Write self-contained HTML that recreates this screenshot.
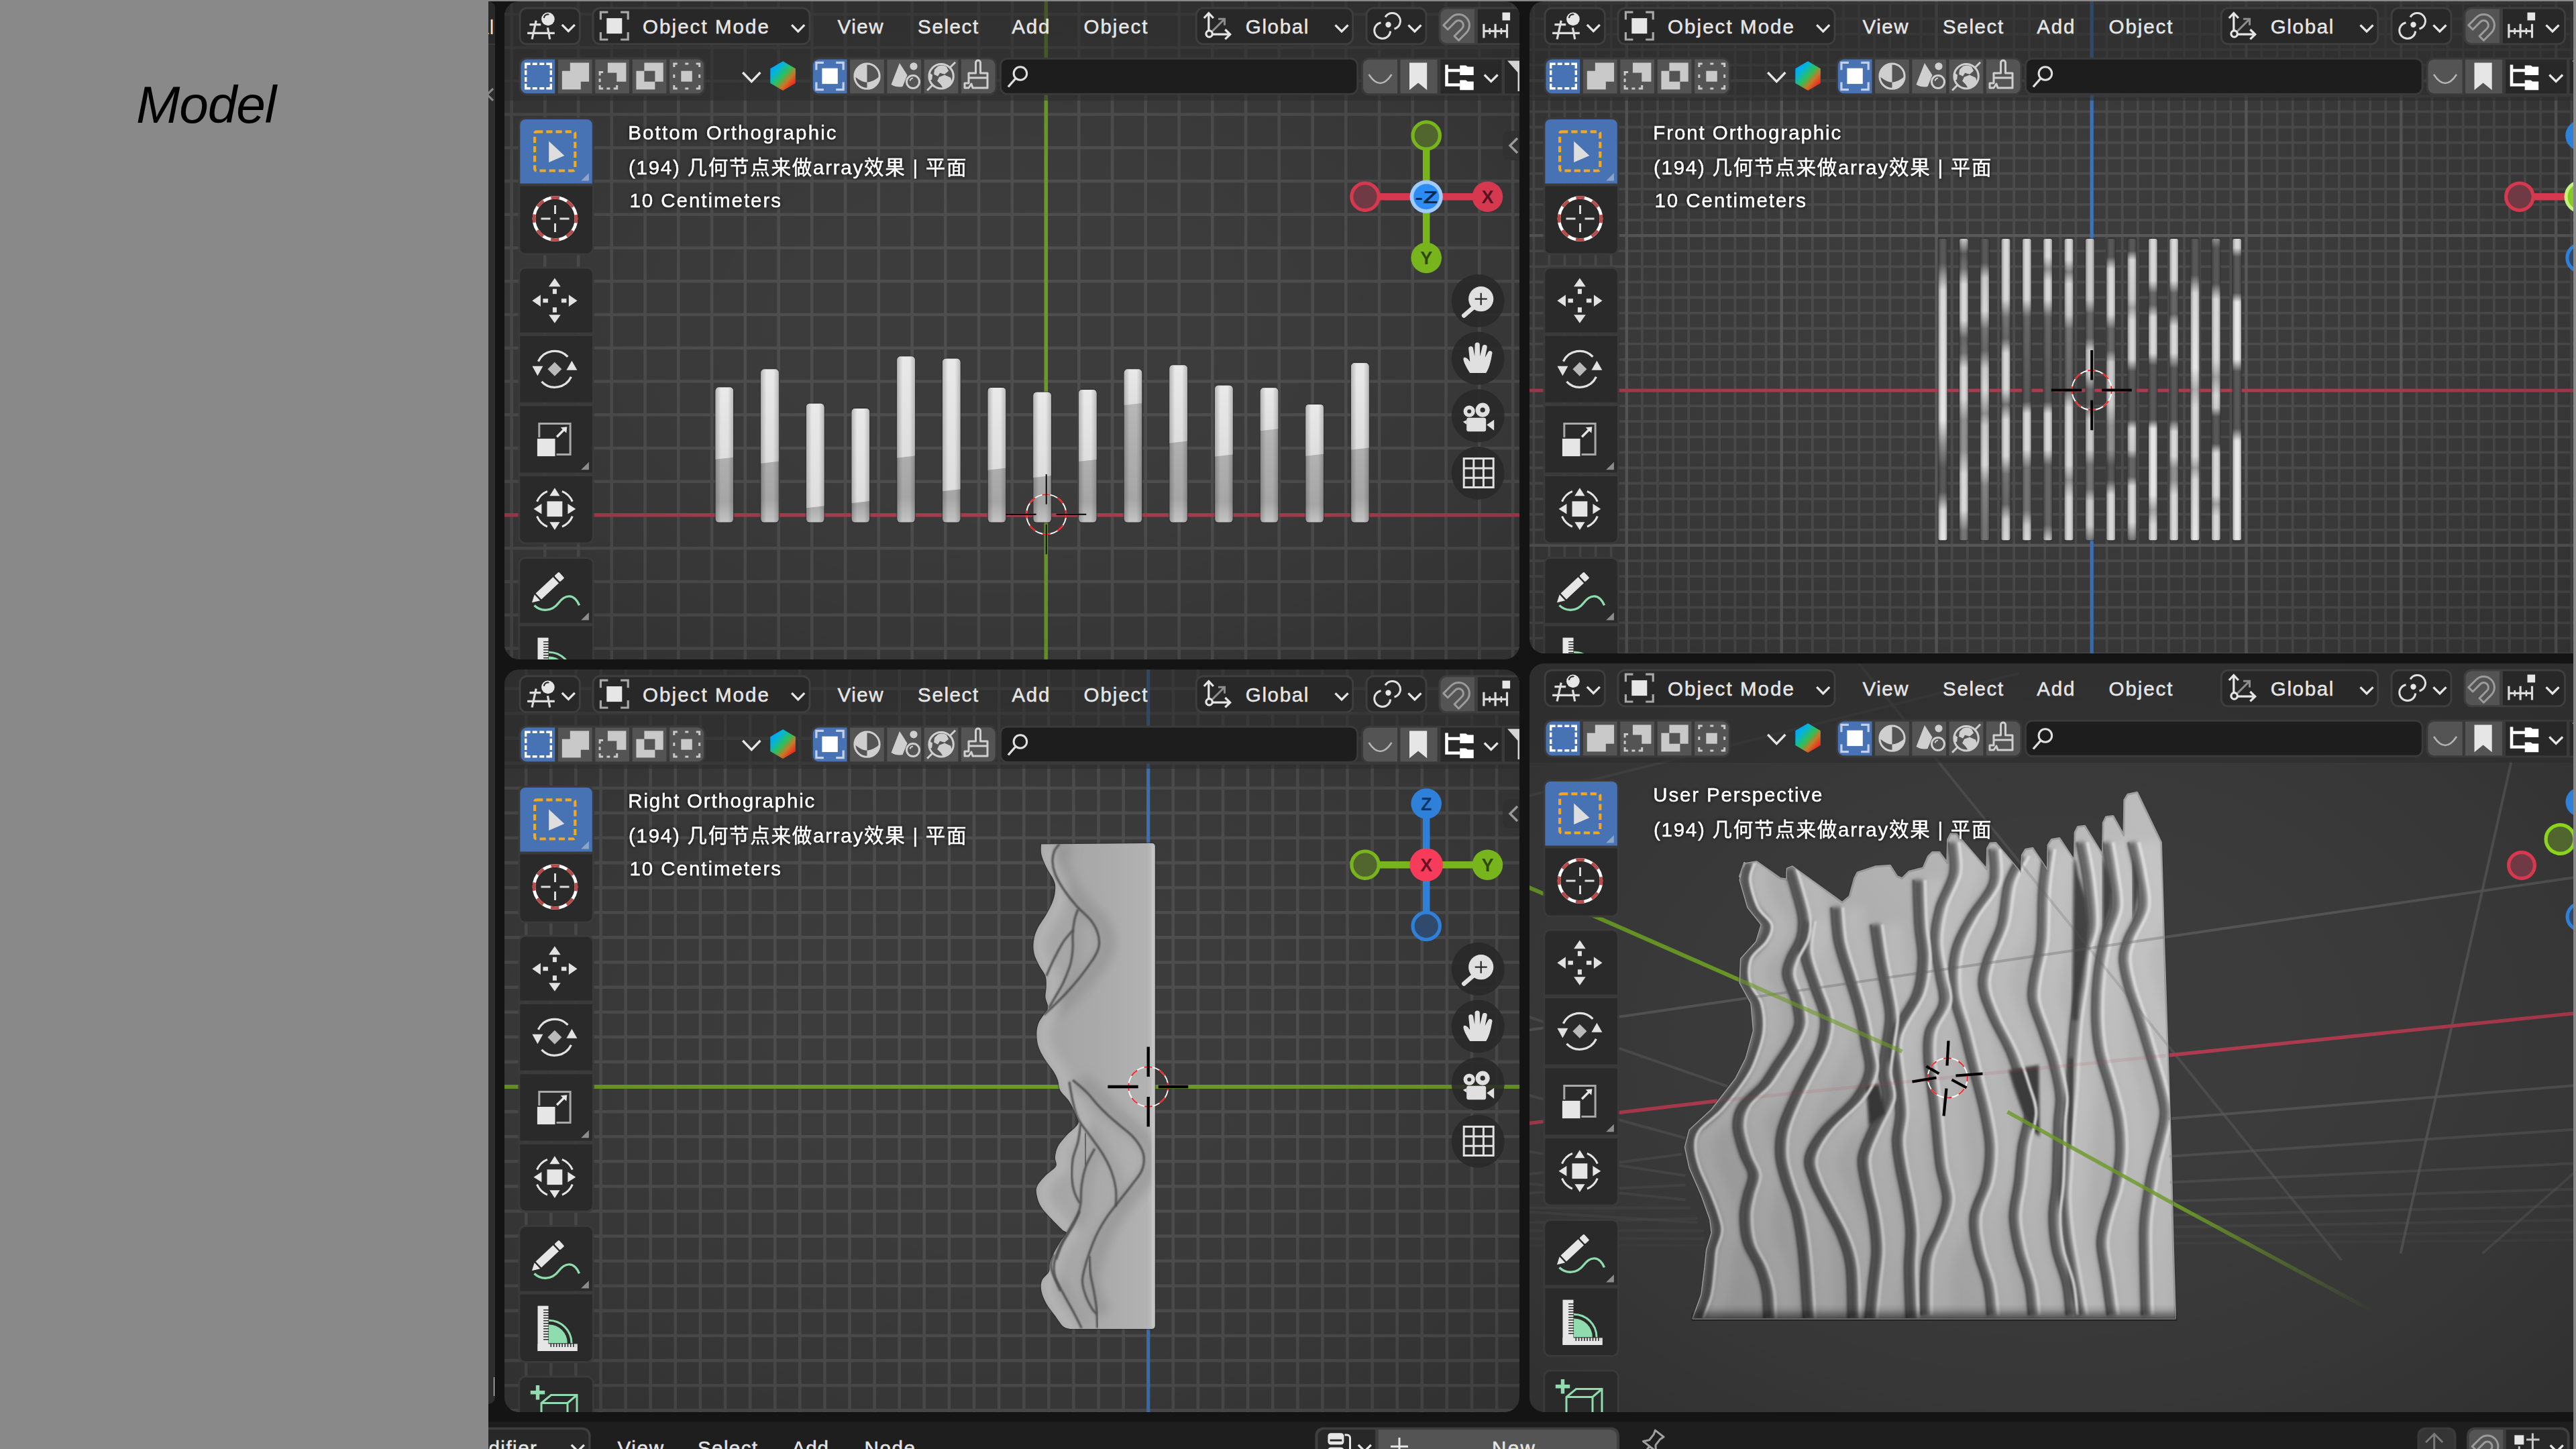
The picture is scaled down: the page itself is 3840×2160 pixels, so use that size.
<!DOCTYPE html><html lang="en"><head><meta charset="utf-8"><title>Model</title><style>
html,body{margin:0;padding:0}
body{width:3840px;height:2160px;overflow:hidden;position:relative;background:#898989;font-family:"Liberation Sans","Noto Sans CJK SC",sans-serif}
#app{position:absolute;left:728px;top:2px;width:3108px;height:2158px;background:#141414;overflow:hidden}
#side{position:absolute;left:0;top:0;width:9.8px;height:2091px;background:#2e2e2e;border-radius:0 10px 10px 0;overflow:hidden}
#side b{position:absolute;left:0;top:0;width:10px;height:63px;background:#292929;border-bottom:2px solid #393939}
#side span{position:absolute;right:0.5px;top:22px;font-size:29.5px;line-height:34px;color:#e6e6e6;white-space:nowrap;letter-spacing:1px}
#side i{position:absolute;left:-1.5px;top:131.5px;width:11px;height:11px;border-left:3.4px solid #8a8a8a;border-bottom:3.4px solid #8a8a8a;transform:rotate(45deg);transform-origin:center}
#side u{position:absolute;left:7.6px;top:2050.5px;width:1.6px;height:28px;background:#e0e0e0}
.vp{position:absolute;overflow:hidden;background:#3c3c3c}
.vp svg{display:block}
#model{position:absolute;left:203px;top:110.5px;font-size:78.4px;line-height:90px;font-style:italic;color:#000;letter-spacing:-1.1px}
#bbar{position:absolute;left:0;top:2113px;width:3108px;height:60px;background:#1d1d1d}
</style></head><body><div id="model">Model</div><div id="app"><div id="side"><b></b><span>al</span><i></i><u></u></div><div class="vp" style="left:23.5px;top:0px;width:1513.5px;height:981px;border-radius:22px"><svg width="1513.5" height="981" viewBox="751.5 2 1513.5 981" font-family='"Liberation Sans", "Noto Sans CJK SC", sans-serif'><defs><linearGradient id="hexg" x1="0.12" y1="0.12" x2="0.88" y2="0.9"><stop offset="0" stop-color="#00a4ff"/><stop offset="0.22" stop-color="#05b4d8"/><stop offset="0.5" stop-color="#2fbf58"/><stop offset="0.72" stop-color="#c67a28"/><stop offset="1" stop-color="#ff1418"/></linearGradient><linearGradient id="barhi" x1="0" y1="0" x2="0" y2="1"><stop offset="0" stop-color="#e9e9e9"/><stop offset="1" stop-color="#dedede"/></linearGradient><linearGradient id="barlo" x1="0" y1="0" x2="0" y2="1"><stop offset="0" stop-color="#bdbdbd"/><stop offset="0.85" stop-color="#a6a6a6"/><stop offset="1" stop-color="#c4c4c4"/></linearGradient><linearGradient id="barx" x1="0" y1="0" x2="1" y2="0"><stop offset="0" stop-color="#000" stop-opacity="0.22"/><stop offset="0.3" stop-color="#000" stop-opacity="0"/><stop offset="0.7" stop-color="#000" stop-opacity="0"/><stop offset="1" stop-color="#000" stop-opacity="0.2"/></linearGradient><linearGradient id="stx" x1="0" y1="0" x2="1" y2="0"><stop offset="0" stop-color="#000" stop-opacity="0.3"/><stop offset="0.35" stop-color="#000" stop-opacity="0"/><stop offset="0.7" stop-color="#000" stop-opacity="0"/><stop offset="1" stop-color="#000" stop-opacity="0.25"/></linearGradient><linearGradient id="v3g" gradientUnits="userSpaceOnUse" x1="1540" y1="0" x2="1722" y2="0"><stop offset="0" stop-color="#a4a4a4"/><stop offset="0.5" stop-color="#a9a9a9"/><stop offset="0.93" stop-color="#b2b2b2"/><stop offset="1" stop-color="#c2c2c2"/></linearGradient><linearGradient id="yfade" gradientUnits="userSpaceOnUse" x1="3238" y1="1790" x2="3540" y2="1958"><stop offset="0" stop-color="#6b9a27"/><stop offset="1" stop-color="#6b9a27" stop-opacity="0"/></linearGradient><linearGradient id="v4base" gradientUnits="userSpaceOnUse" x1="2500" y1="0" x2="3250" y2="0"><stop offset="0" stop-color="#b4b4b4"/><stop offset="1" stop-color="#b8b8b8"/></linearGradient><linearGradient id="v4diag" gradientUnits="userSpaceOnUse" x1="2540" y1="1960" x2="3200" y2="1250"><stop offset="0" stop-color="#000" stop-opacity="0.2"/><stop offset="0.45" stop-color="#000" stop-opacity="0.07"/><stop offset="1" stop-color="#fff" stop-opacity="0.06"/></linearGradient><linearGradient id="v4bot" x1="0" y1="0" x2="0" y2="1"><stop offset="0" stop-color="#000" stop-opacity="0"/><stop offset="1" stop-color="#000" stop-opacity="0.35"/></linearGradient><filter id="blur1" x="-5%" y="-5%" width="110%" height="110%"><feGaussianBlur stdDeviation="1.2"/></filter><filter id="blur2" x="-5%" y="-5%" width="110%" height="110%"><feGaussianBlur stdDeviation="2"/></filter><filter id="blur3" x="-5%" y="-5%" width="110%" height="110%"><feGaussianBlur stdDeviation="3.2"/></filter><filter id="blur6" x="-5%" y="-5%" width="110%" height="110%"><feGaussianBlur stdDeviation="7"/></filter><radialGradient id="vig" cx="0.5" cy="0.5" r="0.71"><stop offset="0" stop-color="#000" stop-opacity="0"/><stop offset="0.35" stop-color="#000" stop-opacity="0.01"/><stop offset="0.7" stop-color="#000" stop-opacity="0.09"/><stop offset="1" stop-color="#000" stop-opacity="0.2"/></radialGradient><linearGradient id="st0" x1="0" y1="0" x2="0" y2="1"><stop offset="0" stop-color="#585858"/><stop offset="0.08" stop-color="#585858"/><stop offset="0.17" stop-color="#d7d7d7"/><stop offset="0.6" stop-color="#e6e6e6"/><stop offset="0.68" stop-color="#909090"/><stop offset="0.76" stop-color="#585858"/><stop offset="0.84" stop-color="#585858"/><stop offset="0.9" stop-color="#d7d7d7"/><stop offset="1" stop-color="#e6e6e6"/></linearGradient><linearGradient id="st1" x1="0" y1="0" x2="0" y2="1"><stop offset="0" stop-color="#c9c9c9"/><stop offset="0.05" stop-color="#585858"/><stop offset="0.1" stop-color="#747474"/><stop offset="0.15" stop-color="#d7d7d7"/><stop offset="0.27" stop-color="#d7d7d7"/><stop offset="0.33" stop-color="#666666"/><stop offset="0.38" stop-color="#747474"/><stop offset="0.43" stop-color="#d7d7d7"/><stop offset="0.53" stop-color="#d7d7d7"/><stop offset="0.6" stop-color="#909090"/><stop offset="0.7" stop-color="#909090"/><stop offset="0.78" stop-color="#d7d7d7"/><stop offset="0.9" stop-color="#d7d7d7"/><stop offset="0.97" stop-color="#747474"/><stop offset="1" stop-color="#747474"/></linearGradient><linearGradient id="st2" x1="0" y1="0" x2="0" y2="1"><stop offset="0" stop-color="#585858"/><stop offset="0.08" stop-color="#585858"/><stop offset="0.13" stop-color="#c9c9c9"/><stop offset="0.24" stop-color="#d7d7d7"/><stop offset="0.3" stop-color="#747474"/><stop offset="0.37" stop-color="#666666"/><stop offset="0.43" stop-color="#c9c9c9"/><stop offset="0.5" stop-color="#d7d7d7"/><stop offset="0.58" stop-color="#909090"/><stop offset="0.62" stop-color="#c9c9c9"/><stop offset="0.75" stop-color="#d7d7d7"/><stop offset="0.82" stop-color="#828282"/><stop offset="0.95" stop-color="#747474"/><stop offset="1" stop-color="#747474"/></linearGradient><linearGradient id="st3" x1="0" y1="0" x2="0" y2="1"><stop offset="0" stop-color="#d7d7d7"/><stop offset="0.2" stop-color="#d7d7d7"/><stop offset="0.26" stop-color="#747474"/><stop offset="0.33" stop-color="#666666"/><stop offset="0.38" stop-color="#d7d7d7"/><stop offset="0.5" stop-color="#d7d7d7"/><stop offset="0.55" stop-color="#747474"/><stop offset="0.6" stop-color="#d7d7d7"/><stop offset="0.72" stop-color="#d7d7d7"/><stop offset="0.78" stop-color="#747474"/><stop offset="0.88" stop-color="#666666"/><stop offset="0.93" stop-color="#c9c9c9"/><stop offset="1" stop-color="#d7d7d7"/></linearGradient><linearGradient id="st4" x1="0" y1="0" x2="0" y2="1"><stop offset="0" stop-color="#d7d7d7"/><stop offset="0.2" stop-color="#d7d7d7"/><stop offset="0.26" stop-color="#666666"/><stop offset="0.54" stop-color="#585858"/><stop offset="0.58" stop-color="#d7d7d7"/><stop offset="0.7" stop-color="#d7d7d7"/><stop offset="0.76" stop-color="#747474"/><stop offset="0.9" stop-color="#747474"/><stop offset="0.95" stop-color="#c9c9c9"/><stop offset="1" stop-color="#d7d7d7"/></linearGradient><linearGradient id="st5" x1="0" y1="0" x2="0" y2="1"><stop offset="0" stop-color="#d7d7d7"/><stop offset="0.06" stop-color="#d7d7d7"/><stop offset="0.1" stop-color="#909090"/><stop offset="0.14" stop-color="#d7d7d7"/><stop offset="0.2" stop-color="#d7d7d7"/><stop offset="0.26" stop-color="#666666"/><stop offset="0.54" stop-color="#585858"/><stop offset="0.58" stop-color="#d7d7d7"/><stop offset="0.7" stop-color="#d7d7d7"/><stop offset="0.75" stop-color="#666666"/><stop offset="0.95" stop-color="#666666"/><stop offset="1" stop-color="#c9c9c9"/></linearGradient><linearGradient id="st6" x1="0" y1="0" x2="0" y2="1"><stop offset="0" stop-color="#d7d7d7"/><stop offset="0.07" stop-color="#d7d7d7"/><stop offset="0.11" stop-color="#828282"/><stop offset="0.15" stop-color="#d7d7d7"/><stop offset="0.25" stop-color="#c9c9c9"/><stop offset="0.3" stop-color="#747474"/><stop offset="0.5" stop-color="#666666"/><stop offset="0.56" stop-color="#d7d7d7"/><stop offset="0.75" stop-color="#d7d7d7"/><stop offset="0.8" stop-color="#909090"/><stop offset="0.86" stop-color="#d7d7d7"/><stop offset="1" stop-color="#d7d7d7"/></linearGradient><linearGradient id="st7" x1="0" y1="0" x2="0" y2="1"><stop offset="0" stop-color="#c9c9c9"/><stop offset="0.2" stop-color="#c9c9c9"/><stop offset="0.25" stop-color="#666666"/><stop offset="0.33" stop-color="#666666"/><stop offset="0.37" stop-color="#c9c9c9"/><stop offset="0.45" stop-color="#c9c9c9"/><stop offset="0.5" stop-color="#666666"/><stop offset="0.55" stop-color="#666666"/><stop offset="0.6" stop-color="#c9c9c9"/><stop offset="0.7" stop-color="#c9c9c9"/><stop offset="0.75" stop-color="#747474"/><stop offset="0.83" stop-color="#747474"/><stop offset="0.87" stop-color="#c9c9c9"/><stop offset="0.95" stop-color="#c9c9c9"/><stop offset="1" stop-color="#747474"/></linearGradient><linearGradient id="st8" x1="0" y1="0" x2="0" y2="1"><stop offset="0" stop-color="#585858"/><stop offset="0.06" stop-color="#585858"/><stop offset="0.1" stop-color="#d7d7d7"/><stop offset="0.25" stop-color="#d7d7d7"/><stop offset="0.3" stop-color="#666666"/><stop offset="0.37" stop-color="#666666"/><stop offset="0.41" stop-color="#c9c9c9"/><stop offset="0.55" stop-color="#c9c9c9"/><stop offset="0.62" stop-color="#909090"/><stop offset="0.7" stop-color="#909090"/><stop offset="0.75" stop-color="#585858"/><stop offset="0.8" stop-color="#585858"/><stop offset="0.85" stop-color="#d7d7d7"/><stop offset="1" stop-color="#d7d7d7"/></linearGradient><linearGradient id="st9" x1="0" y1="0" x2="0" y2="1"><stop offset="0" stop-color="#585858"/><stop offset="0.04" stop-color="#585858"/><stop offset="0.07" stop-color="#d7d7d7"/><stop offset="0.2" stop-color="#c9c9c9"/><stop offset="0.23" stop-color="#9f9f9f"/><stop offset="0.27" stop-color="#d7d7d7"/><stop offset="0.4" stop-color="#d7d7d7"/><stop offset="0.44" stop-color="#585858"/><stop offset="0.6" stop-color="#585858"/><stop offset="0.63" stop-color="#d7d7d7"/><stop offset="0.7" stop-color="#c9c9c9"/><stop offset="0.73" stop-color="#666666"/><stop offset="0.79" stop-color="#666666"/><stop offset="0.82" stop-color="#d7d7d7"/><stop offset="0.94" stop-color="#d7d7d7"/><stop offset="1" stop-color="#747474"/></linearGradient><linearGradient id="st10" x1="0" y1="0" x2="0" y2="1"><stop offset="0" stop-color="#d7d7d7"/><stop offset="0.14" stop-color="#d7d7d7"/><stop offset="0.18" stop-color="#666666"/><stop offset="0.22" stop-color="#666666"/><stop offset="0.26" stop-color="#d7d7d7"/><stop offset="0.38" stop-color="#d7d7d7"/><stop offset="0.42" stop-color="#585858"/><stop offset="0.6" stop-color="#585858"/><stop offset="0.63" stop-color="#e6e6e6"/><stop offset="0.85" stop-color="#e6e6e6"/><stop offset="0.9" stop-color="#9f9f9f"/><stop offset="0.95" stop-color="#d7d7d7"/><stop offset="1" stop-color="#d7d7d7"/></linearGradient><linearGradient id="st11" x1="0" y1="0" x2="0" y2="1"><stop offset="0" stop-color="#d7d7d7"/><stop offset="0.14" stop-color="#d7d7d7"/><stop offset="0.18" stop-color="#666666"/><stop offset="0.25" stop-color="#666666"/><stop offset="0.29" stop-color="#d7d7d7"/><stop offset="0.38" stop-color="#d7d7d7"/><stop offset="0.43" stop-color="#585858"/><stop offset="0.6" stop-color="#585858"/><stop offset="0.64" stop-color="#d7d7d7"/><stop offset="0.72" stop-color="#d7d7d7"/><stop offset="0.76" stop-color="#909090"/><stop offset="0.8" stop-color="#909090"/><stop offset="0.85" stop-color="#d7d7d7"/><stop offset="1" stop-color="#d7d7d7"/></linearGradient><linearGradient id="st12" x1="0" y1="0" x2="0" y2="1"><stop offset="0" stop-color="#585858"/><stop offset="0.12" stop-color="#585858"/><stop offset="0.18" stop-color="#d7d7d7"/><stop offset="0.43" stop-color="#e6e6e6"/><stop offset="0.5" stop-color="#adadad"/><stop offset="0.56" stop-color="#d7d7d7"/><stop offset="0.72" stop-color="#d7d7d7"/><stop offset="0.76" stop-color="#9f9f9f"/><stop offset="0.8" stop-color="#d7d7d7"/><stop offset="1" stop-color="#e6e6e6"/></linearGradient><linearGradient id="st13" x1="0" y1="0" x2="0" y2="1"><stop offset="0" stop-color="#909090"/><stop offset="0.03" stop-color="#585858"/><stop offset="0.15" stop-color="#585858"/><stop offset="0.2" stop-color="#d7d7d7"/><stop offset="0.4" stop-color="#d7d7d7"/><stop offset="0.46" stop-color="#9f9f9f"/><stop offset="0.52" stop-color="#d7d7d7"/><stop offset="0.56" stop-color="#c9c9c9"/><stop offset="0.59" stop-color="#585858"/><stop offset="0.68" stop-color="#585858"/><stop offset="0.71" stop-color="#d7d7d7"/><stop offset="0.85" stop-color="#d7d7d7"/><stop offset="0.88" stop-color="#9f9f9f"/><stop offset="0.92" stop-color="#d7d7d7"/><stop offset="1" stop-color="#d7d7d7"/></linearGradient><linearGradient id="st14" x1="0" y1="0" x2="0" y2="1"><stop offset="0" stop-color="#d7d7d7"/><stop offset="0.03" stop-color="#d7d7d7"/><stop offset="0.06" stop-color="#585858"/><stop offset="0.18" stop-color="#585858"/><stop offset="0.21" stop-color="#e6e6e6"/><stop offset="0.4" stop-color="#e6e6e6"/><stop offset="0.44" stop-color="#585858"/><stop offset="0.63" stop-color="#585858"/><stop offset="0.67" stop-color="#e6e6e6"/><stop offset="1" stop-color="#e6e6e6"/></linearGradient></defs><path d="M712.3 0V984M762.1 0V984M811.8 0V984M861.6 0V984M911.3 0V984M961.1 0V984M1010.8 0V984M1060.6 0V984M1110.3 0V984M1160.1 0V984M1209.8 0V984M1259.6 0V984M1309.3 0V984M1359.1 0V984M1408.8 0V984M1458.6 0V984M1508.3 0V984M1607.8 0V984M1657.6 0V984M1707.3 0V984M1757.1 0V984M1806.8 0V984M1856.6 0V984M1906.3 0V984M1956.1 0V984M2005.8 0V984M2055.6 0V984M2105.3 0V984M2155.1 0V984M2204.8 0V984M2254.6 0V984M2304.3 0V984M751 -28.5H2266M751 21.2H2266M751 71.0H2266M751 120.8H2266M751 170.5H2266M751 220.2H2266M751 270.0H2266M751 319.8H2266M751 369.5H2266M751 419.2H2266M751 469.0H2266M751 518.8H2266M751 568.5H2266M751 618.2H2266M751 668.0H2266M751 717.8H2266M751 817.2H2266M751 867.0H2266M751 916.8H2266M751 966.5H2266M751 1016.2H2266" stroke="#4e4e4e" stroke-width="4.6" fill="none"/><path d="M751 767.7 H2266" stroke="#ad3b4f" stroke-width="5.6"/><path d="M1558.8 0 V984" stroke="#6b9a27" stroke-width="5.6"/><rect x="751.5" y="2.0" width="1513.5" height="981.0" rx="0" fill="url(#vig)" /><rect x="1064.7" y="576.0" width="29.3" height="204.1" rx="6" fill="#2e2e2e" fill-opacity="0.55"/><rect x="1066.2" y="577.5" width="26.3" height="201.1" rx="5" fill="url(#barlo)" /><path d="M1066.2 684.7 V582.5 a5 5 0 0 1 5 -5 H1087.5 a5 5 0 0 1 5 5 V681.7 Z" fill="url(#barhi)"/><rect x="1066.2" y="577.5" width="26.3" height="201.1" rx="5" fill="url(#barx)" /><rect x="1132.4" y="549.0" width="29.3" height="231.1" rx="6" fill="#2e2e2e" fill-opacity="0.55"/><rect x="1133.9" y="550.5" width="26.3" height="228.1" rx="5" fill="url(#barlo)" /><path d="M1133.88 690.7 V555.5 a5 5 0 0 1 5 -5 H1155.18 a5 5 0 0 1 5 5 V687.7 Z" fill="url(#barhi)"/><rect x="1133.9" y="550.5" width="26.3" height="228.1" rx="5" fill="url(#barx)" /><rect x="1200.1" y="600.2" width="29.3" height="179.9" rx="6" fill="#2e2e2e" fill-opacity="0.55"/><rect x="1201.6" y="601.7" width="26.3" height="176.9" rx="5" fill="url(#barlo)" /><path d="M1201.56 757.3 V606.7 a5 5 0 0 1 5 -5 H1222.86 a5 5 0 0 1 5 5 V754.3 Z" fill="url(#barhi)"/><rect x="1201.6" y="601.7" width="26.3" height="176.9" rx="5" fill="url(#barx)" /><rect x="1267.7" y="607.5" width="29.3" height="172.6" rx="6" fill="#2e2e2e" fill-opacity="0.55"/><rect x="1269.2" y="609.0" width="26.3" height="169.6" rx="5" fill="url(#barlo)" /><path d="M1269.24 750.1 V614 a5 5 0 0 1 5 -5 H1290.54 a5 5 0 0 1 5 5 V747.1 Z" fill="url(#barhi)"/><rect x="1269.2" y="609.0" width="26.3" height="169.6" rx="5" fill="url(#barx)" /><rect x="1335.4" y="530.0" width="29.3" height="250.1" rx="6" fill="#2e2e2e" fill-opacity="0.55"/><rect x="1336.9" y="531.5" width="26.3" height="247.1" rx="5" fill="url(#barlo)" /><path d="M1336.92 682.6 V536.5 a5 5 0 0 1 5 -5 H1358.22 a5 5 0 0 1 5 5 V679.6 Z" fill="url(#barhi)"/><rect x="1336.9" y="531.5" width="26.3" height="247.1" rx="5" fill="url(#barx)" /><rect x="1403.1" y="533.2" width="29.3" height="246.9" rx="6" fill="#2e2e2e" fill-opacity="0.55"/><rect x="1404.6" y="534.7" width="26.3" height="243.9" rx="5" fill="url(#barlo)" /><path d="M1404.6000000000001 732.3 V539.7 a5 5 0 0 1 5 -5 H1425.9 a5 5 0 0 1 5 5 V729.3 Z" fill="url(#barhi)"/><rect x="1404.6" y="534.7" width="26.3" height="243.9" rx="5" fill="url(#barx)" /><rect x="1470.8" y="576.4" width="29.3" height="203.7" rx="6" fill="#2e2e2e" fill-opacity="0.55"/><rect x="1472.3" y="577.9" width="26.3" height="200.7" rx="5" fill="url(#barlo)" /><path d="M1472.2800000000002 700.8 V582.9 a5 5 0 0 1 5 -5 H1493.5800000000002 a5 5 0 0 1 5 5 V697.8 Z" fill="url(#barhi)"/><rect x="1472.3" y="577.9" width="26.3" height="200.7" rx="5" fill="url(#barx)" /><rect x="1538.5" y="583.3" width="29.3" height="196.8" rx="6" fill="#2e2e2e" fill-opacity="0.55"/><rect x="1540.0" y="584.8" width="26.3" height="193.8" rx="5" fill="url(#barlo)" /><path d="M1539.96 712.1 V589.8 a5 5 0 0 1 5 -5 H1561.26 a5 5 0 0 1 5 5 V709.1 Z" fill="url(#barhi)"/><rect x="1540.0" y="584.8" width="26.3" height="193.8" rx="5" fill="url(#barx)" /><rect x="1606.1" y="579.6" width="29.3" height="200.5" rx="6" fill="#2e2e2e" fill-opacity="0.55"/><rect x="1607.6" y="581.1" width="26.3" height="197.5" rx="5" fill="url(#barlo)" /><path d="M1607.64 687.9 V586.1 a5 5 0 0 1 5 -5 H1628.94 a5 5 0 0 1 5 5 V684.9 Z" fill="url(#barhi)"/><rect x="1607.6" y="581.1" width="26.3" height="197.5" rx="5" fill="url(#barx)" /><rect x="1673.8" y="549.0" width="29.3" height="231.1" rx="6" fill="#2e2e2e" fill-opacity="0.55"/><rect x="1675.3" y="550.5" width="26.3" height="228.1" rx="5" fill="url(#barlo)" /><path d="M1675.3200000000002 603.9 V555.5 a5 5 0 0 1 5 -5 H1696.6200000000001 a5 5 0 0 1 5 5 V600.9 Z" fill="url(#barhi)"/><rect x="1675.3" y="550.5" width="26.3" height="228.1" rx="5" fill="url(#barx)" /><rect x="1741.5" y="542.9" width="29.3" height="237.2" rx="6" fill="#2e2e2e" fill-opacity="0.55"/><rect x="1743.0" y="544.4" width="26.3" height="234.2" rx="5" fill="url(#barlo)" /><path d="M1743.0 660.4 V549.4 a5 5 0 0 1 5 -5 H1764.3 a5 5 0 0 1 5 5 V657.4 Z" fill="url(#barhi)"/><rect x="1743.0" y="544.4" width="26.3" height="234.2" rx="5" fill="url(#barx)" /><rect x="1809.2" y="573.2" width="29.3" height="206.9" rx="6" fill="#2e2e2e" fill-opacity="0.55"/><rect x="1810.7" y="574.7" width="26.3" height="203.9" rx="5" fill="url(#barlo)" /><path d="M1810.68 680.6 V579.7 a5 5 0 0 1 5 -5 H1831.98 a5 5 0 0 1 5 5 V677.6 Z" fill="url(#barhi)"/><rect x="1810.7" y="574.7" width="26.3" height="203.9" rx="5" fill="url(#barx)" /><rect x="1876.9" y="576.8" width="29.3" height="203.3" rx="6" fill="#2e2e2e" fill-opacity="0.55"/><rect x="1878.4" y="578.3" width="26.3" height="200.3" rx="5" fill="url(#barlo)" /><path d="M1878.3600000000001 642.3 V583.3 a5 5 0 0 1 5 -5 H1899.66 a5 5 0 0 1 5 5 V639.3 Z" fill="url(#barhi)"/><rect x="1878.4" y="578.3" width="26.3" height="200.3" rx="5" fill="url(#barx)" /><rect x="1944.5" y="601.4" width="29.3" height="178.7" rx="6" fill="#2e2e2e" fill-opacity="0.55"/><rect x="1946.0" y="602.9" width="26.3" height="175.7" rx="5" fill="url(#barlo)" /><path d="M1946.0400000000002 679.8 V607.9 a5 5 0 0 1 5 -5 H1967.3400000000001 a5 5 0 0 1 5 5 V676.8 Z" fill="url(#barhi)"/><rect x="1946.0" y="602.9" width="26.3" height="175.7" rx="5" fill="url(#barx)" /><rect x="2012.2" y="539.7" width="29.3" height="240.4" rx="6" fill="#2e2e2e" fill-opacity="0.55"/><rect x="2013.7" y="541.2" width="26.3" height="237.4" rx="5" fill="url(#barlo)" /><path d="M2013.7200000000003 670.5 V546.2 a5 5 0 0 1 5 -5 H2035.0200000000002 a5 5 0 0 1 5 5 V667.5 Z" fill="url(#barhi)"/><rect x="2013.7" y="541.2" width="26.3" height="237.4" rx="5" fill="url(#barx)" /><g transform="rotate(0 1559.2 766.7)"><circle cx="1559.2" cy="766.7" r="29.6" fill="none" stroke="#ffffff" stroke-width="1.9"/><circle cx="1559.2" cy="766.7" r="29.6" fill="none" stroke="#ff1a1a" stroke-width="1.9" stroke-dasharray="11.62 11.62" transform="rotate(-12 1559.2 766.7)"/><path d="M1559.2 707.1 V751.7 M1559.2 781.7 V826.3000000000001 M1498.9 766.7 H1544.2 M1574.2 766.7 H1618.8" stroke="#000" stroke-width="1.9"/></g><g transform="translate(0 0)"><rect x="740.0" y="-10.0" width="1620.0" height="160.0" rx="0" fill="#2b2b2b" fill-opacity="0.55"/><rect x="773.0" y="10.6" width="92.4" height="56.7" rx="12" fill="#3e3e3e" /><rect x="776.0" y="13.6" width="86.4" height="50.7" rx="9" fill="#282828" /><circle cx="816.4" cy="28.4" r="9.8" fill="#e6e6e6"/><path d="M810.5 26 A6 6 0 0 1 817 21.5" fill="none" stroke="#282828" stroke-width="2.2" stroke-linecap="round"/><path d="M788.9 36.6 H805.7 M785.6 49.4 H826.3 M798.7 30.6 L792.6 58.5 M815.9 41.3 L819.2 58.5" fill="none" stroke="#dcdcdc" stroke-width="3.2"/><path d="M837.3 36.8 L846.8 46.4 L856.3 36.8" fill="none" stroke="#e6e6e6" stroke-width="3.3"/><rect x="882.0" y="10.6" width="326.0" height="56.7" rx="12" fill="#3e3e3e" /><rect x="885.0" y="13.6" width="320.0" height="50.7" rx="9" fill="#282828" /><path d="M894.9 29.2 V18.2 H905.9 M924.6999999999999 18.2 H935.6999999999999 V29.2 M935.6999999999999 48.0 V59.0 H924.6999999999999 M905.9 59.0 H894.9 V48.0" fill="none" stroke="#a8a8a8" stroke-width="3.2"/><rect x="903.8" y="27.1" width="23.0" height="23.0" rx="0" fill="#e6e6e6" /><text x="957.5" y="49.9" font-size="29.5" fill="#e6e6e6" stroke="#e6e6e6" stroke-width="0.5" text-anchor="start" font-weight="normal" textLength="188.0" lengthAdjust="spacing" >Object Mode</text><path d="M1179.7 37.2 L1189.2 46.8 L1198.7 37.2" fill="none" stroke="#e6e6e6" stroke-width="3.3"/><text x="1248.0" y="49.9" font-size="29.5" fill="#e6e6e6" stroke="#e6e6e6" stroke-width="0.5" text-anchor="start" font-weight="normal" textLength="68.0" lengthAdjust="spacing" >View</text><text x="1367.6" y="49.9" font-size="29.5" fill="#e6e6e6" stroke="#e6e6e6" stroke-width="0.5" text-anchor="start" font-weight="normal" textLength="90.0" lengthAdjust="spacing" >Select</text><text x="1507.7" y="49.9" font-size="29.5" fill="#e6e6e6" stroke="#e6e6e6" stroke-width="0.5" text-anchor="start" font-weight="normal" textLength="56.3" lengthAdjust="spacing" >Add</text><text x="1615.0" y="49.9" font-size="29.5" fill="#e6e6e6" stroke="#e6e6e6" stroke-width="0.5" text-anchor="start" font-weight="normal" textLength="95.0" lengthAdjust="spacing" >Object</text><rect x="1781.2" y="10.6" width="236.5" height="56.7" rx="12" fill="#3e3e3e" /><rect x="1784.2" y="13.6" width="230.5" height="50.7" rx="9" fill="#282828" /><path d="M1806.8 46.4 L1825 28.2 M1815.5 28.2 H1825 V37.7" fill="none" stroke="#8c8c8c" stroke-width="3"/><path d="M1801.3 45 V19.5 M1794.3 27 L1801.3 19.5 L1808.3 27" fill="none" stroke="#e6e6e6" stroke-width="3.2"/><path d="M1807.2 51.2 H1833 M1825.8 44 L1833.2 51.2 L1825.8 58.4" fill="none" stroke="#e6e6e6" stroke-width="3.2"/><circle cx="1802.1" cy="50.4" r="4.7" fill="none" stroke="#e6e6e6" stroke-width="3.2"/><text x="1856.3" y="49.9" font-size="29.5" fill="#e6e6e6" stroke="#e6e6e6" stroke-width="0.5" text-anchor="start" font-weight="normal" textLength="93.5" lengthAdjust="spacing" >Global</text><path d="M1990.0 37.3 L1999.5 46.9 L2009.0 37.3" fill="none" stroke="#e6e6e6" stroke-width="3.3"/><rect x="2035.0" y="10.6" width="92.0" height="56.7" rx="12" fill="#3e3e3e" /><rect x="2038.0" y="13.6" width="86.0" height="50.7" rx="9" fill="#282828" /><path d="M2064.5 25.5 A12 12 0 1 1 2078 43" fill="none" stroke="#e0e0e0" stroke-width="3"/><path d="M2058 33.7 A12 12 0 1 0 2072.2 46.5" fill="none" stroke="#e0e0e0" stroke-width="3"/><circle cx="2069" cy="36.8" r="4.2" fill="#e6e6e6"/><path d="M2098.9 37.3 L2108.4 46.9 L2117.9 37.3" fill="none" stroke="#e6e6e6" stroke-width="3.3"/><rect x="2144.0" y="10.6" width="159.0" height="56.7" rx="12" fill="#3e3e3e" /><path d="M2156 13.6 H2197.6 V64.3 H2156 a9 9 0 0 1 -9 -9 V22.6 a9 9 0 0 1 9 -9 Z" fill="#545454"/><path d="M2202.4 13.6 H2291 a9 9 0 0 1 9 9 V55.3 a9 9 0 0 1 -9 9 H2202.4 Z" fill="#282828"/><g transform="translate(2172.5 39) rotate(45)" fill="none" stroke="#9b9b9b" stroke-width="3" stroke-linejoin="round"><path d="M-16 14 V-2 A16 16 0 0 1 16 -2 V14 H7 V-2 A7 7 0 0 0 -7 -2 V14 Z"/></g><path d="M2211.4 35.8 V56.5 M2228.6 35.8 V56.5 M2246 35.8 V56.5 M2211.4 46.4 H2246" fill="none" stroke="#dcdcdc" stroke-width="3.2"/><path d="M2220.2 42 V51 M2237.4 42 V51" fill="none" stroke="#dcdcdc" stroke-width="2.6"/><rect x="2239.0" y="18.6" width="11.6" height="11.8" rx="0" fill="#e6e6e6" /><rect x="773.0" y="85.6" width="278.0" height="56.8" rx="12" fill="#3a3a3a" /><path d="M785.0 88.6 H826.7 V139.3 H785.0 a9 9 0 0 1 -9 -9 V97.6 a9 9 0 0 1 9 -9 Z" fill="#4772b3"/><rect x="831.4" y="88.6" width="50.7" height="50.7" rx="0" fill="#545454" /><rect x="886.8" y="88.6" width="50.7" height="50.7" rx="0" fill="#545454" /><rect x="942.3" y="88.6" width="50.7" height="50.7" rx="0" fill="#545454" /><path d="M997.6800000000001 88.6 H1039.38 a9 9 0 0 1 9 9 V130.3 a9 9 0 0 1 -9 9 H997.6800000000001 Z" fill="#545454"/><path d="M783.2 102.2 V95.2 H790.2 M813.8 95.2 H820.8 V102.2 M820.8 124.69999999999999 V131.7 H813.8 M790.2 131.7 H783.2 V124.69999999999999 M793.2 95.2 h7 M793.2 131.7 h7 M783.2 104.8 v7 M820.8 104.8 v7 M803.8 95.2 h7 M803.8 131.7 h7 M783.2 115.1 v7 M820.8 115.1 v7 " fill="none" stroke="#ffffff" stroke-width="3.4"/><rect x="849.3" y="93.5" width="28.3" height="28.2" rx="0" fill="#c9c9c9" /><rect x="837.3" y="105.7" width="28.0" height="27.7" rx="0" fill="#c9c9c9" /><path d="M905.3999999999999 93.5 H932.9 V121.7 H918.8 V108.5 H905.3999999999999 Z" fill="#c9c9c9"/><path d="M893.6 112.6 V107.6 H898.6 M893.6 117.3 v5 M893.6 127 V132 H898.6 M903.9 132 h5 M914.2 132 H919.2 V127" fill="none" stroke="#c9c9c9" stroke-width="3"/><rect x="959.9" y="93.5" width="28.3" height="28.2" rx="0" fill="#c9c9c9" /><rect x="947.9" y="105.7" width="28.0" height="27.7" rx="0" fill="#c9c9c9" /><rect x="959.9" y="105.7" width="16.0" height="16.0" rx="0" fill="#545454" /><path d="M1004.3 100.0 V95.0 H1009.3 M1037.2 95.0 H1042.2 V100.0 M1042.2 126.9 V131.9 H1037.2 M1009.3 131.9 H1004.3 V126.9 M1020.8 95.0 h5 M1020.8 131.9 h5 M1004.3 111.0 v5 M1042.2 111.0 v5 " fill="none" stroke="#c9c9c9" stroke-width="3"/><rect x="1014.8" y="105.7" width="16.5" height="16.0" rx="0" fill="#c9c9c9" /><path d="M1106.7 108.0 L1119.8 121.6 L1132.9 108.0" fill="none" stroke="#e6e6e6" stroke-width="3.4"/><polygon points="1166.6,91.3 1185.4,102.2 1185.4,124.0 1166.6,134.9 1147.8,124.0 1147.8,102.2" fill="url(#hexg)"/><rect x="1208.3" y="85.6" width="277.3" height="56.8" rx="12" fill="#3a3a3a" /><path d="M1220.3 88.6 H1262.0 V139.3 H1220.3 a9 9 0 0 1 -9 -9 V97.6 a9 9 0 0 1 9 -9 Z" fill="#4772b3"/><rect x="1266.6" y="88.6" width="50.7" height="50.7" rx="0" fill="#545454" /><rect x="1321.9" y="88.6" width="50.7" height="50.7" rx="0" fill="#545454" /><rect x="1377.1" y="88.6" width="50.7" height="50.7" rx="0" fill="#545454" /><path d="M1432.42 88.6 H1474.1200000000001 a9 9 0 0 1 9 9 V130.3 a9 9 0 0 1 -9 9 H1432.42 Z" fill="#545454"/><path d="M1216.4 104.3 V93.3 H1227.4 M1245.7 93.3 H1256.7 V104.3 M1256.7 122.6 V133.6 H1245.7 M1227.4 133.6 H1216.4 V122.6" fill="none" stroke="#c3d0e8" stroke-width="3.2"/><rect x="1224.9" y="101.7" width="23.4" height="23.4" rx="0" fill="#ffffff" /><circle cx="1292" cy="113.7" r="18.6" fill="#545454" stroke="#cfcfcf" stroke-width="3"/><path d="M1292 113.7 V95.1 A18.6 18.6 0 0 0 1273.4 113.7 Q1284 122.7 1292 122.7 Z" fill="#cfcfcf"/><path d="M1292 122.7 Q1302 121.7 1310.6 113.7 A18.6 18.6 0 0 1 1292 132.3 Z" fill="#cfcfcf"/><path d="M1340.5 94 L1328 126 Q1336 131 1345 129 L1352 112 Z" fill="#cfcfcf"/><circle cx="1360.5" cy="122" r="9.5" fill="#545454" stroke="#cfcfcf" stroke-width="3"/><path d="M1356 120.5 A5 5 0 0 1 1360.5 116.5" fill="none" stroke="#cfcfcf" stroke-width="2"/><circle cx="1361.5" cy="98.8" r="5.6" fill="#cfcfcf"/><circle cx="1402.6" cy="113.7" r="18.2" fill="none" stroke="#cfcfcf" stroke-width="3"/><path d="M1397.6 98.7 q8 -3 13 1 l3 6 l-6 5 l-7 -2 l-3 5 l-6 -3 l1 -7 Z" fill="#cfcfcf"/><path d="M1399.6 114.7 l8 -3 l9 4 l2 6 l-5 8 l-8 2 l-4 -6 l-5 -5 Z" fill="#cfcfcf"/><path d="M1385.6 108.7 l4 3 l-1 7 l-4 1 Z" fill="#cfcfcf"/><path d="M1381.6 134.7 L1390.6 125.7 M1414.6 101.7 L1423.6 92.7" stroke="#cfcfcf" stroke-width="3"/><path d="M1454.0 93.5 a3.5 3.5 0 0 1 7 0 V109 H1471.5 V131 H1449.5 l-2 -6 l-4 6 H1437.5 V124 H1443.5 V109 H1454.0 Z M1443.5 116 H1471.5" fill="none" stroke="#cfcfcf" stroke-width="3" stroke-linejoin="round"/><rect x="1489.4" y="85.7" width="535.3" height="56.1" rx="12" fill="#3a3a3a" /><rect x="1492.4" y="88.7" width="529.3" height="50.1" rx="9" fill="#1d1d1d" /><circle cx="1520.4" cy="109.5" r="9.8" fill="none" stroke="#e0e0e0" stroke-width="3"/><path d="M1513.4 117.0 L1502.4 129.5" stroke="#e0e0e0" stroke-width="3.4"/><rect x="2028.5" y="85.7" width="300.0" height="56.7" rx="12" fill="#3a3a3a" /><path d="M2040.5 88.7 H2082.5 V139.3 H2040.5 a9 9 0 0 1 -9 -9 V97.7 a9 9 0 0 1 9 -9 Z" fill="#545454"/><rect x="2087.0" y="88.7" width="55.0" height="50.6" rx="0" fill="#545454" /><rect x="2147.0" y="88.7" width="91.0" height="50.6" rx="0" fill="#282828" /><rect x="2242.6" y="88.7" width="60.0" height="50.6" rx="0" fill="#282828" /><path d="M2040 111 Q2057 137 2074 111" fill="none" stroke="#b4b4b4" stroke-width="2.6"/><path d="M2100.5 93.4 H2126.7 V134.2 L2113.6 123.5 L2100.5 134.2 Z" fill="#e6e6e6"/><path d="M2156 96.5 V126.5 H2176 M2156 105 H2176" fill="none" stroke="#ffffff" stroke-width="4.6"/><path d="M2175.7 97.5 h9 l2.5 2 h9 v12.6 h-20.5 Z" fill="#ffffff"/><path d="M2175.7 119.6 h9 l2.5 2 h9 v12.6 h-20.5 Z" fill="#ffffff"/><path d="M2212.3 111.5 L2222.2 121.4 L2232.1 111.5" fill="none" stroke="#e6e6e6" stroke-width="3.3"/><path d="M2246.5 90.5 H2279 L2266.5 106 V136 H2262 V108 Z" fill="#d4d4d4"/><rect x="771.8" y="175.0" width="113.5" height="205.5" rx="11" fill="#3b3b3b" fill-opacity="0.9"/><path d="M774.8 273.5 V186 a8 8 0 0 1 8 -8 H874.3 a8 8 0 0 1 8 8 V273.5 Z" fill="#4772b3"/><path d="M774.8 277.5 H882.3 V369.5 a8 8 0 0 1 -8 8 H782.8 a8 8 0 0 1 -8 -8 Z" fill="#2a2a2a"/><rect x="796.6" y="196.3" width="60.2" height="58.2" rx="3" fill="none" stroke="#f4a81d" stroke-width="4.2" stroke-dasharray="9.2 5"/><polygon points="817.7,210.4 817.7,242.0 840.8,232.0" fill="#dedede"/><polygon points="877.4,258.0 877.4,269.5 865.6,269.5" fill="#8fa3c7"/><circle cx="827" cy="326" r="31.5" fill="none" stroke="#ffffff" stroke-width="4.6"/><circle cx="827" cy="326" r="31.5" fill="none" stroke="#b84a4a" stroke-width="4.6" stroke-dasharray="12.37 12.37" transform="rotate(-101 827 326)"/><path d="M827 306 V319 M827 333 V346 M806 326 H820 M834 326 H848" stroke="#dcdcdc" stroke-width="3"/><rect x="771.8" y="397.5" width="113.5" height="413.9" rx="11" fill="#3b3b3b" fill-opacity="0.9"/><path d="M774.8 495.5 V408.5 a8 8 0 0 1 8 -8 H874.3 a8 8 0 0 1 8 8 V495.5 Z" fill="#2a2a2a"/><rect x="774.8" y="501.0" width="107.5" height="98.7" rx="0" fill="#2a2a2a" /><rect x="774.8" y="605.4" width="107.5" height="98.9" rx="0" fill="#2a2a2a" /><path d="M774.8 710 H882.3 V800.4 a8 8 0 0 1 -8 8 H782.8 a8 8 0 0 1 -8 -8 Z" fill="#2a2a2a"/><g transform="rotate(0 826.4 448.2)"><polygon points="826.4,414.59999999999997 835.1999999999999,427.2 817.6,427.2" fill="#e2e2e2"/><rect x="823.4" y="430.7" width="6" height="7.5" fill="#e2e2e2"/></g><g transform="rotate(90 826.4 448.2)"><polygon points="826.4,414.59999999999997 835.1999999999999,427.2 817.6,427.2" fill="#e2e2e2"/><rect x="823.4" y="430.7" width="6" height="7.5" fill="#e2e2e2"/></g><g transform="rotate(180 826.4 448.2)"><polygon points="826.4,414.59999999999997 835.1999999999999,427.2 817.6,427.2" fill="#e2e2e2"/><rect x="823.4" y="430.7" width="6" height="7.5" fill="#e2e2e2"/></g><g transform="rotate(270 826.4 448.2)"><polygon points="826.4,414.59999999999997 835.1999999999999,427.2 817.6,427.2" fill="#e2e2e2"/><rect x="823.4" y="430.7" width="6" height="7.5" fill="#e2e2e2"/></g><polygon points="826.4,539.8 836.9,550.3 826.4,560.8 815.9,550.3" fill="#b9b9b9"/><path d="M801.9 538.8 A27 27 0 0 1 845.9 531.8" fill="none" stroke="#e2e2e2" stroke-width="3.2"/><path d="M850.9 561.8 A27 27 0 0 1 806.9 568.8" fill="none" stroke="#e2e2e2" stroke-width="3.2"/><polygon points="792.9,545.8 808.9,545.8 800.9,560.3" fill="#e2e2e2"/><polygon points="843.9,551.8 859.9,551.8 851.9,537.8" fill="#e2e2e2"/><path d="M803.3 652 V631.5 H849.6 V677.5 H829" fill="none" stroke="#a9a9a9" stroke-width="3"/><rect x="800.4" y="653.9" width="26.6" height="26.2" rx="0" fill="#e6e6e6" /><path d="M829.6 651.2 L841 639.8" stroke="#e6e6e6" stroke-width="3.4"/><polygon points="835.2,637.2 844.8,636.2 843.8,645.6" fill="#e6e6e6"/><polygon points="877.4,688.8 877.4,700.3 865.6,700.3" fill="#8c8c8c"/><rect x="815.0" y="747.3" width="22.8" height="22.8" rx="0" fill="#e6e6e6" /><g transform="rotate(0 826.4 758.7)"><polygon points="826.4,727.3000000000001 834.0,739.2 818.8,739.2" fill="#e6e6e6"/><path d="M837.4 732.3 A28.6 28.6 0 0 1 852.8 747.7" fill="none" stroke="#e6e6e6" stroke-width="3"/></g><g transform="rotate(90 826.4 758.7)"><polygon points="826.4,727.3000000000001 834.0,739.2 818.8,739.2" fill="#e6e6e6"/><path d="M837.4 732.3 A28.6 28.6 0 0 1 852.8 747.7" fill="none" stroke="#e6e6e6" stroke-width="3"/></g><g transform="rotate(180 826.4 758.7)"><polygon points="826.4,727.3000000000001 834.0,739.2 818.8,739.2" fill="#e6e6e6"/><path d="M837.4 732.3 A28.6 28.6 0 0 1 852.8 747.7" fill="none" stroke="#e6e6e6" stroke-width="3"/></g><g transform="rotate(270 826.4 758.7)"><polygon points="826.4,727.3000000000001 834.0,739.2 818.8,739.2" fill="#e6e6e6"/><path d="M837.4 732.3 A28.6 28.6 0 0 1 852.8 747.7" fill="none" stroke="#e6e6e6" stroke-width="3"/></g><rect x="771.8" y="830.0" width="113.5" height="206.0" rx="11" fill="#3b3b3b" fill-opacity="0.9"/><path d="M774.8 928.5 V841 a8 8 0 0 1 8 -8 H874.3 a8 8 0 0 1 8 8 V928.5 Z" fill="#2a2a2a"/><path d="M774.8 933.5 H882.3 V1025 a8 8 0 0 1 -8 8 H782.8 a8 8 0 0 1 -8 -8 Z" fill="#2a2a2a"/><g transform="translate(792.4 898.2) rotate(-43)"><polygon points="0,0 11,-6.2 11,6.2" fill="#e6e6e6"/><rect x="13.5" y="-6.2" width="35.5" height="12.4" fill="#e6e6e6"/><rect x="51.5" y="-6.2" width="9" height="12.4" rx="1.5" fill="#e6e6e6"/></g><path d="M796 902.4 C806 912 822 912 832 899 C842 886 855 884 863 902.4" fill="none" stroke="#8fdcae" stroke-width="3.4"/><polygon points="877.4,913.0 877.4,924.5 865.6,924.5" fill="#8c8c8c"/><path d="M817.5 1006.2 V978.4 A27.8 27.8 0 0 1 845.3 1006.2 Z" fill="#8fdcae"/><path d="M817.5 972.2 A34 34 0 0 1 851.5 1006.2" fill="none" stroke="#8fdcae" stroke-width="3"/><rect x="801.0" y="950.6" width="16.0" height="67.4" rx="0" fill="#e6e6e6" /><rect x="801.0" y="1007.3" width="59.3" height="10.7" rx="0" fill="#e6e6e6" /><path d="M809 956 V1004" stroke="#2b2b2b" stroke-width="8" stroke-dasharray="1.6 2.4" transform="translate(4.6 0)"/><path d="M820 1009.5 H858" stroke="#2b2b2b" stroke-width="5" stroke-dasharray="1.6 2.6"/><rect x="771.8" y="1054.6" width="113.5" height="108.4" rx="11" fill="#3b3b3b" fill-opacity="0.9"/><path d="M774.8 1160 V1065.6 a8 8 0 0 1 8 -8 H874.3 a8 8 0 0 1 8 8 V1160 Z" fill="#2a2a2a"/><path d="M801 1069 V1090.5 M790.3 1079.7 H811.7" stroke="#8fdcae" stroke-width="5.4"/><path d="M806.5 1130 V1095.5 L821 1083.5 H859.5 V1118 M806.5 1095.5 H845.5 V1130 M845.5 1095.5 L859.5 1083.5" fill="none" stroke="#8fdcae" stroke-width="3"/><g style="filter:drop-shadow(0px 0px 2.5px rgba(0,0,0,0.9))"><text x="935.8" y="208.3" font-size="29.5" fill="#ffffff" stroke="#ffffff" stroke-width="0.5" text-anchor="start" font-weight="normal" textLength="310.3" lengthAdjust="spacing" >Bottom Orthographic</text><text x="936.4" y="260.0" font-size="29.5" fill="#ffffff" stroke="#ffffff" stroke-width="0.5" text-anchor="start" font-weight="normal" textLength="503.6" lengthAdjust="spacing" >(194) 几何节点来做array效果 | 平面</text><text x="938.0" y="309.3" font-size="29.5" fill="#ffffff" stroke="#ffffff" stroke-width="0.5" text-anchor="start" font-weight="normal" textLength="225.4" lengthAdjust="spacing" >10 Centimeters</text></g><circle cx="2202.7" cy="448.5" r="39.5" fill="#282828" fill-opacity="0.85"/><circle cx="2202.7" cy="534.1" r="39.5" fill="#282828" fill-opacity="0.85"/><circle cx="2202.7" cy="619.7" r="39.5" fill="#282828" fill-opacity="0.85"/><circle cx="2202.7" cy="705.3" r="39.5" fill="#282828" fill-opacity="0.85"/><circle cx="2207.2" cy="445.7" r="18.6" fill="#e0e0e0"/><path d="M2195.7 458.5 L2181.7 470.5" stroke="#e0e0e0" stroke-width="6.4" stroke-linecap="round"/><path d="M2207.2 436.7 v18 M2198.2 445.7 h18" stroke="#2a2a2a" stroke-width="2.3"/><path d="M2190.7 556.1 C2185.7 548.1 2178.7 536.1 2181.7 533.1 C2184.7 531.1 2188.7 536.1 2190.7 539.1 L2188.7 520.1 a3.4 3.4 0 0 1 6.8 -1 L2197.7 531.1 L2198.1 514.1 a3.6 3.6 0 0 1 7.2 0 L2205.7 531.1 L2209.2 517.1 a3.5 3.5 0 0 1 7 1 L2213.2 533.1 L2217.7 525.1 a3.2 3.2 0 0 1 6 2.5 C2221.7 540.1 2218.7 550.1 2214.7 556.1 Z" fill="#e0e0e0"/><circle cx="2189.7" cy="613.2" r="8.6" fill="#e0e0e0"/><circle cx="2209.7" cy="611.2" r="10.6" fill="#e0e0e0"/><circle cx="2189.7" cy="613.2" r="3" fill="#2f2f2f"/><circle cx="2209.7" cy="611.2" r="3.6" fill="#2f2f2f"/><rect x="2185.7" y="622.7" width="29.0" height="20.5" rx="3" fill="#e0e0e0" /><polygon points="2215.7,633.2 2226.7,625.7 2226.7,641.7" fill="#e0e0e0"/><polygon points="2180.2,628.7 2185.7,626.2 2185.7,632.7" fill="#e0e0e0"/><path d="M2181.7 683.5999999999999 h44 v43 h-44 Z M2196.2999999999997 683.5999999999999 v43 M2210.8999999999996 683.5999999999999 v43 M2181.7 697.8999999999999 h44 M2181.7 712.3 h44" fill="none" stroke="#e0e0e0" stroke-width="3"/><rect x="2239.5" y="195.0" width="40.0" height="44.0" rx="9" fill="#303030" fill-opacity="0.85"/><path d="M2261.5 206 L2250.5 217 L2261.5 228" fill="none" stroke="#9a9a9a" stroke-width="3.4"/></g><path d="M2034.4999999999998 293.2 H2216.8999999999996" stroke="#d6384f" stroke-width="10.5"/><path d="M2125.7 202.0 V384.4" stroke="#78b41c" stroke-width="10.5"/><circle cx="2125.7" cy="202.0" r="20.2" fill="#51662e" stroke="#78b41c" stroke-width="5.2"/><circle cx="2034.4999999999998" cy="293.2" r="20.2" fill="#703a44" stroke="#d6384f" stroke-width="5.2"/><circle cx="2216.8999999999996" cy="293.2" r="22.8" fill="#d6384f"/><text x="2216.8999999999996" y="302.8" font-size="27" font-weight="bold" text-anchor="middle" fill="#3a0a14" fill-opacity="0.82">X</text><circle cx="2125.7" cy="384.4" r="22.8" fill="#78b41c"/><text x="2125.7" y="394.0" font-size="27" font-weight="bold" text-anchor="middle" fill="#1c3000" fill-opacity="0.82">Y</text><circle cx="2125.7" cy="293.2" r="24.6" fill="#9fcbff"/><circle cx="2125.7" cy="293.2" r="19" fill="#2a8cf4"/><text x="2125.7" y="302.5" font-size="26" font-weight="bold" text-anchor="middle" fill="#0a2a50" textLength="34" lengthAdjust="spacingAndGlyphs">-Z</text></svg></div><div class="vp" style="left:1551.5px;top:0px;width:1556.5px;height:972.2px;border-radius:22px 0 0 22px"><svg width="1556.5" height="972.2" viewBox="2279.5 2 1556.5 972.2" font-family='"Liberation Sans", "Noto Sans CJK SC", sans-serif'><path d="M2262.7 0V976M2285.8 0V976M2308.8 0V976M2331.9 0V976M2355.0 0V976M2378.1 0V976M2401.2 0V976M2424.3 0V976M2447.4 0V976M2470.5 0V976M2493.6 0V976M2516.7 0V976M2539.8 0V976M2562.8 0V976M2585.9 0V976M2609.0 0V976M2632.1 0V976M2655.2 0V976M2678.3 0V976M2701.4 0V976M2724.5 0V976M2747.6 0V976M2770.7 0V976M2793.7 0V976M2816.8 0V976M2839.9 0V976M2863.0 0V976M2886.1 0V976M2909.2 0V976M2932.3 0V976M2955.4 0V976M2978.5 0V976M3001.6 0V976M3024.6 0V976M3047.7 0V976M3070.8 0V976M3093.9 0V976M3117.0 0V976M3140.1 0V976M3163.2 0V976M3186.3 0V976M3209.4 0V976M3232.4 0V976M3255.5 0V976M3278.6 0V976M3301.7 0V976M3324.8 0V976M3347.9 0V976M3371.0 0V976M3394.1 0V976M3417.2 0V976M3440.3 0V976M3463.3 0V976M3486.4 0V976M3509.5 0V976M3532.6 0V976M3555.7 0V976M3578.8 0V976M3601.9 0V976M3625.0 0V976M3648.1 0V976M3671.2 0V976M3694.2 0V976M3717.3 0V976M3740.4 0V976M3763.5 0V976M3786.6 0V976M3809.7 0V976M3832.8 0V976M3855.9 0V976M2278 -18.3H3840M2278 4.8H3840M2278 27.8H3840M2278 50.9H3840M2278 74.0H3840M2278 97.1H3840M2278 120.2H3840M2278 143.3H3840M2278 166.4H3840M2278 189.5H3840M2278 212.6H3840M2278 235.6H3840M2278 258.7H3840M2278 281.8H3840M2278 304.9H3840M2278 328.0H3840M2278 351.1H3840M2278 374.2H3840M2278 397.3H3840M2278 420.4H3840M2278 443.5H3840M2278 466.6H3840M2278 489.6H3840M2278 512.7H3840M2278 535.8H3840M2278 558.9H3840M2278 582.0H3840M2278 605.1H3840M2278 628.2H3840M2278 651.3H3840M2278 674.4H3840M2278 697.5H3840M2278 720.5H3840M2278 743.6H3840M2278 766.7H3840M2278 789.8H3840M2278 812.9H3840M2278 836.0H3840M2278 859.1H3840M2278 882.2H3840M2278 905.3H3840M2278 928.4H3840M2278 951.4H3840M2278 974.5H3840M2278 997.6H3840" stroke="#4c4c4c" stroke-width="3.8" fill="none"/><path d="M2193.4 0V976M2424.3 0V976M2655.2 0V976M2886.1 0V976M3347.9 0V976M3578.8 0V976M3809.7 0V976M4040.6 0V976M2278 -110.7H3840M2278 120.2H3840M2278 351.1H3840M2278 812.9H3840M2278 1043.8H3840" stroke="#595959" stroke-width="4.4" fill="none"/><path d="M2278 582.0 H3840" stroke="#ad3b4f" stroke-width="5.2"/><path d="M3117.7 0 V976" stroke="#3e74b8" stroke-width="5.2"/><rect x="2279.5" y="2.0" width="1556.5" height="972.2" rx="0" fill="url(#vig)" /><rect x="2888.0" y="354.6" width="15.0" height="452.0" rx="3" fill="#2c2c2c" fill-opacity="0.5"/><rect x="2889.2" y="355.9" width="12.6" height="449.4" rx="2.5" fill="url(#st0)" /><rect x="2889.2" y="355.9" width="12.6" height="449.4" rx="2.5" fill="url(#stx)" /><rect x="2919.3" y="354.6" width="15.0" height="452.0" rx="3" fill="#2c2c2c" fill-opacity="0.5"/><rect x="2920.5" y="355.9" width="12.6" height="449.4" rx="2.5" fill="url(#st1)" /><rect x="2920.5" y="355.9" width="12.6" height="449.4" rx="2.5" fill="url(#stx)" /><rect x="2950.7" y="354.6" width="15.0" height="452.0" rx="3" fill="#2c2c2c" fill-opacity="0.5"/><rect x="2951.9" y="355.9" width="12.6" height="449.4" rx="2.5" fill="url(#st2)" /><rect x="2951.9" y="355.9" width="12.6" height="449.4" rx="2.5" fill="url(#stx)" /><rect x="2982.0" y="354.6" width="15.0" height="452.0" rx="3" fill="#2c2c2c" fill-opacity="0.5"/><rect x="2983.2" y="355.9" width="12.6" height="449.4" rx="2.5" fill="url(#st3)" /><rect x="2983.2" y="355.9" width="12.6" height="449.4" rx="2.5" fill="url(#stx)" /><rect x="3013.3" y="354.6" width="15.0" height="452.0" rx="3" fill="#2c2c2c" fill-opacity="0.5"/><rect x="3014.5" y="355.9" width="12.6" height="449.4" rx="2.5" fill="url(#st4)" /><rect x="3014.5" y="355.9" width="12.6" height="449.4" rx="2.5" fill="url(#stx)" /><rect x="3044.7" y="354.6" width="15.0" height="452.0" rx="3" fill="#2c2c2c" fill-opacity="0.5"/><rect x="3045.8" y="355.9" width="12.6" height="449.4" rx="2.5" fill="url(#st5)" /><rect x="3045.8" y="355.9" width="12.6" height="449.4" rx="2.5" fill="url(#stx)" /><rect x="3076.0" y="354.6" width="15.0" height="452.0" rx="3" fill="#2c2c2c" fill-opacity="0.5"/><rect x="3077.2" y="355.9" width="12.6" height="449.4" rx="2.5" fill="url(#st6)" /><rect x="3077.2" y="355.9" width="12.6" height="449.4" rx="2.5" fill="url(#stx)" /><rect x="3107.3" y="354.6" width="15.0" height="452.0" rx="3" fill="#2c2c2c" fill-opacity="0.5"/><rect x="3108.5" y="355.9" width="12.6" height="449.4" rx="2.5" fill="url(#st7)" /><rect x="3108.5" y="355.9" width="12.6" height="449.4" rx="2.5" fill="url(#stx)" /><rect x="3138.6" y="354.6" width="15.0" height="452.0" rx="3" fill="#2c2c2c" fill-opacity="0.5"/><rect x="3139.8" y="355.9" width="12.6" height="449.4" rx="2.5" fill="url(#st8)" /><rect x="3139.8" y="355.9" width="12.6" height="449.4" rx="2.5" fill="url(#stx)" /><rect x="3170.0" y="354.6" width="15.0" height="452.0" rx="3" fill="#2c2c2c" fill-opacity="0.5"/><rect x="3171.2" y="355.9" width="12.6" height="449.4" rx="2.5" fill="url(#st9)" /><rect x="3171.2" y="355.9" width="12.6" height="449.4" rx="2.5" fill="url(#stx)" /><rect x="3201.3" y="354.6" width="15.0" height="452.0" rx="3" fill="#2c2c2c" fill-opacity="0.5"/><rect x="3202.5" y="355.9" width="12.6" height="449.4" rx="2.5" fill="url(#st10)" /><rect x="3202.5" y="355.9" width="12.6" height="449.4" rx="2.5" fill="url(#stx)" /><rect x="3232.6" y="354.6" width="15.0" height="452.0" rx="3" fill="#2c2c2c" fill-opacity="0.5"/><rect x="3233.8" y="355.9" width="12.6" height="449.4" rx="2.5" fill="url(#st11)" /><rect x="3233.8" y="355.9" width="12.6" height="449.4" rx="2.5" fill="url(#stx)" /><rect x="3264.0" y="354.6" width="15.0" height="452.0" rx="3" fill="#2c2c2c" fill-opacity="0.5"/><rect x="3265.2" y="355.9" width="12.6" height="449.4" rx="2.5" fill="url(#st12)" /><rect x="3265.2" y="355.9" width="12.6" height="449.4" rx="2.5" fill="url(#stx)" /><rect x="3295.3" y="354.6" width="15.0" height="452.0" rx="3" fill="#2c2c2c" fill-opacity="0.5"/><rect x="3296.5" y="355.9" width="12.6" height="449.4" rx="2.5" fill="url(#st13)" /><rect x="3296.5" y="355.9" width="12.6" height="449.4" rx="2.5" fill="url(#stx)" /><rect x="3326.6" y="354.6" width="15.0" height="452.0" rx="3" fill="#2c2c2c" fill-opacity="0.5"/><rect x="3327.8" y="355.9" width="12.6" height="449.4" rx="2.5" fill="url(#st14)" /><rect x="3327.8" y="355.9" width="12.6" height="449.4" rx="2.5" fill="url(#stx)" /><g transform="rotate(0 3117.7 581.6)"><circle cx="3117.7" cy="581.6" r="29.6" fill="none" stroke="#ffffff" stroke-width="1.9"/><circle cx="3117.7" cy="581.6" r="29.6" fill="none" stroke="#ff1a1a" stroke-width="1.9" stroke-dasharray="11.62 11.62" transform="rotate(-12 3117.7 581.6)"/><path d="M3117.7 522.0 V566.6 M3117.7 596.6 V641.2 M3057.3999999999996 581.6 H3102.7 M3132.7 581.6 H3177.2999999999997" stroke="#000" stroke-width="4.0"/></g><g transform="translate(1528 0)"><rect x="740.0" y="-10.0" width="1620.0" height="160.0" rx="0" fill="#2b2b2b" fill-opacity="0.55"/><rect x="773.0" y="10.6" width="92.4" height="56.7" rx="12" fill="#3e3e3e" /><rect x="776.0" y="13.6" width="86.4" height="50.7" rx="9" fill="#282828" /><circle cx="816.4" cy="28.4" r="9.8" fill="#e6e6e6"/><path d="M810.5 26 A6 6 0 0 1 817 21.5" fill="none" stroke="#282828" stroke-width="2.2" stroke-linecap="round"/><path d="M788.9 36.6 H805.7 M785.6 49.4 H826.3 M798.7 30.6 L792.6 58.5 M815.9 41.3 L819.2 58.5" fill="none" stroke="#dcdcdc" stroke-width="3.2"/><path d="M837.3 36.8 L846.8 46.4 L856.3 36.8" fill="none" stroke="#e6e6e6" stroke-width="3.3"/><rect x="882.0" y="10.6" width="326.0" height="56.7" rx="12" fill="#3e3e3e" /><rect x="885.0" y="13.6" width="320.0" height="50.7" rx="9" fill="#282828" /><path d="M894.9 29.2 V18.2 H905.9 M924.6999999999999 18.2 H935.6999999999999 V29.2 M935.6999999999999 48.0 V59.0 H924.6999999999999 M905.9 59.0 H894.9 V48.0" fill="none" stroke="#a8a8a8" stroke-width="3.2"/><rect x="903.8" y="27.1" width="23.0" height="23.0" rx="0" fill="#e6e6e6" /><text x="957.5" y="49.9" font-size="29.5" fill="#e6e6e6" stroke="#e6e6e6" stroke-width="0.5" text-anchor="start" font-weight="normal" textLength="188.0" lengthAdjust="spacing" >Object Mode</text><path d="M1179.7 37.2 L1189.2 46.8 L1198.7 37.2" fill="none" stroke="#e6e6e6" stroke-width="3.3"/><text x="1248.0" y="49.9" font-size="29.5" fill="#e6e6e6" stroke="#e6e6e6" stroke-width="0.5" text-anchor="start" font-weight="normal" textLength="68.0" lengthAdjust="spacing" >View</text><text x="1367.6" y="49.9" font-size="29.5" fill="#e6e6e6" stroke="#e6e6e6" stroke-width="0.5" text-anchor="start" font-weight="normal" textLength="90.0" lengthAdjust="spacing" >Select</text><text x="1507.7" y="49.9" font-size="29.5" fill="#e6e6e6" stroke="#e6e6e6" stroke-width="0.5" text-anchor="start" font-weight="normal" textLength="56.3" lengthAdjust="spacing" >Add</text><text x="1615.0" y="49.9" font-size="29.5" fill="#e6e6e6" stroke="#e6e6e6" stroke-width="0.5" text-anchor="start" font-weight="normal" textLength="95.0" lengthAdjust="spacing" >Object</text><rect x="1781.2" y="10.6" width="236.5" height="56.7" rx="12" fill="#3e3e3e" /><rect x="1784.2" y="13.6" width="230.5" height="50.7" rx="9" fill="#282828" /><path d="M1806.8 46.4 L1825 28.2 M1815.5 28.2 H1825 V37.7" fill="none" stroke="#8c8c8c" stroke-width="3"/><path d="M1801.3 45 V19.5 M1794.3 27 L1801.3 19.5 L1808.3 27" fill="none" stroke="#e6e6e6" stroke-width="3.2"/><path d="M1807.2 51.2 H1833 M1825.8 44 L1833.2 51.2 L1825.8 58.4" fill="none" stroke="#e6e6e6" stroke-width="3.2"/><circle cx="1802.1" cy="50.4" r="4.7" fill="none" stroke="#e6e6e6" stroke-width="3.2"/><text x="1856.3" y="49.9" font-size="29.5" fill="#e6e6e6" stroke="#e6e6e6" stroke-width="0.5" text-anchor="start" font-weight="normal" textLength="93.5" lengthAdjust="spacing" >Global</text><path d="M1990.0 37.3 L1999.5 46.9 L2009.0 37.3" fill="none" stroke="#e6e6e6" stroke-width="3.3"/><rect x="2035.0" y="10.6" width="92.0" height="56.7" rx="12" fill="#3e3e3e" /><rect x="2038.0" y="13.6" width="86.0" height="50.7" rx="9" fill="#282828" /><path d="M2064.5 25.5 A12 12 0 1 1 2078 43" fill="none" stroke="#e0e0e0" stroke-width="3"/><path d="M2058 33.7 A12 12 0 1 0 2072.2 46.5" fill="none" stroke="#e0e0e0" stroke-width="3"/><circle cx="2069" cy="36.8" r="4.2" fill="#e6e6e6"/><path d="M2098.9 37.3 L2108.4 46.9 L2117.9 37.3" fill="none" stroke="#e6e6e6" stroke-width="3.3"/><rect x="2144.0" y="10.6" width="152.5" height="56.7" rx="12" fill="#3e3e3e" /><path d="M2156 13.6 H2197.6 V64.3 H2156 a9 9 0 0 1 -9 -9 V22.6 a9 9 0 0 1 9 -9 Z" fill="#545454"/><path d="M2202.4 13.6 H2284.5 a9 9 0 0 1 9 9 V55.3 a9 9 0 0 1 -9 9 H2202.4 Z" fill="#282828"/><g transform="translate(2172.5 39) rotate(45)" fill="none" stroke="#9b9b9b" stroke-width="3" stroke-linejoin="round"><path d="M-16 14 V-2 A16 16 0 0 1 16 -2 V14 H7 V-2 A7 7 0 0 0 -7 -2 V14 Z"/></g><path d="M2211.4 35.8 V56.5 M2228.6 35.8 V56.5 M2246 35.8 V56.5 M2211.4 46.4 H2246" fill="none" stroke="#dcdcdc" stroke-width="3.2"/><path d="M2220.2 42 V51 M2237.4 42 V51" fill="none" stroke="#dcdcdc" stroke-width="2.6"/><rect x="2239.0" y="18.6" width="11.6" height="11.8" rx="0" fill="#e6e6e6" /><path d="M2267.0 37.3 L2276.5 46.9 L2286.0 37.3" fill="none" stroke="#e6e6e6" stroke-width="3.3"/><rect x="773.0" y="85.6" width="278.0" height="56.8" rx="12" fill="#3a3a3a" /><path d="M785.0 88.6 H826.7 V139.3 H785.0 a9 9 0 0 1 -9 -9 V97.6 a9 9 0 0 1 9 -9 Z" fill="#4772b3"/><rect x="831.4" y="88.6" width="50.7" height="50.7" rx="0" fill="#545454" /><rect x="886.8" y="88.6" width="50.7" height="50.7" rx="0" fill="#545454" /><rect x="942.3" y="88.6" width="50.7" height="50.7" rx="0" fill="#545454" /><path d="M997.6800000000001 88.6 H1039.38 a9 9 0 0 1 9 9 V130.3 a9 9 0 0 1 -9 9 H997.6800000000001 Z" fill="#545454"/><path d="M783.2 102.2 V95.2 H790.2 M813.8 95.2 H820.8 V102.2 M820.8 124.69999999999999 V131.7 H813.8 M790.2 131.7 H783.2 V124.69999999999999 M793.2 95.2 h7 M793.2 131.7 h7 M783.2 104.8 v7 M820.8 104.8 v7 M803.8 95.2 h7 M803.8 131.7 h7 M783.2 115.1 v7 M820.8 115.1 v7 " fill="none" stroke="#ffffff" stroke-width="3.4"/><rect x="849.3" y="93.5" width="28.3" height="28.2" rx="0" fill="#c9c9c9" /><rect x="837.3" y="105.7" width="28.0" height="27.7" rx="0" fill="#c9c9c9" /><path d="M905.3999999999999 93.5 H932.9 V121.7 H918.8 V108.5 H905.3999999999999 Z" fill="#c9c9c9"/><path d="M893.6 112.6 V107.6 H898.6 M893.6 117.3 v5 M893.6 127 V132 H898.6 M903.9 132 h5 M914.2 132 H919.2 V127" fill="none" stroke="#c9c9c9" stroke-width="3"/><rect x="959.9" y="93.5" width="28.3" height="28.2" rx="0" fill="#c9c9c9" /><rect x="947.9" y="105.7" width="28.0" height="27.7" rx="0" fill="#c9c9c9" /><rect x="959.9" y="105.7" width="16.0" height="16.0" rx="0" fill="#545454" /><path d="M1004.3 100.0 V95.0 H1009.3 M1037.2 95.0 H1042.2 V100.0 M1042.2 126.9 V131.9 H1037.2 M1009.3 131.9 H1004.3 V126.9 M1020.8 95.0 h5 M1020.8 131.9 h5 M1004.3 111.0 v5 M1042.2 111.0 v5 " fill="none" stroke="#c9c9c9" stroke-width="3"/><rect x="1014.8" y="105.7" width="16.5" height="16.0" rx="0" fill="#c9c9c9" /><path d="M1106.7 108.0 L1119.8 121.6 L1132.9 108.0" fill="none" stroke="#e6e6e6" stroke-width="3.4"/><polygon points="1166.6,91.3 1185.4,102.2 1185.4,124.0 1166.6,134.9 1147.8,124.0 1147.8,102.2" fill="url(#hexg)"/><rect x="1208.3" y="85.6" width="277.3" height="56.8" rx="12" fill="#3a3a3a" /><path d="M1220.3 88.6 H1262.0 V139.3 H1220.3 a9 9 0 0 1 -9 -9 V97.6 a9 9 0 0 1 9 -9 Z" fill="#4772b3"/><rect x="1266.6" y="88.6" width="50.7" height="50.7" rx="0" fill="#545454" /><rect x="1321.9" y="88.6" width="50.7" height="50.7" rx="0" fill="#545454" /><rect x="1377.1" y="88.6" width="50.7" height="50.7" rx="0" fill="#545454" /><path d="M1432.42 88.6 H1474.1200000000001 a9 9 0 0 1 9 9 V130.3 a9 9 0 0 1 -9 9 H1432.42 Z" fill="#545454"/><path d="M1216.4 104.3 V93.3 H1227.4 M1245.7 93.3 H1256.7 V104.3 M1256.7 122.6 V133.6 H1245.7 M1227.4 133.6 H1216.4 V122.6" fill="none" stroke="#c3d0e8" stroke-width="3.2"/><rect x="1224.9" y="101.7" width="23.4" height="23.4" rx="0" fill="#ffffff" /><circle cx="1292" cy="113.7" r="18.6" fill="#545454" stroke="#cfcfcf" stroke-width="3"/><path d="M1292 113.7 V95.1 A18.6 18.6 0 0 0 1273.4 113.7 Q1284 122.7 1292 122.7 Z" fill="#cfcfcf"/><path d="M1292 122.7 Q1302 121.7 1310.6 113.7 A18.6 18.6 0 0 1 1292 132.3 Z" fill="#cfcfcf"/><path d="M1340.5 94 L1328 126 Q1336 131 1345 129 L1352 112 Z" fill="#cfcfcf"/><circle cx="1360.5" cy="122" r="9.5" fill="#545454" stroke="#cfcfcf" stroke-width="3"/><path d="M1356 120.5 A5 5 0 0 1 1360.5 116.5" fill="none" stroke="#cfcfcf" stroke-width="2"/><circle cx="1361.5" cy="98.8" r="5.6" fill="#cfcfcf"/><circle cx="1402.6" cy="113.7" r="18.2" fill="none" stroke="#cfcfcf" stroke-width="3"/><path d="M1397.6 98.7 q8 -3 13 1 l3 6 l-6 5 l-7 -2 l-3 5 l-6 -3 l1 -7 Z" fill="#cfcfcf"/><path d="M1399.6 114.7 l8 -3 l9 4 l2 6 l-5 8 l-8 2 l-4 -6 l-5 -5 Z" fill="#cfcfcf"/><path d="M1385.6 108.7 l4 3 l-1 7 l-4 1 Z" fill="#cfcfcf"/><path d="M1381.6 134.7 L1390.6 125.7 M1414.6 101.7 L1423.6 92.7" stroke="#cfcfcf" stroke-width="3"/><path d="M1454.0 93.5 a3.5 3.5 0 0 1 7 0 V109 H1471.5 V131 H1449.5 l-2 -6 l-4 6 H1437.5 V124 H1443.5 V109 H1454.0 Z M1443.5 116 H1471.5" fill="none" stroke="#cfcfcf" stroke-width="3" stroke-linejoin="round"/><rect x="1489.4" y="85.7" width="594.8" height="56.1" rx="12" fill="#3a3a3a" /><rect x="1492.4" y="88.7" width="588.8" height="50.1" rx="9" fill="#1d1d1d" /><circle cx="1520.4" cy="109.5" r="9.8" fill="none" stroke="#e0e0e0" stroke-width="3"/><path d="M1513.4 117.0 L1502.4 129.5" stroke="#e0e0e0" stroke-width="3.4"/><rect x="2088.0" y="85.7" width="300.0" height="56.7" rx="12" fill="#3a3a3a" /><path d="M2100.0 88.7 H2142.0 V139.3 H2100.0 a9 9 0 0 1 -9 -9 V97.7 a9 9 0 0 1 9 -9 Z" fill="#545454"/><rect x="2146.5" y="88.7" width="55.0" height="50.6" rx="0" fill="#545454" /><rect x="2206.5" y="88.7" width="91.0" height="50.6" rx="0" fill="#282828" /><rect x="2302.1" y="88.7" width="60.0" height="50.6" rx="0" fill="#282828" /><path d="M2099.5 111 Q2116.5 137 2133.5 111" fill="none" stroke="#b4b4b4" stroke-width="2.6"/><path d="M2160.0 93.4 H2186.2 V134.2 L2173.1 123.5 L2160.0 134.2 Z" fill="#e6e6e6"/><path d="M2215.5 96.5 V126.5 H2235.5 M2215.5 105 H2235.5" fill="none" stroke="#ffffff" stroke-width="4.6"/><path d="M2235.2 97.5 h9 l2.5 2 h9 v12.6 h-20.5 Z" fill="#ffffff"/><path d="M2235.2 119.6 h9 l2.5 2 h9 v12.6 h-20.5 Z" fill="#ffffff"/><path d="M2271.8 111.5 L2281.7 121.4 L2291.6 111.5" fill="none" stroke="#e6e6e6" stroke-width="3.3"/><path d="M2306.0 90.5 H2338.5 L2326.0 106 V136 H2321.5 V108 Z" fill="#d4d4d4"/><rect x="771.8" y="175.0" width="113.5" height="205.5" rx="11" fill="#3b3b3b" fill-opacity="0.9"/><path d="M774.8 273.5 V186 a8 8 0 0 1 8 -8 H874.3 a8 8 0 0 1 8 8 V273.5 Z" fill="#4772b3"/><path d="M774.8 277.5 H882.3 V369.5 a8 8 0 0 1 -8 8 H782.8 a8 8 0 0 1 -8 -8 Z" fill="#2a2a2a"/><rect x="796.6" y="196.3" width="60.2" height="58.2" rx="3" fill="none" stroke="#f4a81d" stroke-width="4.2" stroke-dasharray="9.2 5"/><polygon points="817.7,210.4 817.7,242.0 840.8,232.0" fill="#dedede"/><polygon points="877.4,258.0 877.4,269.5 865.6,269.5" fill="#8fa3c7"/><circle cx="827" cy="326" r="31.5" fill="none" stroke="#ffffff" stroke-width="4.6"/><circle cx="827" cy="326" r="31.5" fill="none" stroke="#b84a4a" stroke-width="4.6" stroke-dasharray="12.37 12.37" transform="rotate(-101 827 326)"/><path d="M827 306 V319 M827 333 V346 M806 326 H820 M834 326 H848" stroke="#dcdcdc" stroke-width="3"/><rect x="771.8" y="397.5" width="113.5" height="413.9" rx="11" fill="#3b3b3b" fill-opacity="0.9"/><path d="M774.8 495.5 V408.5 a8 8 0 0 1 8 -8 H874.3 a8 8 0 0 1 8 8 V495.5 Z" fill="#2a2a2a"/><rect x="774.8" y="501.0" width="107.5" height="98.7" rx="0" fill="#2a2a2a" /><rect x="774.8" y="605.4" width="107.5" height="98.9" rx="0" fill="#2a2a2a" /><path d="M774.8 710 H882.3 V800.4 a8 8 0 0 1 -8 8 H782.8 a8 8 0 0 1 -8 -8 Z" fill="#2a2a2a"/><g transform="rotate(0 826.4 448.2)"><polygon points="826.4,414.59999999999997 835.1999999999999,427.2 817.6,427.2" fill="#e2e2e2"/><rect x="823.4" y="430.7" width="6" height="7.5" fill="#e2e2e2"/></g><g transform="rotate(90 826.4 448.2)"><polygon points="826.4,414.59999999999997 835.1999999999999,427.2 817.6,427.2" fill="#e2e2e2"/><rect x="823.4" y="430.7" width="6" height="7.5" fill="#e2e2e2"/></g><g transform="rotate(180 826.4 448.2)"><polygon points="826.4,414.59999999999997 835.1999999999999,427.2 817.6,427.2" fill="#e2e2e2"/><rect x="823.4" y="430.7" width="6" height="7.5" fill="#e2e2e2"/></g><g transform="rotate(270 826.4 448.2)"><polygon points="826.4,414.59999999999997 835.1999999999999,427.2 817.6,427.2" fill="#e2e2e2"/><rect x="823.4" y="430.7" width="6" height="7.5" fill="#e2e2e2"/></g><polygon points="826.4,539.8 836.9,550.3 826.4,560.8 815.9,550.3" fill="#b9b9b9"/><path d="M801.9 538.8 A27 27 0 0 1 845.9 531.8" fill="none" stroke="#e2e2e2" stroke-width="3.2"/><path d="M850.9 561.8 A27 27 0 0 1 806.9 568.8" fill="none" stroke="#e2e2e2" stroke-width="3.2"/><polygon points="792.9,545.8 808.9,545.8 800.9,560.3" fill="#e2e2e2"/><polygon points="843.9,551.8 859.9,551.8 851.9,537.8" fill="#e2e2e2"/><path d="M803.3 652 V631.5 H849.6 V677.5 H829" fill="none" stroke="#a9a9a9" stroke-width="3"/><rect x="800.4" y="653.9" width="26.6" height="26.2" rx="0" fill="#e6e6e6" /><path d="M829.6 651.2 L841 639.8" stroke="#e6e6e6" stroke-width="3.4"/><polygon points="835.2,637.2 844.8,636.2 843.8,645.6" fill="#e6e6e6"/><polygon points="877.4,688.8 877.4,700.3 865.6,700.3" fill="#8c8c8c"/><rect x="815.0" y="747.3" width="22.8" height="22.8" rx="0" fill="#e6e6e6" /><g transform="rotate(0 826.4 758.7)"><polygon points="826.4,727.3000000000001 834.0,739.2 818.8,739.2" fill="#e6e6e6"/><path d="M837.4 732.3 A28.6 28.6 0 0 1 852.8 747.7" fill="none" stroke="#e6e6e6" stroke-width="3"/></g><g transform="rotate(90 826.4 758.7)"><polygon points="826.4,727.3000000000001 834.0,739.2 818.8,739.2" fill="#e6e6e6"/><path d="M837.4 732.3 A28.6 28.6 0 0 1 852.8 747.7" fill="none" stroke="#e6e6e6" stroke-width="3"/></g><g transform="rotate(180 826.4 758.7)"><polygon points="826.4,727.3000000000001 834.0,739.2 818.8,739.2" fill="#e6e6e6"/><path d="M837.4 732.3 A28.6 28.6 0 0 1 852.8 747.7" fill="none" stroke="#e6e6e6" stroke-width="3"/></g><g transform="rotate(270 826.4 758.7)"><polygon points="826.4,727.3000000000001 834.0,739.2 818.8,739.2" fill="#e6e6e6"/><path d="M837.4 732.3 A28.6 28.6 0 0 1 852.8 747.7" fill="none" stroke="#e6e6e6" stroke-width="3"/></g><rect x="771.8" y="830.0" width="113.5" height="206.0" rx="11" fill="#3b3b3b" fill-opacity="0.9"/><path d="M774.8 928.5 V841 a8 8 0 0 1 8 -8 H874.3 a8 8 0 0 1 8 8 V928.5 Z" fill="#2a2a2a"/><path d="M774.8 933.5 H882.3 V1025 a8 8 0 0 1 -8 8 H782.8 a8 8 0 0 1 -8 -8 Z" fill="#2a2a2a"/><g transform="translate(792.4 898.2) rotate(-43)"><polygon points="0,0 11,-6.2 11,6.2" fill="#e6e6e6"/><rect x="13.5" y="-6.2" width="35.5" height="12.4" fill="#e6e6e6"/><rect x="51.5" y="-6.2" width="9" height="12.4" rx="1.5" fill="#e6e6e6"/></g><path d="M796 902.4 C806 912 822 912 832 899 C842 886 855 884 863 902.4" fill="none" stroke="#8fdcae" stroke-width="3.4"/><polygon points="877.4,913.0 877.4,924.5 865.6,924.5" fill="#8c8c8c"/><path d="M817.5 1006.2 V978.4 A27.8 27.8 0 0 1 845.3 1006.2 Z" fill="#8fdcae"/><path d="M817.5 972.2 A34 34 0 0 1 851.5 1006.2" fill="none" stroke="#8fdcae" stroke-width="3"/><rect x="801.0" y="950.6" width="16.0" height="67.4" rx="0" fill="#e6e6e6" /><rect x="801.0" y="1007.3" width="59.3" height="10.7" rx="0" fill="#e6e6e6" /><path d="M809 956 V1004" stroke="#2b2b2b" stroke-width="8" stroke-dasharray="1.6 2.4" transform="translate(4.6 0)"/><path d="M820 1009.5 H858" stroke="#2b2b2b" stroke-width="5" stroke-dasharray="1.6 2.6"/><rect x="771.8" y="1054.6" width="113.5" height="108.4" rx="11" fill="#3b3b3b" fill-opacity="0.9"/><path d="M774.8 1160 V1065.6 a8 8 0 0 1 8 -8 H874.3 a8 8 0 0 1 8 8 V1160 Z" fill="#2a2a2a"/><path d="M801 1069 V1090.5 M790.3 1079.7 H811.7" stroke="#8fdcae" stroke-width="5.4"/><path d="M806.5 1130 V1095.5 L821 1083.5 H859.5 V1118 M806.5 1095.5 H845.5 V1130 M845.5 1095.5 L859.5 1083.5" fill="none" stroke="#8fdcae" stroke-width="3"/><g style="filter:drop-shadow(0px 0px 2.5px rgba(0,0,0,0.9))"><text x="935.8" y="208.3" font-size="29.5" fill="#ffffff" stroke="#ffffff" stroke-width="0.5" text-anchor="start" font-weight="normal" textLength="280.0" lengthAdjust="spacing" >Front Orthographic</text><text x="936.4" y="260.0" font-size="29.5" fill="#ffffff" stroke="#ffffff" stroke-width="0.5" text-anchor="start" font-weight="normal" textLength="503.6" lengthAdjust="spacing" >(194) 几何节点来做array效果 | 平面</text><text x="938.0" y="309.3" font-size="29.5" fill="#ffffff" stroke="#ffffff" stroke-width="0.5" text-anchor="start" font-weight="normal" textLength="225.4" lengthAdjust="spacing" >10 Centimeters</text></g></g><path d="M3755.4 293.2 H3937.7999999999997" stroke="#d6384f" stroke-width="10.5"/><path d="M3846.6 202.0 V384.4" stroke="#2f80d8" stroke-width="10.5"/><circle cx="3755.4" cy="293.2" r="20.2" fill="#703a44" stroke="#d6384f" stroke-width="5.2"/><circle cx="3846.6" cy="202.0" r="22.8" fill="#2f80d8"/><circle cx="3846.6" cy="384.4" r="20.2" fill="#2f4a6c" stroke="#2f80d8" stroke-width="5.2"/><circle cx="3846.6" cy="293.2" r="24.6" fill="#c4f07c"/><circle cx="3846.6" cy="293.2" r="19.5" fill="#86c826"/></svg></div><div class="vp" style="left:23.5px;top:996px;width:1513.5px;height:1106.5px;border-radius:22px"><svg width="1513.5" height="1106.5" viewBox="751.5 998 1513.5 1106.5" font-family='"Liberation Sans", "Noto Sans CJK SC", sans-serif'><path d="M746.6 996V2106M783.7 996V2106M820.8 996V2106M857.9 996V2106M895.0 996V2106M932.1 996V2106M969.2 996V2106M1006.3 996V2106M1043.4 996V2106M1080.5 996V2106M1117.6 996V2106M1154.7 996V2106M1191.8 996V2106M1228.9 996V2106M1266.0 996V2106M1303.1 996V2106M1340.2 996V2106M1377.3 996V2106M1414.4 996V2106M1451.5 996V2106M1488.6 996V2106M1525.7 996V2106M1562.8 996V2106M1599.9 996V2106M1637.0 996V2106M1674.1 996V2106M1748.3 996V2106M1785.4 996V2106M1822.5 996V2106M1859.6 996V2106M1896.7 996V2106M1933.8 996V2106M1970.9 996V2106M2008.0 996V2106M2045.1 996V2106M2082.2 996V2106M2119.3 996V2106M2156.4 996V2106M2193.5 996V2106M2230.6 996V2106M2267.7 996V2106M751 989.3H2266M751 1026.4H2266M751 1063.5H2266M751 1100.6H2266M751 1137.7H2266M751 1174.8H2266M751 1211.9H2266M751 1249.0H2266M751 1286.1H2266M751 1323.2H2266M751 1360.3H2266M751 1397.4H2266M751 1434.5H2266M751 1471.6H2266M751 1508.7H2266M751 1545.8H2266M751 1582.9H2266M751 1657.1H2266M751 1694.2H2266M751 1731.3H2266M751 1768.4H2266M751 1805.5H2266M751 1842.6H2266M751 1879.7H2266M751 1916.8H2266M751 1953.9H2266M751 1991.0H2266M751 2028.1H2266M751 2065.2H2266M751 2102.3H2266M751 2139.4H2266" stroke="#4e4e4e" stroke-width="4.6" fill="none"/><path d="M751 1620.0 H2266" stroke="#6b9a27" stroke-width="5.8"/><path d="M1711.2 996 V2106" stroke="#3e74b8" stroke-width="5.2"/><rect x="751.5" y="998.0" width="1513.5" height="1106.5" rx="0" fill="url(#vig)" /><path d="M1551.5 1258.4 C1551.6 1261.0 1550.7 1268.4 1552.0 1274.1 C1553.3 1279.8 1556.1 1285.9 1559.3 1292.4 C1562.5 1299.0 1568.9 1307.3 1571.1 1313.4 C1573.3 1319.5 1572.9 1323.9 1572.4 1329.1 C1572.0 1334.4 1570.7 1339.2 1568.5 1344.9 C1566.3 1350.6 1563.0 1356.7 1559.3 1363.2 C1555.6 1369.8 1549.4 1377.7 1546.2 1384.2 C1543.1 1390.8 1541.3 1396.4 1540.5 1402.6 C1539.6 1408.7 1539.6 1414.8 1541.0 1420.9 C1542.4 1427.0 1546.0 1433.6 1548.8 1439.3 C1551.7 1445.0 1556.3 1449.8 1558.0 1455.0 C1559.8 1460.2 1559.3 1465.5 1559.3 1470.7 C1559.3 1476.0 1557.6 1481.2 1558.0 1486.5 C1558.5 1491.7 1562.4 1497.8 1562.0 1502.2 C1561.5 1506.6 1557.8 1508.8 1555.4 1512.7 C1553.0 1516.6 1549.3 1521.0 1547.5 1525.8 C1545.8 1530.6 1544.9 1535.8 1544.9 1541.5 C1544.9 1547.2 1545.6 1553.8 1547.5 1559.9 C1549.5 1566.0 1553.0 1572.1 1556.7 1578.2 C1560.4 1584.4 1566.5 1591.3 1569.8 1596.6 C1573.1 1601.9 1574.6 1605.1 1576.4 1610.0 C1578.1 1614.9 1577.5 1620.5 1580.3 1625.7 C1583.1 1631.0 1589.5 1635.3 1593.4 1641.5 C1597.3 1647.6 1601.7 1656.8 1603.9 1662.4 C1606.1 1668.1 1609.1 1670.3 1606.5 1675.5 C1603.9 1680.8 1593.2 1688.2 1588.2 1693.9 C1583.1 1699.6 1579.0 1704.4 1576.4 1709.6 C1573.8 1714.9 1572.9 1720.6 1572.4 1725.4 C1572.0 1730.2 1575.9 1734.1 1573.8 1738.5 C1571.6 1742.8 1563.9 1746.8 1559.3 1751.6 C1554.7 1756.4 1548.6 1762.5 1546.2 1767.3 C1543.8 1772.1 1544.0 1775.2 1544.9 1780.4 C1545.8 1785.7 1547.7 1792.7 1551.5 1798.8 C1555.2 1804.9 1562.0 1811.5 1567.2 1817.1 C1572.4 1822.8 1579.2 1829.4 1582.9 1832.9 C1586.6 1836.4 1589.9 1835.1 1589.5 1838.1 C1589.0 1841.2 1583.4 1846.4 1580.3 1851.2 C1577.2 1856.0 1573.8 1861.7 1571.1 1867.0 C1568.5 1872.2 1565.9 1877.9 1564.6 1882.7 C1563.3 1887.5 1565.2 1891.4 1563.3 1895.8 C1561.3 1900.2 1554.7 1904.1 1552.8 1908.9 C1550.9 1913.7 1550.9 1919.0 1552.0 1924.6 C1553.1 1930.3 1555.9 1936.9 1559.3 1943.0 C1562.7 1949.1 1568.3 1955.7 1572.4 1961.3 C1576.6 1967.0 1580.5 1973.8 1584.2 1977.1 C1588.0 1980.4 1593.0 1980.4 1594.7 1981.0 L1716.3 1981.0 Q1721.3 1981.0 1721.3 1976.0 L1721.3 1262.0 Q1721.3 1257.0 1716.3 1257.0 Z" fill="#2a2a2a" fill-opacity="0.5" stroke="#2a2a2a" stroke-opacity="0.5" stroke-width="3"/><clipPath id="v3clip"><path d="M1551.5 1258.4 C1551.6 1261.0 1550.7 1268.4 1552.0 1274.1 C1553.3 1279.8 1556.1 1285.9 1559.3 1292.4 C1562.5 1299.0 1568.9 1307.3 1571.1 1313.4 C1573.3 1319.5 1572.9 1323.9 1572.4 1329.1 C1572.0 1334.4 1570.7 1339.2 1568.5 1344.9 C1566.3 1350.6 1563.0 1356.7 1559.3 1363.2 C1555.6 1369.8 1549.4 1377.7 1546.2 1384.2 C1543.1 1390.8 1541.3 1396.4 1540.5 1402.6 C1539.6 1408.7 1539.6 1414.8 1541.0 1420.9 C1542.4 1427.0 1546.0 1433.6 1548.8 1439.3 C1551.7 1445.0 1556.3 1449.8 1558.0 1455.0 C1559.8 1460.2 1559.3 1465.5 1559.3 1470.7 C1559.3 1476.0 1557.6 1481.2 1558.0 1486.5 C1558.5 1491.7 1562.4 1497.8 1562.0 1502.2 C1561.5 1506.6 1557.8 1508.8 1555.4 1512.7 C1553.0 1516.6 1549.3 1521.0 1547.5 1525.8 C1545.8 1530.6 1544.9 1535.8 1544.9 1541.5 C1544.9 1547.2 1545.6 1553.8 1547.5 1559.9 C1549.5 1566.0 1553.0 1572.1 1556.7 1578.2 C1560.4 1584.4 1566.5 1591.3 1569.8 1596.6 C1573.1 1601.9 1574.6 1605.1 1576.4 1610.0 C1578.1 1614.9 1577.5 1620.5 1580.3 1625.7 C1583.1 1631.0 1589.5 1635.3 1593.4 1641.5 C1597.3 1647.6 1601.7 1656.8 1603.9 1662.4 C1606.1 1668.1 1609.1 1670.3 1606.5 1675.5 C1603.9 1680.8 1593.2 1688.2 1588.2 1693.9 C1583.1 1699.6 1579.0 1704.4 1576.4 1709.6 C1573.8 1714.9 1572.9 1720.6 1572.4 1725.4 C1572.0 1730.2 1575.9 1734.1 1573.8 1738.5 C1571.6 1742.8 1563.9 1746.8 1559.3 1751.6 C1554.7 1756.4 1548.6 1762.5 1546.2 1767.3 C1543.8 1772.1 1544.0 1775.2 1544.9 1780.4 C1545.8 1785.7 1547.7 1792.7 1551.5 1798.8 C1555.2 1804.9 1562.0 1811.5 1567.2 1817.1 C1572.4 1822.8 1579.2 1829.4 1582.9 1832.9 C1586.6 1836.4 1589.9 1835.1 1589.5 1838.1 C1589.0 1841.2 1583.4 1846.4 1580.3 1851.2 C1577.2 1856.0 1573.8 1861.7 1571.1 1867.0 C1568.5 1872.2 1565.9 1877.9 1564.6 1882.7 C1563.3 1887.5 1565.2 1891.4 1563.3 1895.8 C1561.3 1900.2 1554.7 1904.1 1552.8 1908.9 C1550.9 1913.7 1550.9 1919.0 1552.0 1924.6 C1553.1 1930.3 1555.9 1936.9 1559.3 1943.0 C1562.7 1949.1 1568.3 1955.7 1572.4 1961.3 C1576.6 1967.0 1580.5 1973.8 1584.2 1977.1 C1588.0 1980.4 1593.0 1980.4 1594.7 1981.0 L1716.3 1981.0 Q1721.3 1981.0 1721.3 1976.0 L1721.3 1262.0 Q1721.3 1257.0 1716.3 1257.0 Z"/></clipPath><path d="M1551.5 1258.4 C1551.6 1261.0 1550.7 1268.4 1552.0 1274.1 C1553.3 1279.8 1556.1 1285.9 1559.3 1292.4 C1562.5 1299.0 1568.9 1307.3 1571.1 1313.4 C1573.3 1319.5 1572.9 1323.9 1572.4 1329.1 C1572.0 1334.4 1570.7 1339.2 1568.5 1344.9 C1566.3 1350.6 1563.0 1356.7 1559.3 1363.2 C1555.6 1369.8 1549.4 1377.7 1546.2 1384.2 C1543.1 1390.8 1541.3 1396.4 1540.5 1402.6 C1539.6 1408.7 1539.6 1414.8 1541.0 1420.9 C1542.4 1427.0 1546.0 1433.6 1548.8 1439.3 C1551.7 1445.0 1556.3 1449.8 1558.0 1455.0 C1559.8 1460.2 1559.3 1465.5 1559.3 1470.7 C1559.3 1476.0 1557.6 1481.2 1558.0 1486.5 C1558.5 1491.7 1562.4 1497.8 1562.0 1502.2 C1561.5 1506.6 1557.8 1508.8 1555.4 1512.7 C1553.0 1516.6 1549.3 1521.0 1547.5 1525.8 C1545.8 1530.6 1544.9 1535.8 1544.9 1541.5 C1544.9 1547.2 1545.6 1553.8 1547.5 1559.9 C1549.5 1566.0 1553.0 1572.1 1556.7 1578.2 C1560.4 1584.4 1566.5 1591.3 1569.8 1596.6 C1573.1 1601.9 1574.6 1605.1 1576.4 1610.0 C1578.1 1614.9 1577.5 1620.5 1580.3 1625.7 C1583.1 1631.0 1589.5 1635.3 1593.4 1641.5 C1597.3 1647.6 1601.7 1656.8 1603.9 1662.4 C1606.1 1668.1 1609.1 1670.3 1606.5 1675.5 C1603.9 1680.8 1593.2 1688.2 1588.2 1693.9 C1583.1 1699.6 1579.0 1704.4 1576.4 1709.6 C1573.8 1714.9 1572.9 1720.6 1572.4 1725.4 C1572.0 1730.2 1575.9 1734.1 1573.8 1738.5 C1571.6 1742.8 1563.9 1746.8 1559.3 1751.6 C1554.7 1756.4 1548.6 1762.5 1546.2 1767.3 C1543.8 1772.1 1544.0 1775.2 1544.9 1780.4 C1545.8 1785.7 1547.7 1792.7 1551.5 1798.8 C1555.2 1804.9 1562.0 1811.5 1567.2 1817.1 C1572.4 1822.8 1579.2 1829.4 1582.9 1832.9 C1586.6 1836.4 1589.9 1835.1 1589.5 1838.1 C1589.0 1841.2 1583.4 1846.4 1580.3 1851.2 C1577.2 1856.0 1573.8 1861.7 1571.1 1867.0 C1568.5 1872.2 1565.9 1877.9 1564.6 1882.7 C1563.3 1887.5 1565.2 1891.4 1563.3 1895.8 C1561.3 1900.2 1554.7 1904.1 1552.8 1908.9 C1550.9 1913.7 1550.9 1919.0 1552.0 1924.6 C1553.1 1930.3 1555.9 1936.9 1559.3 1943.0 C1562.7 1949.1 1568.3 1955.7 1572.4 1961.3 C1576.6 1967.0 1580.5 1973.8 1584.2 1977.1 C1588.0 1980.4 1593.0 1980.4 1594.7 1981.0 L1716.3 1981.0 Q1721.3 1981.0 1721.3 1976.0 L1721.3 1262.0 Q1721.3 1257.0 1716.3 1257.0 Z" fill="url(#v3g)"/><g clip-path="url(#v3clip)"><g filter="url(#blur6)"><path d="M1591.0 1257.8 C1589.7 1259.7 1584.9 1264.4 1583.1 1268.8 C1581.4 1273.3 1580.3 1278.9 1580.5 1284.6 C1580.7 1290.3 1581.6 1295.9 1584.4 1302.9 C1587.3 1309.9 1592.3 1318.7 1597.5 1326.5 C1602.8 1334.4 1609.3 1342.7 1615.9 1350.1 C1622.5 1357.6 1631.6 1364.5 1636.9 1371.1 C1642.1 1377.7 1645.2 1383.3 1647.4 1389.5 C1649.6 1395.6 1650.4 1402.1 1650.0 1407.8 C1649.6 1413.5 1647.4 1418.3 1644.7 1423.5 C1642.1 1428.8 1638.6 1433.2 1634.3 1439.3 C1629.9 1445.4 1624.2 1453.3 1618.5 1460.2 C1612.8 1467.2 1606.3 1474.7 1600.2 1481.2 C1594.1 1487.8 1587.3 1494.3 1581.8 1499.6 C1576.4 1504.8 1569.8 1510.5 1567.4 1512.7" fill="none" stroke="#8c8c8c" stroke-opacity="0.5" stroke-width="26"/><path d="M1610.7 1610.0 C1614.2 1613.1 1625.5 1622.2 1631.6 1628.4 C1637.8 1634.5 1642.1 1641.0 1647.4 1646.7 C1652.6 1652.4 1657.4 1657.2 1663.1 1662.4 C1668.8 1667.7 1675.3 1672.9 1681.5 1678.2 C1687.6 1683.4 1694.6 1688.2 1699.8 1693.9 C1705.1 1699.6 1710.1 1706.6 1712.9 1712.3 C1715.8 1717.9 1716.9 1722.3 1716.9 1728.0 C1716.9 1733.7 1715.8 1740.2 1712.9 1746.3 C1710.1 1752.5 1705.1 1757.7 1699.8 1764.7 C1694.6 1771.7 1687.6 1780.4 1681.5 1788.3 C1675.3 1796.2 1668.8 1803.6 1663.1 1811.9 C1657.4 1820.2 1652.0 1828.9 1647.4 1838.1 C1642.8 1847.3 1638.8 1857.8 1635.6 1867.0 C1632.3 1876.1 1629.5 1885.7 1627.7 1893.2 C1626.0 1900.6 1624.6 1905.0 1625.1 1911.5 C1625.5 1918.1 1627.9 1926.0 1630.3 1932.5 C1632.7 1939.1 1636.9 1946.5 1639.5 1950.9 C1642.1 1955.2 1645.0 1957.4 1646.1 1958.7" fill="none" stroke="#8c8c8c" stroke-opacity="0.5" stroke-width="26"/><path d="M1613.5 1355.4 C1612.7 1358.0 1609.6 1365.0 1608.3 1371.1 C1607.0 1377.2 1606.1 1385.1 1605.7 1392.1 C1605.2 1399.1 1606.1 1406.1 1605.7 1413.1 C1605.2 1420.0 1604.3 1427.9 1603.0 1434.0 C1601.7 1440.1 1600.0 1444.1 1597.8 1449.8 C1595.6 1455.4 1593.0 1462.0 1589.9 1468.1 C1586.9 1474.2 1582.7 1480.8 1579.4 1486.5 C1576.2 1492.1 1571.8 1499.6 1570.3 1502.2" fill="none" stroke="#8c8c8c" stroke-opacity="0.35" stroke-width="14"/><path d="M1600.4 1612.6 C1601.3 1617.4 1603.5 1632.3 1605.7 1641.5 C1607.8 1650.6 1609.2 1658.9 1613.5 1667.7 C1617.9 1676.4 1625.8 1685.2 1631.9 1693.9 C1638.0 1702.6 1645.0 1711.4 1650.2 1720.1 C1655.5 1728.9 1660.1 1737.6 1663.3 1746.3 C1666.6 1755.1 1668.8 1763.8 1669.9 1772.6 C1671.0 1781.3 1669.9 1794.4 1669.9 1798.8" fill="none" stroke="#8c8c8c" stroke-opacity="0.35" stroke-width="14"/><path d="M1638.4 1712.3 C1636.2 1716.6 1628.6 1729.3 1625.3 1738.5 C1622.0 1747.7 1620.1 1758.1 1618.8 1767.3 C1617.5 1776.5 1618.3 1786.5 1617.5 1793.5 C1616.6 1800.5 1616.4 1802.7 1613.5 1809.3 C1610.7 1815.8 1605.0 1824.6 1600.4 1832.9 C1595.8 1841.2 1589.7 1850.8 1586.0 1859.1 C1582.3 1867.4 1579.2 1875.3 1578.1 1882.7 C1577.0 1890.1 1577.0 1895.8 1579.4 1903.7 C1581.8 1911.5 1587.7 1920.7 1592.5 1929.9 C1597.4 1939.1 1603.9 1950.4 1608.3 1958.7 C1612.7 1967.0 1617.0 1976.2 1618.8 1979.7" fill="none" stroke="#8c8c8c" stroke-opacity="0.35" stroke-width="14"/><path d="M1561.5 1258.4 C1561.6 1261.0 1560.7 1268.4 1562.0 1274.1 C1563.3 1279.8 1566.1 1285.9 1569.3 1292.4 C1572.5 1299.0 1578.9 1307.3 1581.1 1313.4 C1583.3 1319.5 1582.9 1323.9 1582.4 1329.1 C1582.0 1334.4 1580.7 1339.2 1578.5 1344.9 C1576.3 1350.6 1573.0 1356.7 1569.3 1363.2 C1565.6 1369.8 1559.4 1377.7 1556.2 1384.2 C1553.1 1390.8 1551.3 1396.4 1550.5 1402.6 C1549.6 1408.7 1549.6 1414.8 1551.0 1420.9 C1552.4 1427.0 1556.0 1433.6 1558.8 1439.3 C1561.7 1445.0 1566.3 1449.8 1568.0 1455.0 C1569.8 1460.2 1569.3 1465.5 1569.3 1470.7 C1569.3 1476.0 1567.6 1481.2 1568.0 1486.5 C1568.5 1491.7 1572.4 1497.8 1572.0 1502.2 C1571.5 1506.6 1567.8 1508.8 1565.4 1512.7 C1563.0 1516.6 1559.3 1521.0 1557.5 1525.8 C1555.8 1530.6 1554.9 1535.8 1554.9 1541.5 C1554.9 1547.2 1555.6 1553.8 1557.5 1559.9 C1559.5 1566.0 1563.0 1572.1 1566.7 1578.2 C1570.4 1584.4 1576.5 1591.3 1579.8 1596.6 C1583.1 1601.9 1584.6 1605.1 1586.4 1610.0 C1588.1 1614.9 1587.5 1620.5 1590.3 1625.7 C1593.1 1631.0 1599.5 1635.3 1603.4 1641.5 C1607.3 1647.6 1611.7 1656.8 1613.9 1662.4 C1616.1 1668.1 1619.1 1670.3 1616.5 1675.5 C1613.9 1680.8 1603.2 1688.2 1598.2 1693.9 C1593.1 1699.6 1589.0 1704.4 1586.4 1709.6 C1583.8 1714.9 1582.9 1720.6 1582.4 1725.4 C1582.0 1730.2 1585.9 1734.1 1583.8 1738.5 C1581.6 1742.8 1573.9 1746.8 1569.3 1751.6 C1564.7 1756.4 1558.6 1762.5 1556.2 1767.3 C1553.8 1772.1 1554.0 1775.2 1554.9 1780.4 C1555.8 1785.7 1557.7 1792.7 1561.5 1798.8 C1565.2 1804.9 1572.0 1811.5 1577.2 1817.1 C1582.4 1822.8 1589.2 1829.4 1592.9 1832.9 C1596.6 1836.4 1599.9 1835.1 1599.5 1838.1 C1599.0 1841.2 1593.4 1846.4 1590.3 1851.2 C1587.2 1856.0 1583.8 1861.7 1581.1 1867.0 C1578.5 1872.2 1575.9 1877.9 1574.6 1882.7 C1573.3 1887.5 1575.2 1891.4 1573.3 1895.8 C1571.3 1900.2 1564.7 1904.1 1562.8 1908.9 C1560.9 1913.7 1560.9 1919.0 1562.0 1924.6 C1563.1 1930.3 1565.9 1936.9 1569.3 1943.0 C1572.7 1949.1 1578.3 1955.7 1582.4 1961.3 C1586.6 1967.0 1590.5 1973.8 1594.2 1977.1 C1598.0 1980.4 1603.0 1980.4 1604.7 1981.0" fill="none" stroke="#c2c2c2" stroke-opacity="0.55" stroke-width="16"/></g><path d="M1579.0 1257.8 C1577.7 1259.7 1572.9 1264.4 1571.1 1268.8 C1569.4 1273.3 1568.3 1278.9 1568.5 1284.6 C1568.7 1290.3 1569.6 1295.9 1572.4 1302.9 C1575.3 1309.9 1580.3 1318.7 1585.5 1326.5 C1590.8 1334.4 1597.3 1342.7 1603.9 1350.1 C1610.5 1357.6 1619.6 1364.5 1624.9 1371.1 C1630.1 1377.7 1633.2 1383.3 1635.4 1389.5 C1637.6 1395.6 1638.4 1402.1 1638.0 1407.8 C1637.6 1413.5 1635.4 1418.3 1632.7 1423.5 C1630.1 1428.8 1626.6 1433.2 1622.3 1439.3 C1617.9 1445.4 1612.2 1453.3 1606.5 1460.2 C1600.8 1467.2 1594.3 1474.7 1588.2 1481.2 C1582.1 1487.8 1575.3 1494.3 1569.8 1499.6 C1564.4 1504.8 1557.8 1510.5 1555.4 1512.7" fill="none" stroke="#4e4e4e" stroke-width="3.2" stroke-opacity="0.95" filter="url(#blur1)"/><path d="M1606.5 1355.4 C1605.7 1358.0 1602.6 1365.0 1601.3 1371.1 C1600.0 1377.2 1599.1 1385.1 1598.7 1392.1 C1598.2 1399.1 1599.1 1406.1 1598.7 1413.1 C1598.2 1420.0 1597.3 1427.9 1596.0 1434.0 C1594.7 1440.1 1593.0 1444.1 1590.8 1449.8 C1588.6 1455.4 1586.0 1462.0 1582.9 1468.1 C1579.9 1474.2 1575.7 1480.8 1572.4 1486.5 C1569.2 1492.1 1564.8 1499.6 1563.3 1502.2" fill="none" stroke="#4e4e4e" stroke-width="3.2" stroke-opacity="0.95" filter="url(#blur1)"/><path d="M1598.7 1386.8 C1596.5 1389.5 1589.5 1396.9 1585.5 1402.6 C1581.6 1408.2 1578.3 1414.8 1575.1 1420.9 C1571.8 1427.0 1568.5 1433.6 1565.9 1439.3 C1563.3 1445.0 1560.4 1452.4 1559.3 1455.0" fill="none" stroke="#4e4e4e" stroke-width="3.2" stroke-opacity="0.95" filter="url(#blur1)"/><path d="M1598.7 1610.0 C1602.2 1613.1 1613.5 1622.2 1619.6 1628.4 C1625.8 1634.5 1630.1 1641.0 1635.4 1646.7 C1640.6 1652.4 1645.4 1657.2 1651.1 1662.4 C1656.8 1667.7 1663.3 1672.9 1669.5 1678.2 C1675.6 1683.4 1682.6 1688.2 1687.8 1693.9 C1693.1 1699.6 1698.1 1706.6 1700.9 1712.3 C1703.8 1717.9 1704.9 1722.3 1704.9 1728.0 C1704.9 1733.7 1703.8 1740.2 1700.9 1746.3 C1698.1 1752.5 1693.1 1757.7 1687.8 1764.7 C1682.6 1771.7 1675.6 1780.4 1669.5 1788.3 C1663.3 1796.2 1656.8 1803.6 1651.1 1811.9 C1645.4 1820.2 1640.0 1828.9 1635.4 1838.1 C1630.8 1847.3 1626.8 1857.8 1623.6 1867.0 C1620.3 1876.1 1617.5 1885.7 1615.7 1893.2 C1614.0 1900.6 1612.6 1905.0 1613.1 1911.5 C1613.5 1918.1 1615.9 1926.0 1618.3 1932.5 C1620.7 1939.1 1624.9 1946.5 1627.5 1950.9 C1630.1 1955.2 1633.0 1957.4 1634.1 1958.7" fill="none" stroke="#4e4e4e" stroke-width="3.2" stroke-opacity="0.95" filter="url(#blur1)"/><path d="M1593.4 1612.6 C1594.3 1617.4 1596.5 1632.3 1598.7 1641.5 C1600.8 1650.6 1602.2 1658.9 1606.5 1667.7 C1610.9 1676.4 1618.8 1685.2 1624.9 1693.9 C1631.0 1702.6 1638.0 1711.4 1643.2 1720.1 C1648.5 1728.9 1653.1 1737.6 1656.3 1746.3 C1659.6 1755.1 1661.8 1763.8 1662.9 1772.6 C1664.0 1781.3 1662.9 1794.4 1662.9 1798.8" fill="none" stroke="#4e4e4e" stroke-width="3.2" stroke-opacity="0.95" filter="url(#blur1)"/><path d="M1610.5 1675.5 C1609.8 1679.9 1608.5 1693.0 1606.5 1701.8 C1604.6 1710.5 1600.2 1718.8 1598.7 1728.0 C1597.1 1737.2 1596.9 1748.5 1597.3 1756.8 C1597.8 1765.1 1599.3 1771.7 1601.3 1777.8 C1603.2 1783.9 1607.8 1790.9 1609.1 1793.5" fill="none" stroke="#4e4e4e" stroke-width="3.2" stroke-opacity="0.95" filter="url(#blur1)"/><path d="M1631.4 1712.3 C1629.2 1716.6 1621.6 1729.3 1618.3 1738.5 C1615.0 1747.7 1613.1 1758.1 1611.8 1767.3 C1610.5 1776.5 1611.3 1786.5 1610.5 1793.5 C1609.6 1800.5 1609.4 1802.7 1606.5 1809.3 C1603.7 1815.8 1598.0 1824.6 1593.4 1832.9 C1588.8 1841.2 1582.7 1850.8 1579.0 1859.1 C1575.3 1867.4 1572.2 1875.3 1571.1 1882.7 C1570.0 1890.1 1570.0 1895.8 1572.4 1903.7 C1574.8 1911.5 1580.7 1920.7 1585.5 1929.9 C1590.4 1939.1 1596.9 1950.4 1601.3 1958.7 C1605.7 1967.0 1610.0 1976.2 1611.8 1979.7" fill="none" stroke="#4e4e4e" stroke-width="3.2" stroke-opacity="0.95" filter="url(#blur1)"/><path d="M1617.0 1688.7 C1617.2 1693.0 1618.2 1706.8 1618.3 1714.9 C1618.4 1723.0 1617.7 1733.5 1617.5 1737.2" fill="none" stroke="#4e4e4e" stroke-width="3.2" stroke-opacity="0.95" filter="url(#blur1)"/><path d="M1569.8 1869.6 C1569.2 1872.2 1565.9 1880.1 1565.9 1885.3 C1565.9 1890.6 1567.4 1894.5 1569.8 1901.0 C1572.2 1907.6 1578.6 1920.7 1580.3 1924.6" fill="none" stroke="#4e4e4e" stroke-width="3.2" stroke-opacity="0.95" filter="url(#blur1)"/><path d="M1623.6 1872.2 C1623.8 1876.6 1623.8 1889.7 1624.9 1898.4 C1626.0 1907.2 1628.6 1915.9 1630.1 1924.6 C1631.7 1933.4 1633.2 1941.7 1634.1 1950.9 C1634.9 1960.0 1635.1 1974.9 1635.4 1979.7" fill="none" stroke="#4e4e4e" stroke-width="3.2" stroke-opacity="0.95" filter="url(#blur1)"/><path d="M1609.1 1805.3 C1607.4 1809.1 1603.0 1819.5 1598.7 1827.6 C1594.3 1835.7 1587.1 1845.5 1582.9 1853.8 C1578.8 1862.1 1575.3 1873.5 1573.8 1877.4" fill="none" stroke="#4e4e4e" stroke-width="3.2" stroke-opacity="0.95" filter="url(#blur1)"/></g><path d="M1718.3 1260.0 V1978.0" stroke="#c6c6c6" stroke-width="4.5" stroke-opacity="0.8"/><g transform="rotate(0 1711.2 1620)"><circle cx="1711.2" cy="1620" r="29.6" fill="none" stroke="#ffffff" stroke-width="1.9"/><circle cx="1711.2" cy="1620" r="29.6" fill="none" stroke="#ff1a1a" stroke-width="1.9" stroke-dasharray="11.62 11.62" transform="rotate(-12 1711.2 1620)"/><path d="M1711.2 1560.4 V1605 M1711.2 1635 V1679.6 M1650.9 1620 H1696.2 M1726.2 1620 H1770.8" stroke="#000" stroke-width="4.3"/></g><g transform="translate(0 996)"><rect x="740.0" y="-10.0" width="1620.0" height="160.0" rx="0" fill="#2b2b2b" fill-opacity="0.55"/><rect x="773.0" y="10.6" width="92.4" height="56.7" rx="12" fill="#3e3e3e" /><rect x="776.0" y="13.6" width="86.4" height="50.7" rx="9" fill="#282828" /><circle cx="816.4" cy="28.4" r="9.8" fill="#e6e6e6"/><path d="M810.5 26 A6 6 0 0 1 817 21.5" fill="none" stroke="#282828" stroke-width="2.2" stroke-linecap="round"/><path d="M788.9 36.6 H805.7 M785.6 49.4 H826.3 M798.7 30.6 L792.6 58.5 M815.9 41.3 L819.2 58.5" fill="none" stroke="#dcdcdc" stroke-width="3.2"/><path d="M837.3 36.8 L846.8 46.4 L856.3 36.8" fill="none" stroke="#e6e6e6" stroke-width="3.3"/><rect x="882.0" y="10.6" width="326.0" height="56.7" rx="12" fill="#3e3e3e" /><rect x="885.0" y="13.6" width="320.0" height="50.7" rx="9" fill="#282828" /><path d="M894.9 29.2 V18.2 H905.9 M924.6999999999999 18.2 H935.6999999999999 V29.2 M935.6999999999999 48.0 V59.0 H924.6999999999999 M905.9 59.0 H894.9 V48.0" fill="none" stroke="#a8a8a8" stroke-width="3.2"/><rect x="903.8" y="27.1" width="23.0" height="23.0" rx="0" fill="#e6e6e6" /><text x="957.5" y="49.9" font-size="29.5" fill="#e6e6e6" stroke="#e6e6e6" stroke-width="0.5" text-anchor="start" font-weight="normal" textLength="188.0" lengthAdjust="spacing" >Object Mode</text><path d="M1179.7 37.2 L1189.2 46.8 L1198.7 37.2" fill="none" stroke="#e6e6e6" stroke-width="3.3"/><text x="1248.0" y="49.9" font-size="29.5" fill="#e6e6e6" stroke="#e6e6e6" stroke-width="0.5" text-anchor="start" font-weight="normal" textLength="68.0" lengthAdjust="spacing" >View</text><text x="1367.6" y="49.9" font-size="29.5" fill="#e6e6e6" stroke="#e6e6e6" stroke-width="0.5" text-anchor="start" font-weight="normal" textLength="90.0" lengthAdjust="spacing" >Select</text><text x="1507.7" y="49.9" font-size="29.5" fill="#e6e6e6" stroke="#e6e6e6" stroke-width="0.5" text-anchor="start" font-weight="normal" textLength="56.3" lengthAdjust="spacing" >Add</text><text x="1615.0" y="49.9" font-size="29.5" fill="#e6e6e6" stroke="#e6e6e6" stroke-width="0.5" text-anchor="start" font-weight="normal" textLength="95.0" lengthAdjust="spacing" >Object</text><rect x="1781.2" y="10.6" width="236.5" height="56.7" rx="12" fill="#3e3e3e" /><rect x="1784.2" y="13.6" width="230.5" height="50.7" rx="9" fill="#282828" /><path d="M1806.8 46.4 L1825 28.2 M1815.5 28.2 H1825 V37.7" fill="none" stroke="#8c8c8c" stroke-width="3"/><path d="M1801.3 45 V19.5 M1794.3 27 L1801.3 19.5 L1808.3 27" fill="none" stroke="#e6e6e6" stroke-width="3.2"/><path d="M1807.2 51.2 H1833 M1825.8 44 L1833.2 51.2 L1825.8 58.4" fill="none" stroke="#e6e6e6" stroke-width="3.2"/><circle cx="1802.1" cy="50.4" r="4.7" fill="none" stroke="#e6e6e6" stroke-width="3.2"/><text x="1856.3" y="49.9" font-size="29.5" fill="#e6e6e6" stroke="#e6e6e6" stroke-width="0.5" text-anchor="start" font-weight="normal" textLength="93.5" lengthAdjust="spacing" >Global</text><path d="M1990.0 37.3 L1999.5 46.9 L2009.0 37.3" fill="none" stroke="#e6e6e6" stroke-width="3.3"/><rect x="2035.0" y="10.6" width="92.0" height="56.7" rx="12" fill="#3e3e3e" /><rect x="2038.0" y="13.6" width="86.0" height="50.7" rx="9" fill="#282828" /><path d="M2064.5 25.5 A12 12 0 1 1 2078 43" fill="none" stroke="#e0e0e0" stroke-width="3"/><path d="M2058 33.7 A12 12 0 1 0 2072.2 46.5" fill="none" stroke="#e0e0e0" stroke-width="3"/><circle cx="2069" cy="36.8" r="4.2" fill="#e6e6e6"/><path d="M2098.9 37.3 L2108.4 46.9 L2117.9 37.3" fill="none" stroke="#e6e6e6" stroke-width="3.3"/><rect x="2144.0" y="10.6" width="159.0" height="56.7" rx="12" fill="#3e3e3e" /><path d="M2156 13.6 H2197.6 V64.3 H2156 a9 9 0 0 1 -9 -9 V22.6 a9 9 0 0 1 9 -9 Z" fill="#545454"/><path d="M2202.4 13.6 H2291 a9 9 0 0 1 9 9 V55.3 a9 9 0 0 1 -9 9 H2202.4 Z" fill="#282828"/><g transform="translate(2172.5 39) rotate(45)" fill="none" stroke="#9b9b9b" stroke-width="3" stroke-linejoin="round"><path d="M-16 14 V-2 A16 16 0 0 1 16 -2 V14 H7 V-2 A7 7 0 0 0 -7 -2 V14 Z"/></g><path d="M2211.4 35.8 V56.5 M2228.6 35.8 V56.5 M2246 35.8 V56.5 M2211.4 46.4 H2246" fill="none" stroke="#dcdcdc" stroke-width="3.2"/><path d="M2220.2 42 V51 M2237.4 42 V51" fill="none" stroke="#dcdcdc" stroke-width="2.6"/><rect x="2239.0" y="18.6" width="11.6" height="11.8" rx="0" fill="#e6e6e6" /><rect x="773.0" y="85.6" width="278.0" height="56.8" rx="12" fill="#3a3a3a" /><path d="M785.0 88.6 H826.7 V139.3 H785.0 a9 9 0 0 1 -9 -9 V97.6 a9 9 0 0 1 9 -9 Z" fill="#4772b3"/><rect x="831.4" y="88.6" width="50.7" height="50.7" rx="0" fill="#545454" /><rect x="886.8" y="88.6" width="50.7" height="50.7" rx="0" fill="#545454" /><rect x="942.3" y="88.6" width="50.7" height="50.7" rx="0" fill="#545454" /><path d="M997.6800000000001 88.6 H1039.38 a9 9 0 0 1 9 9 V130.3 a9 9 0 0 1 -9 9 H997.6800000000001 Z" fill="#545454"/><path d="M783.2 102.2 V95.2 H790.2 M813.8 95.2 H820.8 V102.2 M820.8 124.69999999999999 V131.7 H813.8 M790.2 131.7 H783.2 V124.69999999999999 M793.2 95.2 h7 M793.2 131.7 h7 M783.2 104.8 v7 M820.8 104.8 v7 M803.8 95.2 h7 M803.8 131.7 h7 M783.2 115.1 v7 M820.8 115.1 v7 " fill="none" stroke="#ffffff" stroke-width="3.4"/><rect x="849.3" y="93.5" width="28.3" height="28.2" rx="0" fill="#c9c9c9" /><rect x="837.3" y="105.7" width="28.0" height="27.7" rx="0" fill="#c9c9c9" /><path d="M905.3999999999999 93.5 H932.9 V121.7 H918.8 V108.5 H905.3999999999999 Z" fill="#c9c9c9"/><path d="M893.6 112.6 V107.6 H898.6 M893.6 117.3 v5 M893.6 127 V132 H898.6 M903.9 132 h5 M914.2 132 H919.2 V127" fill="none" stroke="#c9c9c9" stroke-width="3"/><rect x="959.9" y="93.5" width="28.3" height="28.2" rx="0" fill="#c9c9c9" /><rect x="947.9" y="105.7" width="28.0" height="27.7" rx="0" fill="#c9c9c9" /><rect x="959.9" y="105.7" width="16.0" height="16.0" rx="0" fill="#545454" /><path d="M1004.3 100.0 V95.0 H1009.3 M1037.2 95.0 H1042.2 V100.0 M1042.2 126.9 V131.9 H1037.2 M1009.3 131.9 H1004.3 V126.9 M1020.8 95.0 h5 M1020.8 131.9 h5 M1004.3 111.0 v5 M1042.2 111.0 v5 " fill="none" stroke="#c9c9c9" stroke-width="3"/><rect x="1014.8" y="105.7" width="16.5" height="16.0" rx="0" fill="#c9c9c9" /><path d="M1106.7 108.0 L1119.8 121.6 L1132.9 108.0" fill="none" stroke="#e6e6e6" stroke-width="3.4"/><polygon points="1166.6,91.3 1185.4,102.2 1185.4,124.0 1166.6,134.9 1147.8,124.0 1147.8,102.2" fill="url(#hexg)"/><rect x="1208.3" y="85.6" width="277.3" height="56.8" rx="12" fill="#3a3a3a" /><path d="M1220.3 88.6 H1262.0 V139.3 H1220.3 a9 9 0 0 1 -9 -9 V97.6 a9 9 0 0 1 9 -9 Z" fill="#4772b3"/><rect x="1266.6" y="88.6" width="50.7" height="50.7" rx="0" fill="#545454" /><rect x="1321.9" y="88.6" width="50.7" height="50.7" rx="0" fill="#545454" /><rect x="1377.1" y="88.6" width="50.7" height="50.7" rx="0" fill="#545454" /><path d="M1432.42 88.6 H1474.1200000000001 a9 9 0 0 1 9 9 V130.3 a9 9 0 0 1 -9 9 H1432.42 Z" fill="#545454"/><path d="M1216.4 104.3 V93.3 H1227.4 M1245.7 93.3 H1256.7 V104.3 M1256.7 122.6 V133.6 H1245.7 M1227.4 133.6 H1216.4 V122.6" fill="none" stroke="#c3d0e8" stroke-width="3.2"/><rect x="1224.9" y="101.7" width="23.4" height="23.4" rx="0" fill="#ffffff" /><circle cx="1292" cy="113.7" r="18.6" fill="#545454" stroke="#cfcfcf" stroke-width="3"/><path d="M1292 113.7 V95.1 A18.6 18.6 0 0 0 1273.4 113.7 Q1284 122.7 1292 122.7 Z" fill="#cfcfcf"/><path d="M1292 122.7 Q1302 121.7 1310.6 113.7 A18.6 18.6 0 0 1 1292 132.3 Z" fill="#cfcfcf"/><path d="M1340.5 94 L1328 126 Q1336 131 1345 129 L1352 112 Z" fill="#cfcfcf"/><circle cx="1360.5" cy="122" r="9.5" fill="#545454" stroke="#cfcfcf" stroke-width="3"/><path d="M1356 120.5 A5 5 0 0 1 1360.5 116.5" fill="none" stroke="#cfcfcf" stroke-width="2"/><circle cx="1361.5" cy="98.8" r="5.6" fill="#cfcfcf"/><circle cx="1402.6" cy="113.7" r="18.2" fill="none" stroke="#cfcfcf" stroke-width="3"/><path d="M1397.6 98.7 q8 -3 13 1 l3 6 l-6 5 l-7 -2 l-3 5 l-6 -3 l1 -7 Z" fill="#cfcfcf"/><path d="M1399.6 114.7 l8 -3 l9 4 l2 6 l-5 8 l-8 2 l-4 -6 l-5 -5 Z" fill="#cfcfcf"/><path d="M1385.6 108.7 l4 3 l-1 7 l-4 1 Z" fill="#cfcfcf"/><path d="M1381.6 134.7 L1390.6 125.7 M1414.6 101.7 L1423.6 92.7" stroke="#cfcfcf" stroke-width="3"/><path d="M1454.0 93.5 a3.5 3.5 0 0 1 7 0 V109 H1471.5 V131 H1449.5 l-2 -6 l-4 6 H1437.5 V124 H1443.5 V109 H1454.0 Z M1443.5 116 H1471.5" fill="none" stroke="#cfcfcf" stroke-width="3" stroke-linejoin="round"/><rect x="1489.4" y="85.7" width="535.3" height="56.1" rx="12" fill="#3a3a3a" /><rect x="1492.4" y="88.7" width="529.3" height="50.1" rx="9" fill="#1d1d1d" /><circle cx="1520.4" cy="109.5" r="9.8" fill="none" stroke="#e0e0e0" stroke-width="3"/><path d="M1513.4 117.0 L1502.4 129.5" stroke="#e0e0e0" stroke-width="3.4"/><rect x="2028.5" y="85.7" width="300.0" height="56.7" rx="12" fill="#3a3a3a" /><path d="M2040.5 88.7 H2082.5 V139.3 H2040.5 a9 9 0 0 1 -9 -9 V97.7 a9 9 0 0 1 9 -9 Z" fill="#545454"/><rect x="2087.0" y="88.7" width="55.0" height="50.6" rx="0" fill="#545454" /><rect x="2147.0" y="88.7" width="91.0" height="50.6" rx="0" fill="#282828" /><rect x="2242.6" y="88.7" width="60.0" height="50.6" rx="0" fill="#282828" /><path d="M2040 111 Q2057 137 2074 111" fill="none" stroke="#b4b4b4" stroke-width="2.6"/><path d="M2100.5 93.4 H2126.7 V134.2 L2113.6 123.5 L2100.5 134.2 Z" fill="#e6e6e6"/><path d="M2156 96.5 V126.5 H2176 M2156 105 H2176" fill="none" stroke="#ffffff" stroke-width="4.6"/><path d="M2175.7 97.5 h9 l2.5 2 h9 v12.6 h-20.5 Z" fill="#ffffff"/><path d="M2175.7 119.6 h9 l2.5 2 h9 v12.6 h-20.5 Z" fill="#ffffff"/><path d="M2212.3 111.5 L2222.2 121.4 L2232.1 111.5" fill="none" stroke="#e6e6e6" stroke-width="3.3"/><path d="M2246.5 90.5 H2279 L2266.5 106 V136 H2262 V108 Z" fill="#d4d4d4"/><rect x="771.8" y="175.0" width="113.5" height="205.5" rx="11" fill="#3b3b3b" fill-opacity="0.9"/><path d="M774.8 273.5 V186 a8 8 0 0 1 8 -8 H874.3 a8 8 0 0 1 8 8 V273.5 Z" fill="#4772b3"/><path d="M774.8 277.5 H882.3 V369.5 a8 8 0 0 1 -8 8 H782.8 a8 8 0 0 1 -8 -8 Z" fill="#2a2a2a"/><rect x="796.6" y="196.3" width="60.2" height="58.2" rx="3" fill="none" stroke="#f4a81d" stroke-width="4.2" stroke-dasharray="9.2 5"/><polygon points="817.7,210.4 817.7,242.0 840.8,232.0" fill="#dedede"/><polygon points="877.4,258.0 877.4,269.5 865.6,269.5" fill="#8fa3c7"/><circle cx="827" cy="326" r="31.5" fill="none" stroke="#ffffff" stroke-width="4.6"/><circle cx="827" cy="326" r="31.5" fill="none" stroke="#b84a4a" stroke-width="4.6" stroke-dasharray="12.37 12.37" transform="rotate(-101 827 326)"/><path d="M827 306 V319 M827 333 V346 M806 326 H820 M834 326 H848" stroke="#dcdcdc" stroke-width="3"/><rect x="771.8" y="397.5" width="113.5" height="413.9" rx="11" fill="#3b3b3b" fill-opacity="0.9"/><path d="M774.8 495.5 V408.5 a8 8 0 0 1 8 -8 H874.3 a8 8 0 0 1 8 8 V495.5 Z" fill="#2a2a2a"/><rect x="774.8" y="501.0" width="107.5" height="98.7" rx="0" fill="#2a2a2a" /><rect x="774.8" y="605.4" width="107.5" height="98.9" rx="0" fill="#2a2a2a" /><path d="M774.8 710 H882.3 V800.4 a8 8 0 0 1 -8 8 H782.8 a8 8 0 0 1 -8 -8 Z" fill="#2a2a2a"/><g transform="rotate(0 826.4 448.2)"><polygon points="826.4,414.59999999999997 835.1999999999999,427.2 817.6,427.2" fill="#e2e2e2"/><rect x="823.4" y="430.7" width="6" height="7.5" fill="#e2e2e2"/></g><g transform="rotate(90 826.4 448.2)"><polygon points="826.4,414.59999999999997 835.1999999999999,427.2 817.6,427.2" fill="#e2e2e2"/><rect x="823.4" y="430.7" width="6" height="7.5" fill="#e2e2e2"/></g><g transform="rotate(180 826.4 448.2)"><polygon points="826.4,414.59999999999997 835.1999999999999,427.2 817.6,427.2" fill="#e2e2e2"/><rect x="823.4" y="430.7" width="6" height="7.5" fill="#e2e2e2"/></g><g transform="rotate(270 826.4 448.2)"><polygon points="826.4,414.59999999999997 835.1999999999999,427.2 817.6,427.2" fill="#e2e2e2"/><rect x="823.4" y="430.7" width="6" height="7.5" fill="#e2e2e2"/></g><polygon points="826.4,539.8 836.9,550.3 826.4,560.8 815.9,550.3" fill="#b9b9b9"/><path d="M801.9 538.8 A27 27 0 0 1 845.9 531.8" fill="none" stroke="#e2e2e2" stroke-width="3.2"/><path d="M850.9 561.8 A27 27 0 0 1 806.9 568.8" fill="none" stroke="#e2e2e2" stroke-width="3.2"/><polygon points="792.9,545.8 808.9,545.8 800.9,560.3" fill="#e2e2e2"/><polygon points="843.9,551.8 859.9,551.8 851.9,537.8" fill="#e2e2e2"/><path d="M803.3 652 V631.5 H849.6 V677.5 H829" fill="none" stroke="#a9a9a9" stroke-width="3"/><rect x="800.4" y="653.9" width="26.6" height="26.2" rx="0" fill="#e6e6e6" /><path d="M829.6 651.2 L841 639.8" stroke="#e6e6e6" stroke-width="3.4"/><polygon points="835.2,637.2 844.8,636.2 843.8,645.6" fill="#e6e6e6"/><polygon points="877.4,688.8 877.4,700.3 865.6,700.3" fill="#8c8c8c"/><rect x="815.0" y="747.3" width="22.8" height="22.8" rx="0" fill="#e6e6e6" /><g transform="rotate(0 826.4 758.7)"><polygon points="826.4,727.3000000000001 834.0,739.2 818.8,739.2" fill="#e6e6e6"/><path d="M837.4 732.3 A28.6 28.6 0 0 1 852.8 747.7" fill="none" stroke="#e6e6e6" stroke-width="3"/></g><g transform="rotate(90 826.4 758.7)"><polygon points="826.4,727.3000000000001 834.0,739.2 818.8,739.2" fill="#e6e6e6"/><path d="M837.4 732.3 A28.6 28.6 0 0 1 852.8 747.7" fill="none" stroke="#e6e6e6" stroke-width="3"/></g><g transform="rotate(180 826.4 758.7)"><polygon points="826.4,727.3000000000001 834.0,739.2 818.8,739.2" fill="#e6e6e6"/><path d="M837.4 732.3 A28.6 28.6 0 0 1 852.8 747.7" fill="none" stroke="#e6e6e6" stroke-width="3"/></g><g transform="rotate(270 826.4 758.7)"><polygon points="826.4,727.3000000000001 834.0,739.2 818.8,739.2" fill="#e6e6e6"/><path d="M837.4 732.3 A28.6 28.6 0 0 1 852.8 747.7" fill="none" stroke="#e6e6e6" stroke-width="3"/></g><rect x="771.8" y="830.0" width="113.5" height="206.0" rx="11" fill="#3b3b3b" fill-opacity="0.9"/><path d="M774.8 928.5 V841 a8 8 0 0 1 8 -8 H874.3 a8 8 0 0 1 8 8 V928.5 Z" fill="#2a2a2a"/><path d="M774.8 933.5 H882.3 V1025 a8 8 0 0 1 -8 8 H782.8 a8 8 0 0 1 -8 -8 Z" fill="#2a2a2a"/><g transform="translate(792.4 898.2) rotate(-43)"><polygon points="0,0 11,-6.2 11,6.2" fill="#e6e6e6"/><rect x="13.5" y="-6.2" width="35.5" height="12.4" fill="#e6e6e6"/><rect x="51.5" y="-6.2" width="9" height="12.4" rx="1.5" fill="#e6e6e6"/></g><path d="M796 902.4 C806 912 822 912 832 899 C842 886 855 884 863 902.4" fill="none" stroke="#8fdcae" stroke-width="3.4"/><polygon points="877.4,913.0 877.4,924.5 865.6,924.5" fill="#8c8c8c"/><path d="M817.5 1006.2 V978.4 A27.8 27.8 0 0 1 845.3 1006.2 Z" fill="#8fdcae"/><path d="M817.5 972.2 A34 34 0 0 1 851.5 1006.2" fill="none" stroke="#8fdcae" stroke-width="3"/><rect x="801.0" y="950.6" width="16.0" height="67.4" rx="0" fill="#e6e6e6" /><rect x="801.0" y="1007.3" width="59.3" height="10.7" rx="0" fill="#e6e6e6" /><path d="M809 956 V1004" stroke="#2b2b2b" stroke-width="8" stroke-dasharray="1.6 2.4" transform="translate(4.6 0)"/><path d="M820 1009.5 H858" stroke="#2b2b2b" stroke-width="5" stroke-dasharray="1.6 2.6"/><rect x="771.8" y="1054.6" width="113.5" height="108.4" rx="11" fill="#3b3b3b" fill-opacity="0.9"/><path d="M774.8 1160 V1065.6 a8 8 0 0 1 8 -8 H874.3 a8 8 0 0 1 8 8 V1160 Z" fill="#2a2a2a"/><path d="M801 1069 V1090.5 M790.3 1079.7 H811.7" stroke="#8fdcae" stroke-width="5.4"/><path d="M806.5 1130 V1095.5 L821 1083.5 H859.5 V1118 M806.5 1095.5 H845.5 V1130 M845.5 1095.5 L859.5 1083.5" fill="none" stroke="#8fdcae" stroke-width="3"/><g style="filter:drop-shadow(0px 0px 2.5px rgba(0,0,0,0.9))"><text x="935.8" y="208.3" font-size="29.5" fill="#ffffff" stroke="#ffffff" stroke-width="0.5" text-anchor="start" font-weight="normal" textLength="278.0" lengthAdjust="spacing" >Right Orthographic</text><text x="936.4" y="260.0" font-size="29.5" fill="#ffffff" stroke="#ffffff" stroke-width="0.5" text-anchor="start" font-weight="normal" textLength="503.6" lengthAdjust="spacing" >(194) 几何节点来做array效果 | 平面</text><text x="938.0" y="309.3" font-size="29.5" fill="#ffffff" stroke="#ffffff" stroke-width="0.5" text-anchor="start" font-weight="normal" textLength="225.4" lengthAdjust="spacing" >10 Centimeters</text></g><circle cx="2202.7" cy="448.5" r="39.5" fill="#282828" fill-opacity="0.85"/><circle cx="2202.7" cy="534.1" r="39.5" fill="#282828" fill-opacity="0.85"/><circle cx="2202.7" cy="619.7" r="39.5" fill="#282828" fill-opacity="0.85"/><circle cx="2202.7" cy="705.3" r="39.5" fill="#282828" fill-opacity="0.85"/><circle cx="2207.2" cy="445.7" r="18.6" fill="#e0e0e0"/><path d="M2195.7 458.5 L2181.7 470.5" stroke="#e0e0e0" stroke-width="6.4" stroke-linecap="round"/><path d="M2207.2 436.7 v18 M2198.2 445.7 h18" stroke="#2a2a2a" stroke-width="2.3"/><path d="M2190.7 556.1 C2185.7 548.1 2178.7 536.1 2181.7 533.1 C2184.7 531.1 2188.7 536.1 2190.7 539.1 L2188.7 520.1 a3.4 3.4 0 0 1 6.8 -1 L2197.7 531.1 L2198.1 514.1 a3.6 3.6 0 0 1 7.2 0 L2205.7 531.1 L2209.2 517.1 a3.5 3.5 0 0 1 7 1 L2213.2 533.1 L2217.7 525.1 a3.2 3.2 0 0 1 6 2.5 C2221.7 540.1 2218.7 550.1 2214.7 556.1 Z" fill="#e0e0e0"/><circle cx="2189.7" cy="613.2" r="8.6" fill="#e0e0e0"/><circle cx="2209.7" cy="611.2" r="10.6" fill="#e0e0e0"/><circle cx="2189.7" cy="613.2" r="3" fill="#2f2f2f"/><circle cx="2209.7" cy="611.2" r="3.6" fill="#2f2f2f"/><rect x="2185.7" y="622.7" width="29.0" height="20.5" rx="3" fill="#e0e0e0" /><polygon points="2215.7,633.2 2226.7,625.7 2226.7,641.7" fill="#e0e0e0"/><polygon points="2180.2,628.7 2185.7,626.2 2185.7,632.7" fill="#e0e0e0"/><path d="M2181.7 683.5999999999999 h44 v43 h-44 Z M2196.2999999999997 683.5999999999999 v43 M2210.8999999999996 683.5999999999999 v43 M2181.7 697.8999999999999 h44 M2181.7 712.3 h44" fill="none" stroke="#e0e0e0" stroke-width="3"/><rect x="2239.5" y="195.0" width="40.0" height="44.0" rx="9" fill="#303030" fill-opacity="0.85"/><path d="M2261.5 206 L2250.5 217 L2261.5 228" fill="none" stroke="#9a9a9a" stroke-width="3.4"/></g><path d="M2034.4999999999998 1289.2 H2216.8999999999996" stroke="#78b41c" stroke-width="10.5"/><path d="M2125.7 1198.0 V1380.4" stroke="#2f80d8" stroke-width="10.5"/><circle cx="2034.4999999999998" cy="1289.2" r="20.2" fill="#51662e" stroke="#78b41c" stroke-width="5.2"/><circle cx="2125.7" cy="1380.4" r="20.2" fill="#2f4a6c" stroke="#2f80d8" stroke-width="5.2"/><circle cx="2216.8999999999996" cy="1289.2" r="22.8" fill="#78b41c"/><text x="2216.8999999999996" y="1298.8" font-size="27" font-weight="bold" text-anchor="middle" fill="#1c3000" fill-opacity="0.82">Y</text><circle cx="2125.7" cy="1198.0" r="22.8" fill="#2f80d8"/><text x="2125.7" y="1207.6" font-size="27" font-weight="bold" text-anchor="middle" fill="#06254a" fill-opacity="0.82">Z</text><circle cx="2125.7" cy="1289.2" r="24.8" fill="#f73c5b"/><circle cx="2125.7" cy="1289.2" r="22.8" fill="none"/><text x="2125.7" y="1298.8" font-size="27" font-weight="bold" text-anchor="middle" fill="#4a0814" fill-opacity="0.82">X</text></svg></div><div class="vp" style="left:1551.5px;top:986.5px;width:1556.5px;height:1116.0px;border-radius:22px 0 0 22px"><svg width="1556.5" height="1116.0" viewBox="2279.5 988.5 1556.5 1116.0" font-family='"Liberation Sans", "Noto Sans CJK SC", sans-serif'><path d="M2278 1535 L3840 1307" stroke="#595959" stroke-width="4" stroke-opacity="0.85"/><path d="M2278 1515 L2574.6 1618.8" stroke="#595959" stroke-width="4" stroke-opacity="0.60"/><path d="M2278 1632 L2512 1696" stroke="#595959" stroke-width="4" stroke-opacity="0.50"/><path d="M2278 1750 L2507 1720" stroke="#595959" stroke-width="4" stroke-opacity="0.40"/><path d="M2278 1716 L2512 1752" stroke="#595959" stroke-width="4" stroke-opacity="0.40"/><path d="M2278 1778 L2512 1766" stroke="#595959" stroke-width="4" stroke-opacity="0.35"/><path d="M2278 1764 L2512 1788" stroke="#595959" stroke-width="4" stroke-opacity="0.35"/><path d="M2278 1800 L2520 1800" stroke="#595959" stroke-width="4" stroke-opacity="0.30"/><path d="M2278 1806 L2530 1822" stroke="#595959" stroke-width="4" stroke-opacity="0.30"/><path d="M2278 1822 L2530 1816" stroke="#595959" stroke-width="4" stroke-opacity="0.25"/><path d="M2278 1834 L2540 1834" stroke="#595959" stroke-width="4" stroke-opacity="0.25"/><path d="M2278 1846 L2540 1846" stroke="#595959" stroke-width="4" stroke-opacity="0.20"/><path d="M2278 1856 L2540 1856" stroke="#595959" stroke-width="4" stroke-opacity="0.15"/><path d="M3232 1667.2 L3840 1617.4" stroke="#595959" stroke-width="4" stroke-opacity="0.75"/><path d="M3233 1723.2 L3840 1683" stroke="#595959" stroke-width="4" stroke-opacity="0.62"/><path d="M3234 1762 L3840 1733.6" stroke="#595959" stroke-width="4" stroke-opacity="0.52"/><path d="M3236 1790 L3840 1772" stroke="#595959" stroke-width="4" stroke-opacity="0.44"/><path d="M3237 1811 L3840 1797" stroke="#595959" stroke-width="4" stroke-opacity="0.36"/><path d="M3238 1828.6 L3840 1818" stroke="#595959" stroke-width="4" stroke-opacity="0.30"/><path d="M3239 1842.7 L3840 1835.7" stroke="#595959" stroke-width="4" stroke-opacity="0.24"/><path d="M3240 1853 L3840 1848" stroke="#595959" stroke-width="4" stroke-opacity="0.18"/><path d="M3743 1135 L3578 1868" stroke="#595959" stroke-width="4" stroke-opacity="0.80"/><path d="M2770 988 L3490 1878" stroke="#595959" stroke-width="4" stroke-opacity="0.55"/><path d="M3840 1745 L3700 1868" stroke="#595959" stroke-width="4" stroke-opacity="0.50"/><path d="M2278 1186 L3010 1003" stroke="#595959" stroke-width="4" stroke-opacity="0.35"/><path d="M2278 1674 L2560 1640.5" stroke="#ad3b4f" stroke-width="5.4"/><path d="M3228 1573 L3840 1509.7" stroke="#ad3b4f" stroke-width="5.4"/><path d="M2278 1322 L2835 1567" stroke="#6b9a27" stroke-width="6"/><path d="M3238 1793 L3540 1956" stroke="url(#yfade)" stroke-width="5.6"/><rect x="2279.5" y="988.5" width="1556.5" height="1116.0" rx="0" fill="url(#vig)" /><clipPath id="v4clip"><path d="M2523.4 1965.0 L2523.4 1965.0 L2536.2 1929.2 L2541.3 1888.4 L2543.8 1862.8 L2551.5 1837.3 L2548.9 1816.9 L2536.2 1781.1 L2518.3 1740.3 L2511.7 1709.6 L2518.3 1684.1 L2551.5 1653.5 L2587.2 1607.5 L2602.6 1576.8 L2613.8 1536.0 L2610.2 1495.1 L2593.4 1464.5 L2594.9 1428.7 L2617.9 1403.2 L2625.5 1377.7 L2605.1 1352.1 L2593.4 1311.3 L2600.0 1285.7 L2592.9 1306.0 L2601.8 1286.9 L2618.0 1283.9 L2653.4 1309.0 L2663.1 1310.5 L2663.7 1294.3 L2671.1 1291.3 L2744.9 1344.4 L2746.3 1344.4 L2756.7 1335.6 L2764.0 1309.0 L2768.5 1300.2 L2795.0 1291.3 L2817.1 1289.8 L2827.5 1306.0 L2834.8 1309.0 L2845.2 1298.7 L2862.9 1294.3 L2866.5 1293.1 L2873.7 1276.3 L2880.0 1270.0 L2890.5 1270.0 L2902.3 1286.0 L2903.1 1251.0 L2907.4 1242.6 L2915.8 1242.6 L2961.2 1295.2 L2962.1 1263.7 L2966.3 1256.5 L2974.7 1256.1 L3012.6 1301.5 L3013.9 1274.2 L3018.9 1265.8 L3029.4 1263.7 L3051.8 1297.3 L3052.6 1259.4 L3057.7 1251.0 L3069.4 1248.9 L3091.8 1282.6 L3092.6 1240.5 L3096.8 1232.1 L3107.3 1230.8 L3133.9 1274.2 L3134.7 1225.8 L3138.9 1217.3 L3149.4 1216.1 L3165.4 1244.7 L3166.3 1192.1 L3171.3 1183.7 L3185.2 1180.7 L3221.0 1255.2 L3225.2 1403.0 L3230.3 1556.0 L3235.4 1709.6 L3239.0 1862.8 L3242.0 1965.0 Z"/></clipPath><path d="M2523.4 1965.0 L2523.4 1965.0 L2536.2 1929.2 L2541.3 1888.4 L2543.8 1862.8 L2551.5 1837.3 L2548.9 1816.9 L2536.2 1781.1 L2518.3 1740.3 L2511.7 1709.6 L2518.3 1684.1 L2551.5 1653.5 L2587.2 1607.5 L2602.6 1576.8 L2613.8 1536.0 L2610.2 1495.1 L2593.4 1464.5 L2594.9 1428.7 L2617.9 1403.2 L2625.5 1377.7 L2605.1 1352.1 L2593.4 1311.3 L2600.0 1285.7 L2592.9 1306.0 L2601.8 1286.9 L2618.0 1283.9 L2653.4 1309.0 L2663.1 1310.5 L2663.7 1294.3 L2671.1 1291.3 L2744.9 1344.4 L2746.3 1344.4 L2756.7 1335.6 L2764.0 1309.0 L2768.5 1300.2 L2795.0 1291.3 L2817.1 1289.8 L2827.5 1306.0 L2834.8 1309.0 L2845.2 1298.7 L2862.9 1294.3 L2866.5 1293.1 L2873.7 1276.3 L2880.0 1270.0 L2890.5 1270.0 L2902.3 1286.0 L2903.1 1251.0 L2907.4 1242.6 L2915.8 1242.6 L2961.2 1295.2 L2962.1 1263.7 L2966.3 1256.5 L2974.7 1256.1 L3012.6 1301.5 L3013.9 1274.2 L3018.9 1265.8 L3029.4 1263.7 L3051.8 1297.3 L3052.6 1259.4 L3057.7 1251.0 L3069.4 1248.9 L3091.8 1282.6 L3092.6 1240.5 L3096.8 1232.1 L3107.3 1230.8 L3133.9 1274.2 L3134.7 1225.8 L3138.9 1217.3 L3149.4 1216.1 L3165.4 1244.7 L3166.3 1192.1 L3171.3 1183.7 L3185.2 1180.7 L3221.0 1255.2 L3225.2 1403.0 L3230.3 1556.0 L3235.4 1709.6 L3239.0 1862.8 L3242.0 1965.0 Z" fill="#2b2b2b" fill-opacity="0.5" stroke="#2b2b2b" stroke-opacity="0.5" stroke-width="5" stroke-linejoin="round"/><path d="M2523.4 1965.0 L2523.4 1965.0 L2536.2 1929.2 L2541.3 1888.4 L2543.8 1862.8 L2551.5 1837.3 L2548.9 1816.9 L2536.2 1781.1 L2518.3 1740.3 L2511.7 1709.6 L2518.3 1684.1 L2551.5 1653.5 L2587.2 1607.5 L2602.6 1576.8 L2613.8 1536.0 L2610.2 1495.1 L2593.4 1464.5 L2594.9 1428.7 L2617.9 1403.2 L2625.5 1377.7 L2605.1 1352.1 L2593.4 1311.3 L2600.0 1285.7 L2592.9 1306.0 L2601.8 1286.9 L2618.0 1283.9 L2653.4 1309.0 L2663.1 1310.5 L2663.7 1294.3 L2671.1 1291.3 L2744.9 1344.4 L2746.3 1344.4 L2756.7 1335.6 L2764.0 1309.0 L2768.5 1300.2 L2795.0 1291.3 L2817.1 1289.8 L2827.5 1306.0 L2834.8 1309.0 L2845.2 1298.7 L2862.9 1294.3 L2866.5 1293.1 L2873.7 1276.3 L2880.0 1270.0 L2890.5 1270.0 L2902.3 1286.0 L2903.1 1251.0 L2907.4 1242.6 L2915.8 1242.6 L2961.2 1295.2 L2962.1 1263.7 L2966.3 1256.5 L2974.7 1256.1 L3012.6 1301.5 L3013.9 1274.2 L3018.9 1265.8 L3029.4 1263.7 L3051.8 1297.3 L3052.6 1259.4 L3057.7 1251.0 L3069.4 1248.9 L3091.8 1282.6 L3092.6 1240.5 L3096.8 1232.1 L3107.3 1230.8 L3133.9 1274.2 L3134.7 1225.8 L3138.9 1217.3 L3149.4 1216.1 L3165.4 1244.7 L3166.3 1192.1 L3171.3 1183.7 L3185.2 1180.7 L3221.0 1255.2 L3225.2 1403.0 L3230.3 1556.0 L3235.4 1709.6 L3239.0 1862.8 L3242.0 1965.0 Z" fill="url(#v4base)" stroke="#9a9a9a" stroke-width="3" stroke-linejoin="round"/><g clip-path="url(#v4clip)"><g filter="url(#blur6)"><path d="M2626.0 1285.7 C2624.9 1290.0 2618.5 1300.2 2619.4 1311.3 C2620.2 1322.3 2625.8 1341.1 2631.1 1352.1 C2636.5 1363.2 2649.4 1369.2 2651.5 1377.7 C2653.7 1386.2 2649.0 1394.7 2643.9 1403.2 C2638.8 1411.7 2625.0 1418.5 2620.9 1428.7 C2616.8 1439.0 2616.8 1453.4 2619.4 1464.5 C2621.9 1475.6 2632.8 1483.2 2636.2 1495.1 C2639.6 1507.1 2641.1 1522.4 2639.8 1536.0 C2638.5 1549.6 2633.0 1564.9 2628.6 1576.8 C2624.1 1588.8 2621.8 1594.7 2613.2 1607.5 C2604.7 1620.3 2589.0 1640.7 2577.5 1653.5 C2566.0 1666.2 2550.9 1674.7 2544.3 1684.1 C2537.7 1693.5 2537.7 1700.3 2537.7 1709.6 C2537.7 1719.0 2540.2 1728.4 2544.3 1740.3 C2548.4 1752.2 2557.1 1768.4 2562.2 1781.1 C2567.3 1793.9 2572.4 1807.5 2574.9 1816.9 C2577.5 1826.2 2578.3 1829.6 2577.5 1837.3 C2576.6 1845.0 2571.5 1854.3 2569.8 1862.8 C2568.1 1871.4 2568.6 1877.3 2567.3 1888.4 C2566.0 1899.4 2565.2 1916.5 2562.2 1929.2 C2559.2 1942.0 2551.5 1959.0 2549.4 1965.0" fill="none" stroke="#d0d0d0" stroke-opacity="0.4" stroke-width="30"/><path d="M2692.4 1293.4 C2694.1 1298.9 2699.2 1314.3 2702.6 1326.6 C2706.0 1338.9 2711.6 1355.5 2712.8 1367.5 C2714.1 1379.4 2713.3 1387.9 2710.3 1398.1 C2707.3 1408.3 2698.4 1419.4 2695.0 1428.7 C2691.6 1438.1 2688.6 1444.1 2689.9 1454.3 C2691.1 1464.5 2699.6 1478.1 2702.6 1490.0 C2705.6 1501.9 2709.0 1514.7 2707.7 1525.8 C2706.4 1536.8 2700.5 1546.2 2695.0 1556.4 C2689.4 1566.6 2681.3 1576.8 2674.5 1587.1 C2667.7 1597.3 2662.6 1607.5 2654.1 1617.7 C2645.6 1627.9 2629.8 1638.1 2623.5 1648.3 C2617.1 1658.6 2615.4 1667.1 2615.8 1679.0 C2616.2 1690.9 2622.2 1707.9 2626.0 1719.8 C2629.8 1731.8 2637.9 1740.3 2638.8 1750.5 C2639.6 1760.7 2633.2 1770.9 2631.1 1781.1 C2629.0 1791.3 2626.0 1799.9 2626.0 1811.8 C2626.0 1823.7 2627.3 1839.9 2631.1 1852.6 C2635.0 1865.4 2644.3 1876.5 2649.0 1888.4 C2653.7 1900.3 2657.1 1911.4 2659.2 1924.1 C2661.3 1936.9 2661.3 1958.2 2661.8 1965.0" fill="none" stroke="#d0d0d0" stroke-opacity="0.4" stroke-width="30"/><path d="M2720.5 1372.6 C2719.6 1380.2 2713.7 1402.4 2715.4 1418.5 C2717.1 1434.7 2725.6 1453.4 2730.7 1469.6 C2735.8 1485.8 2744.3 1501.1 2746.0 1515.6 C2747.7 1530.0 2745.2 1542.8 2740.9 1556.4 C2736.7 1570.0 2727.3 1583.7 2720.5 1597.3 C2713.7 1610.9 2706.4 1623.7 2700.1 1638.1 C2693.7 1652.6 2685.6 1669.6 2682.2 1684.1 C2678.8 1698.6 2678.4 1711.3 2679.6 1725.0 C2680.9 1738.6 2686.0 1753.0 2689.9 1765.8 C2693.7 1778.6 2699.2 1788.8 2702.6 1801.6 C2706.0 1814.3 2708.2 1827.9 2710.3 1842.4 C2712.4 1856.9 2713.7 1867.9 2715.4 1888.4 C2717.1 1908.8 2719.6 1952.2 2720.5 1965.0" fill="none" stroke="#d0d0d0" stroke-opacity="0.4" stroke-width="30"/><path d="M2761.3 1352.1 C2762.2 1360.7 2763.1 1386.2 2766.5 1403.2 C2769.9 1420.2 2776.7 1437.3 2781.8 1454.3 C2786.9 1471.3 2792.8 1488.3 2797.1 1505.3 C2801.4 1522.4 2804.8 1541.1 2807.3 1556.4 C2809.9 1571.7 2815.0 1583.7 2812.4 1597.3 C2809.9 1610.9 2803.1 1623.7 2792.0 1638.1 C2780.9 1652.6 2757.5 1669.6 2746.0 1684.1 C2734.5 1698.6 2725.6 1712.2 2723.0 1725.0 C2720.5 1737.7 2726.0 1747.9 2730.7 1760.7 C2735.4 1773.5 2744.3 1787.9 2751.1 1801.6 C2757.9 1815.2 2766.0 1827.9 2771.6 1842.4 C2777.1 1856.9 2781.8 1867.9 2784.3 1888.4 C2786.9 1908.8 2786.5 1952.2 2786.9 1965.0" fill="none" stroke="#d0d0d0" stroke-opacity="0.4" stroke-width="30"/><path d="M2820.1 1377.7 C2821.4 1386.2 2824.8 1411.7 2827.7 1428.7 C2830.7 1445.8 2835.4 1465.3 2838.0 1479.8 C2840.5 1494.3 2843.1 1502.8 2843.1 1515.6 C2843.1 1528.3 2839.7 1542.8 2838.0 1556.4 C2836.3 1570.0 2832.8 1583.7 2832.8 1597.3 C2832.8 1610.9 2840.5 1623.7 2838.0 1638.1 C2835.4 1652.6 2823.5 1669.6 2817.5 1684.1 C2811.6 1698.6 2803.9 1711.3 2802.2 1725.0 C2800.5 1738.6 2804.8 1751.3 2807.3 1765.8 C2809.9 1780.3 2815.0 1795.6 2817.5 1811.8 C2820.1 1827.9 2822.6 1845.8 2822.6 1862.8 C2822.6 1879.9 2819.2 1896.9 2817.5 1913.9 C2815.8 1930.9 2813.3 1956.5 2812.4 1965.0" fill="none" stroke="#d0d0d0" stroke-opacity="0.4" stroke-width="30"/><path d="M2883.9 1311.3 C2884.3 1322.3 2885.2 1358.1 2886.5 1377.7 C2887.7 1397.3 2892.0 1411.7 2891.6 1428.7 C2891.2 1445.8 2889.5 1463.6 2883.9 1479.8 C2878.4 1496.0 2864.3 1513.0 2858.4 1525.8 C2852.4 1538.5 2849.0 1542.8 2848.2 1556.4 C2847.3 1570.0 2851.6 1590.5 2853.3 1607.5 C2855.0 1624.5 2858.4 1643.2 2858.4 1658.6 C2858.4 1673.9 2853.3 1685.8 2853.3 1699.4 C2853.3 1713.0 2855.8 1725.0 2858.4 1740.3 C2860.9 1755.6 2866.0 1775.2 2868.6 1791.3 C2871.2 1807.5 2873.3 1821.1 2873.7 1837.3 C2874.1 1853.5 2871.2 1867.1 2871.2 1888.4 C2871.2 1909.7 2873.3 1952.2 2873.7 1965.0" fill="none" stroke="#d0d0d0" stroke-opacity="0.4" stroke-width="30"/><path d="M2934.5 1255.1 C2934.9 1262.8 2940.0 1284.9 2937.1 1301.1 C2934.1 1317.2 2921.3 1335.1 2916.6 1352.1 C2912.0 1369.2 2909.0 1386.2 2909.0 1403.2 C2909.0 1420.2 2914.5 1439.0 2916.6 1454.3 C2918.8 1469.6 2924.3 1481.5 2921.7 1495.1 C2919.2 1508.8 2905.2 1522.4 2901.3 1536.0 C2897.5 1549.6 2898.3 1563.2 2898.8 1576.8 C2899.2 1590.5 2902.2 1604.1 2903.9 1617.7 C2905.6 1631.3 2906.9 1639.0 2909.0 1658.6 C2911.1 1678.1 2913.7 1713.9 2916.6 1735.2 C2919.6 1756.4 2926.9 1770.9 2926.9 1786.2 C2926.9 1801.6 2921.7 1811.8 2916.6 1827.1 C2911.5 1842.4 2900.0 1856.0 2896.2 1878.2 C2892.4 1900.3 2894.1 1946.3 2893.7 1959.9" fill="none" stroke="#d0d0d0" stroke-opacity="0.4" stroke-width="30"/><path d="M2995.8 1265.3 C2995.8 1273.8 3001.3 1299.4 2995.8 1316.4 C2990.3 1333.4 2972.0 1350.4 2962.6 1367.5 C2953.2 1384.5 2943.9 1399.8 2939.6 1418.5 C2935.4 1437.3 2934.9 1460.2 2937.1 1479.8 C2939.2 1499.4 2947.3 1516.4 2952.4 1536.0 C2957.5 1555.6 2962.6 1576.8 2967.7 1597.3 C2972.8 1617.7 2979.2 1639.8 2983.0 1658.6 C2986.9 1677.3 2990.3 1692.6 2990.7 1709.6 C2991.1 1726.7 2989.4 1743.7 2985.6 1760.7 C2981.8 1777.7 2969.8 1794.7 2967.7 1811.8 C2965.6 1828.8 2969.4 1845.8 2972.8 1862.8 C2976.2 1879.9 2984.7 1897.7 2988.1 1913.9 C2991.5 1930.1 2992.4 1952.2 2993.2 1959.9" fill="none" stroke="#d0d0d0" stroke-opacity="0.4" stroke-width="30"/><path d="M3039.2 1275.5 C3035.8 1282.3 3023.9 1299.4 3018.8 1316.4 C3013.7 1333.4 3013.7 1358.9 3008.6 1377.7 C3003.5 1396.4 2992.8 1413.4 2988.1 1428.7 C2983.5 1444.1 2979.2 1455.1 2980.5 1469.6 C2981.8 1484.1 2989.0 1499.4 2995.8 1515.6 C3002.6 1531.7 3014.1 1549.6 3021.3 1566.6 C3028.6 1583.7 3034.5 1602.4 3039.2 1617.7 C3043.9 1633.0 3049.4 1643.2 3049.4 1658.6 C3049.4 1673.9 3041.8 1692.6 3039.2 1709.6 C3036.7 1726.7 3036.2 1743.7 3034.1 1760.7 C3032.0 1777.7 3026.4 1794.7 3026.4 1811.8 C3026.4 1828.8 3030.3 1845.8 3034.1 1862.8 C3037.9 1879.9 3046.0 1897.7 3049.4 1913.9 C3052.8 1930.1 3053.7 1952.2 3054.5 1959.9" fill="none" stroke="#d0d0d0" stroke-opacity="0.4" stroke-width="30"/><path d="M3077.5 1265.3 C3076.2 1275.5 3071.6 1303.6 3069.9 1326.6 C3068.1 1349.6 3069.4 1381.9 3067.3 1403.2 C3065.2 1424.5 3059.2 1439.8 3057.1 1454.3 C3055.0 1468.7 3052.4 1476.4 3054.5 1490.0 C3056.7 1503.6 3064.7 1520.7 3069.9 1536.0 C3075.0 1551.3 3080.9 1565.8 3085.2 1582.0 C3089.4 1598.1 3094.1 1617.7 3095.4 1633.0 C3096.7 1648.3 3093.7 1652.6 3092.8 1673.9 C3092.0 1695.2 3091.6 1737.7 3090.3 1760.7 C3089.0 1783.7 3085.2 1794.7 3085.2 1811.8 C3085.2 1828.8 3086.9 1845.8 3090.3 1862.8 C3093.7 1879.9 3102.2 1897.7 3105.6 1913.9 C3109.0 1930.1 3109.9 1952.2 3110.7 1959.9" fill="none" stroke="#d0d0d0" stroke-opacity="0.4" stroke-width="30"/><path d="M3126.0 1255.1 C3127.7 1264.5 3133.7 1290.9 3136.2 1311.3 C3138.8 1331.7 3142.2 1359.8 3141.3 1377.7 C3140.5 1395.5 3133.7 1404.1 3131.1 1418.5 C3128.6 1433.0 3128.2 1448.3 3126.0 1464.5 C3123.9 1480.7 3120.5 1496.8 3118.4 1515.6 C3116.2 1534.3 3114.5 1558.1 3113.3 1576.8 C3112.0 1595.6 3112.0 1610.0 3110.7 1627.9 C3109.4 1645.8 3106.9 1666.2 3105.6 1684.1 C3104.3 1702.0 3103.9 1718.1 3103.0 1735.2 C3102.2 1752.2 3100.2 1769.2 3100.5 1786.2 C3100.7 1803.3 3102.5 1820.3 3104.6 1837.3 C3106.7 1854.3 3109.7 1867.9 3113.3 1888.4 C3116.8 1908.8 3123.9 1948.0 3126.0 1959.9" fill="none" stroke="#d0d0d0" stroke-opacity="0.4" stroke-width="30"/><path d="M3164.3 1255.1 C3165.6 1262.8 3169.9 1284.9 3172.0 1301.1 C3174.1 1317.2 3178.8 1336.0 3177.1 1352.1 C3175.4 1368.3 3166.0 1381.1 3161.8 1398.1 C3157.5 1415.1 3153.7 1434.7 3151.6 1454.3 C3149.4 1473.9 3148.6 1496.8 3149.0 1515.6 C3149.4 1534.3 3150.7 1549.6 3154.1 1566.6 C3157.5 1583.7 3164.8 1600.7 3169.4 1617.7 C3174.1 1634.7 3179.7 1651.8 3182.2 1668.8 C3184.8 1685.8 3185.6 1702.8 3184.8 1719.8 C3183.9 1736.9 3180.5 1755.6 3177.1 1770.9 C3173.7 1786.2 3167.7 1798.2 3164.3 1811.8 C3160.9 1825.4 3156.7 1837.3 3156.7 1852.6 C3156.7 1867.9 3161.8 1885.8 3164.3 1903.7 C3166.9 1921.6 3170.7 1950.5 3172.0 1959.9" fill="none" stroke="#d0d0d0" stroke-opacity="0.4" stroke-width="30"/><path d="M3202.6 1255.1 C3204.3 1262.8 3210.3 1284.9 3212.8 1301.1 C3215.4 1317.2 3220.5 1336.0 3218.0 1352.1 C3215.4 1368.3 3202.2 1385.3 3197.5 1398.1 C3192.8 1410.9 3189.9 1416.8 3189.9 1428.7 C3189.9 1440.7 3193.7 1455.1 3197.5 1469.6 C3201.4 1484.1 3207.7 1499.4 3212.8 1515.6 C3218.0 1531.7 3223.1 1549.6 3228.2 1566.6 C3233.3 1583.7 3239.7 1602.4 3243.5 1617.7 C3247.3 1633.0 3251.2 1644.9 3251.2 1658.6 C3251.2 1672.2 3246.5 1685.8 3243.5 1699.4 C3240.5 1713.0 3236.3 1725.8 3233.3 1740.3 C3230.3 1754.7 3227.7 1770.1 3225.6 1786.2 C3223.5 1802.4 3220.9 1808.4 3220.5 1837.3 C3220.1 1866.2 3222.6 1939.4 3223.1 1959.9" fill="none" stroke="#d0d0d0" stroke-opacity="0.4" stroke-width="30"/></g><g filter="url(#blur3)"><path d="M2607.0 1285.7 C2605.9 1290.0 2599.5 1300.2 2600.4 1311.3 C2601.2 1322.3 2606.8 1341.1 2612.1 1352.1 C2617.5 1363.2 2630.4 1369.2 2632.5 1377.7 C2634.7 1386.2 2630.0 1394.7 2624.9 1403.2 C2619.8 1411.7 2606.0 1418.5 2601.9 1428.7 C2597.8 1439.0 2597.8 1453.4 2600.4 1464.5 C2602.9 1475.6 2613.8 1483.2 2617.2 1495.1 C2620.6 1507.1 2622.1 1522.4 2620.8 1536.0 C2619.5 1549.6 2614.0 1564.9 2609.6 1576.8 C2605.1 1588.8 2602.8 1594.7 2594.2 1607.5 C2585.7 1620.3 2570.0 1640.7 2558.5 1653.5 C2547.0 1666.2 2531.9 1674.7 2525.3 1684.1 C2518.7 1693.5 2518.7 1700.3 2518.7 1709.6 C2518.7 1719.0 2521.2 1728.4 2525.3 1740.3 C2529.4 1752.2 2538.1 1768.4 2543.2 1781.1 C2548.3 1793.9 2553.4 1807.5 2555.9 1816.9 C2558.5 1826.2 2559.3 1829.6 2558.5 1837.3 C2557.6 1845.0 2552.5 1854.3 2550.8 1862.8 C2549.1 1871.4 2549.6 1877.3 2548.3 1888.4 C2547.0 1899.4 2546.2 1916.5 2543.2 1929.2 C2540.2 1942.0 2532.5 1959.0 2530.4 1965.0" fill="none" stroke="#565656" stroke-width="15"/><path d="M2666.4 1293.4 C2668.1 1298.9 2673.2 1314.3 2676.6 1326.6 C2680.0 1338.9 2685.6 1355.5 2686.8 1367.5 C2688.1 1379.4 2687.3 1387.9 2684.3 1398.1 C2681.3 1408.3 2672.4 1419.4 2669.0 1428.7 C2665.6 1438.1 2662.6 1444.1 2663.9 1454.3 C2665.1 1464.5 2673.6 1478.1 2676.6 1490.0 C2679.6 1501.9 2683.0 1514.7 2681.7 1525.8 C2680.4 1536.8 2674.5 1546.2 2669.0 1556.4 C2663.4 1566.6 2655.3 1576.8 2648.5 1587.1 C2641.7 1597.3 2636.6 1607.5 2628.1 1617.7 C2619.6 1627.9 2603.8 1638.1 2597.5 1648.3 C2591.1 1658.6 2589.4 1667.1 2589.8 1679.0 C2590.2 1690.9 2596.2 1707.9 2600.0 1719.8 C2603.8 1731.8 2611.9 1740.3 2612.8 1750.5 C2613.6 1760.7 2607.2 1770.9 2605.1 1781.1 C2603.0 1791.3 2600.0 1799.9 2600.0 1811.8 C2600.0 1823.7 2601.3 1839.9 2605.1 1852.6 C2609.0 1865.4 2618.3 1876.5 2623.0 1888.4 C2627.7 1900.3 2631.1 1911.4 2633.2 1924.1 C2635.3 1936.9 2635.3 1958.2 2635.8 1965.0" fill="none" stroke="#545454" stroke-width="14.5"/><path d="M2694.5 1372.6 C2693.6 1380.2 2687.7 1402.4 2689.4 1418.5 C2691.1 1434.7 2699.6 1453.4 2704.7 1469.6 C2709.8 1485.8 2718.3 1501.1 2720.0 1515.6 C2721.7 1530.0 2719.2 1542.8 2714.9 1556.4 C2710.7 1570.0 2701.3 1583.7 2694.5 1597.3 C2687.7 1610.9 2680.4 1623.7 2674.1 1638.1 C2667.7 1652.6 2659.6 1669.6 2656.2 1684.1 C2652.8 1698.6 2652.4 1711.3 2653.6 1725.0 C2654.9 1738.6 2660.0 1753.0 2663.9 1765.8 C2667.7 1778.6 2673.2 1788.8 2676.6 1801.6 C2680.0 1814.3 2682.2 1827.9 2684.3 1842.4 C2686.4 1856.9 2687.7 1867.9 2689.4 1888.4 C2691.1 1908.8 2693.6 1952.2 2694.5 1965.0" fill="none" stroke="#545454" stroke-width="14.5"/><path d="M2735.3 1352.1 C2736.2 1360.7 2737.1 1386.2 2740.5 1403.2 C2743.9 1420.2 2750.7 1437.3 2755.8 1454.3 C2760.9 1471.3 2766.8 1488.3 2771.1 1505.3 C2775.4 1522.4 2778.8 1541.1 2781.3 1556.4 C2783.9 1571.7 2789.0 1583.7 2786.4 1597.3 C2783.9 1610.9 2777.1 1623.7 2766.0 1638.1 C2754.9 1652.6 2731.5 1669.6 2720.0 1684.1 C2708.5 1698.6 2699.6 1712.2 2697.0 1725.0 C2694.5 1737.7 2700.0 1747.9 2704.7 1760.7 C2709.4 1773.5 2718.3 1787.9 2725.1 1801.6 C2731.9 1815.2 2740.0 1827.9 2745.6 1842.4 C2751.1 1856.9 2755.8 1867.9 2758.3 1888.4 C2760.9 1908.8 2760.5 1952.2 2760.9 1965.0" fill="none" stroke="#545454" stroke-width="14.5"/><path d="M2794.1 1377.7 C2795.4 1386.2 2798.8 1411.7 2801.7 1428.7 C2804.7 1445.8 2809.4 1465.3 2812.0 1479.8 C2814.5 1494.3 2817.1 1502.8 2817.1 1515.6 C2817.1 1528.3 2813.7 1542.8 2812.0 1556.4 C2810.3 1570.0 2806.8 1583.7 2806.8 1597.3 C2806.8 1610.9 2814.5 1623.7 2812.0 1638.1 C2809.4 1652.6 2797.5 1669.6 2791.5 1684.1 C2785.6 1698.6 2777.9 1711.3 2776.2 1725.0 C2774.5 1738.6 2778.8 1751.3 2781.3 1765.8 C2783.9 1780.3 2789.0 1795.6 2791.5 1811.8 C2794.1 1827.9 2796.6 1845.8 2796.6 1862.8 C2796.6 1879.9 2793.2 1896.9 2791.5 1913.9 C2789.8 1930.9 2787.3 1956.5 2786.4 1965.0" fill="none" stroke="#545454" stroke-width="14.5"/><path d="M2857.9 1311.3 C2858.3 1322.3 2859.2 1358.1 2860.5 1377.7 C2861.7 1397.3 2866.0 1411.7 2865.6 1428.7 C2865.2 1445.8 2863.5 1463.6 2857.9 1479.8 C2852.4 1496.0 2838.3 1513.0 2832.4 1525.8 C2826.4 1538.5 2823.0 1542.8 2822.2 1556.4 C2821.3 1570.0 2825.6 1590.5 2827.3 1607.5 C2829.0 1624.5 2832.4 1643.2 2832.4 1658.6 C2832.4 1673.9 2827.3 1685.8 2827.3 1699.4 C2827.3 1713.0 2829.8 1725.0 2832.4 1740.3 C2834.9 1755.6 2840.0 1775.2 2842.6 1791.3 C2845.2 1807.5 2847.3 1821.1 2847.7 1837.3 C2848.1 1853.5 2845.2 1867.1 2845.2 1888.4 C2845.2 1909.7 2847.3 1952.2 2847.7 1965.0" fill="none" stroke="#545454" stroke-width="14.5"/><path d="M2908.5 1255.1 C2908.9 1262.8 2914.0 1284.9 2911.1 1301.1 C2908.1 1317.2 2895.3 1335.1 2890.6 1352.1 C2886.0 1369.2 2883.0 1386.2 2883.0 1403.2 C2883.0 1420.2 2888.5 1439.0 2890.6 1454.3 C2892.8 1469.6 2898.3 1481.5 2895.7 1495.1 C2893.2 1508.8 2879.2 1522.4 2875.3 1536.0 C2871.5 1549.6 2872.3 1563.2 2872.8 1576.8 C2873.2 1590.5 2876.2 1604.1 2877.9 1617.7 C2879.6 1631.3 2880.9 1639.0 2883.0 1658.6 C2885.1 1678.1 2887.7 1713.9 2890.6 1735.2 C2893.6 1756.4 2900.9 1770.9 2900.9 1786.2 C2900.9 1801.6 2895.7 1811.8 2890.6 1827.1 C2885.5 1842.4 2874.0 1856.0 2870.2 1878.2 C2866.4 1900.3 2868.1 1946.3 2867.7 1959.9" fill="none" stroke="#5a5a5a" stroke-width="11.5"/><path d="M2969.8 1265.3 C2969.8 1273.8 2975.3 1299.4 2969.8 1316.4 C2964.3 1333.4 2946.0 1350.4 2936.6 1367.5 C2927.2 1384.5 2917.9 1399.8 2913.6 1418.5 C2909.4 1437.3 2908.9 1460.2 2911.1 1479.8 C2913.2 1499.4 2921.3 1516.4 2926.4 1536.0 C2931.5 1555.6 2936.6 1576.8 2941.7 1597.3 C2946.8 1617.7 2953.2 1639.8 2957.0 1658.6 C2960.9 1677.3 2964.3 1692.6 2964.7 1709.6 C2965.1 1726.7 2963.4 1743.7 2959.6 1760.7 C2955.8 1777.7 2943.8 1794.7 2941.7 1811.8 C2939.6 1828.8 2943.4 1845.8 2946.8 1862.8 C2950.2 1879.9 2958.7 1897.7 2962.1 1913.9 C2965.5 1930.1 2966.4 1952.2 2967.2 1959.9" fill="none" stroke="#5a5a5a" stroke-width="11.5"/><path d="M3013.2 1275.5 C3009.8 1282.3 2997.9 1299.4 2992.8 1316.4 C2987.7 1333.4 2987.7 1358.9 2982.6 1377.7 C2977.5 1396.4 2966.8 1413.4 2962.1 1428.7 C2957.5 1444.1 2953.2 1455.1 2954.5 1469.6 C2955.8 1484.1 2963.0 1499.4 2969.8 1515.6 C2976.6 1531.7 2988.1 1549.6 2995.3 1566.6 C3002.6 1583.7 3008.5 1602.4 3013.2 1617.7 C3017.9 1633.0 3023.4 1643.2 3023.4 1658.6 C3023.4 1673.9 3015.8 1692.6 3013.2 1709.6 C3010.7 1726.7 3010.2 1743.7 3008.1 1760.7 C3006.0 1777.7 3000.4 1794.7 3000.4 1811.8 C3000.4 1828.8 3004.3 1845.8 3008.1 1862.8 C3011.9 1879.9 3020.0 1897.7 3023.4 1913.9 C3026.8 1930.1 3027.7 1952.2 3028.5 1959.9" fill="none" stroke="#5a5a5a" stroke-width="11.5"/><path d="M3051.5 1265.3 C3050.2 1275.5 3045.6 1303.6 3043.9 1326.6 C3042.1 1349.6 3043.4 1381.9 3041.3 1403.2 C3039.2 1424.5 3033.2 1439.8 3031.1 1454.3 C3029.0 1468.7 3026.4 1476.4 3028.5 1490.0 C3030.7 1503.6 3038.7 1520.7 3043.9 1536.0 C3049.0 1551.3 3054.9 1565.8 3059.2 1582.0 C3063.4 1598.1 3068.1 1617.7 3069.4 1633.0 C3070.7 1648.3 3067.7 1652.6 3066.8 1673.9 C3066.0 1695.2 3065.6 1737.7 3064.3 1760.7 C3063.0 1783.7 3059.2 1794.7 3059.2 1811.8 C3059.2 1828.8 3060.9 1845.8 3064.3 1862.8 C3067.7 1879.9 3076.2 1897.7 3079.6 1913.9 C3083.0 1930.1 3083.9 1952.2 3084.7 1959.9" fill="none" stroke="#5a5a5a" stroke-width="11.5"/><path d="M3100.0 1255.1 C3101.7 1264.5 3107.7 1290.9 3110.2 1311.3 C3112.8 1331.7 3116.2 1359.8 3115.3 1377.7 C3114.5 1395.5 3107.7 1404.1 3105.1 1418.5 C3102.6 1433.0 3102.2 1448.3 3100.0 1464.5 C3097.9 1480.7 3094.5 1496.8 3092.4 1515.6 C3090.2 1534.3 3088.5 1558.1 3087.3 1576.8 C3086.0 1595.6 3086.0 1610.0 3084.7 1627.9 C3083.4 1645.8 3080.9 1666.2 3079.6 1684.1 C3078.3 1702.0 3077.9 1718.1 3077.0 1735.2 C3076.2 1752.2 3074.2 1769.2 3074.5 1786.2 C3074.7 1803.3 3076.5 1820.3 3078.6 1837.3 C3080.7 1854.3 3083.7 1867.9 3087.3 1888.4 C3090.8 1908.8 3097.9 1948.0 3100.0 1959.9" fill="none" stroke="#5a5a5a" stroke-width="11.5"/><path d="M3138.3 1255.1 C3139.6 1262.8 3143.9 1284.9 3146.0 1301.1 C3148.1 1317.2 3152.8 1336.0 3151.1 1352.1 C3149.4 1368.3 3140.0 1381.1 3135.8 1398.1 C3131.5 1415.1 3127.7 1434.7 3125.6 1454.3 C3123.4 1473.9 3122.6 1496.8 3123.0 1515.6 C3123.4 1534.3 3124.7 1549.6 3128.1 1566.6 C3131.5 1583.7 3138.8 1600.7 3143.4 1617.7 C3148.1 1634.7 3153.7 1651.8 3156.2 1668.8 C3158.8 1685.8 3159.6 1702.8 3158.8 1719.8 C3157.9 1736.9 3154.5 1755.6 3151.1 1770.9 C3147.7 1786.2 3141.7 1798.2 3138.3 1811.8 C3134.9 1825.4 3130.7 1837.3 3130.7 1852.6 C3130.7 1867.9 3135.8 1885.8 3138.3 1903.7 C3140.9 1921.6 3144.7 1950.5 3146.0 1959.9" fill="none" stroke="#5a5a5a" stroke-width="11.5"/><path d="M3176.6 1255.1 C3178.3 1262.8 3184.3 1284.9 3186.8 1301.1 C3189.4 1317.2 3194.5 1336.0 3192.0 1352.1 C3189.4 1368.3 3176.2 1385.3 3171.5 1398.1 C3166.8 1410.9 3163.9 1416.8 3163.9 1428.7 C3163.9 1440.7 3167.7 1455.1 3171.5 1469.6 C3175.4 1484.1 3181.7 1499.4 3186.8 1515.6 C3192.0 1531.7 3197.1 1549.6 3202.2 1566.6 C3207.3 1583.7 3213.7 1602.4 3217.5 1617.7 C3221.3 1633.0 3225.2 1644.9 3225.2 1658.6 C3225.2 1672.2 3220.5 1685.8 3217.5 1699.4 C3214.5 1713.0 3210.3 1725.8 3207.3 1740.3 C3204.3 1754.7 3201.7 1770.1 3199.6 1786.2 C3197.5 1802.4 3194.9 1808.4 3194.5 1837.3 C3194.1 1866.2 3196.6 1939.4 3197.1 1959.9" fill="none" stroke="#5a5a5a" stroke-width="11.5"/></g><g filter="url(#blur1)"><path d="M2660.6 1293.4 C2662.3 1298.9 2667.4 1314.3 2670.8 1326.6 C2674.2 1338.9 2679.8 1355.5 2681.0 1367.5 C2682.3 1379.4 2681.5 1387.9 2678.5 1398.1 C2675.5 1408.3 2666.6 1419.4 2663.2 1428.7 C2659.8 1438.1 2656.8 1444.1 2658.1 1454.3 C2659.3 1464.5 2667.8 1478.1 2670.8 1490.0 C2673.8 1501.9 2677.2 1514.7 2675.9 1525.8 C2674.6 1536.8 2668.7 1546.2 2663.2 1556.4 C2657.6 1566.6 2649.5 1576.8 2642.7 1587.1 C2635.9 1597.3 2630.8 1607.5 2622.3 1617.7 C2613.8 1627.9 2598.0 1638.1 2591.7 1648.3 C2585.3 1658.6 2583.6 1667.1 2584.0 1679.0 C2584.4 1690.9 2590.4 1707.9 2594.2 1719.8 C2598.0 1731.8 2606.1 1740.3 2607.0 1750.5 C2607.8 1760.7 2601.4 1770.9 2599.3 1781.1 C2597.2 1791.3 2594.2 1799.9 2594.2 1811.8 C2594.2 1823.7 2595.5 1839.9 2599.3 1852.6 C2603.2 1865.4 2612.5 1876.5 2617.2 1888.4 C2621.9 1900.3 2625.3 1911.4 2627.4 1924.1 C2629.5 1936.9 2629.5 1958.2 2630.0 1965.0" fill="none" stroke="#505050" stroke-width="3.5" stroke-opacity="0.9"/><path d="M2688.7 1372.6 C2687.8 1380.2 2681.9 1402.4 2683.6 1418.5 C2685.3 1434.7 2693.8 1453.4 2698.9 1469.6 C2704.0 1485.8 2712.5 1501.1 2714.2 1515.6 C2715.9 1530.0 2713.4 1542.8 2709.1 1556.4 C2704.9 1570.0 2695.5 1583.7 2688.7 1597.3 C2681.9 1610.9 2674.6 1623.7 2668.3 1638.1 C2661.9 1652.6 2653.8 1669.6 2650.4 1684.1 C2647.0 1698.6 2646.6 1711.3 2647.8 1725.0 C2649.1 1738.6 2654.2 1753.0 2658.1 1765.8 C2661.9 1778.6 2667.4 1788.8 2670.8 1801.6 C2674.2 1814.3 2676.4 1827.9 2678.5 1842.4 C2680.6 1856.9 2681.9 1867.9 2683.6 1888.4 C2685.3 1908.8 2687.8 1952.2 2688.7 1965.0" fill="none" stroke="#505050" stroke-width="3.5" stroke-opacity="0.9"/><path d="M2729.5 1352.1 C2730.4 1360.7 2731.3 1386.2 2734.7 1403.2 C2738.1 1420.2 2744.9 1437.3 2750.0 1454.3 C2755.1 1471.3 2761.0 1488.3 2765.3 1505.3 C2769.6 1522.4 2773.0 1541.1 2775.5 1556.4 C2778.1 1571.7 2783.2 1583.7 2780.6 1597.3 C2778.1 1610.9 2771.3 1623.7 2760.2 1638.1 C2749.1 1652.6 2725.7 1669.6 2714.2 1684.1 C2702.7 1698.6 2693.8 1712.2 2691.2 1725.0 C2688.7 1737.7 2694.2 1747.9 2698.9 1760.7 C2703.6 1773.5 2712.5 1787.9 2719.3 1801.6 C2726.1 1815.2 2734.2 1827.9 2739.8 1842.4 C2745.3 1856.9 2750.0 1867.9 2752.5 1888.4 C2755.1 1908.8 2754.7 1952.2 2755.1 1965.0" fill="none" stroke="#505050" stroke-width="3.5" stroke-opacity="0.9"/><path d="M2788.3 1377.7 C2789.6 1386.2 2793.0 1411.7 2795.9 1428.7 C2798.9 1445.8 2803.6 1465.3 2806.2 1479.8 C2808.7 1494.3 2811.3 1502.8 2811.3 1515.6 C2811.3 1528.3 2807.9 1542.8 2806.2 1556.4 C2804.5 1570.0 2801.0 1583.7 2801.0 1597.3 C2801.0 1610.9 2808.7 1623.7 2806.2 1638.1 C2803.6 1652.6 2791.7 1669.6 2785.7 1684.1 C2779.8 1698.6 2772.1 1711.3 2770.4 1725.0 C2768.7 1738.6 2773.0 1751.3 2775.5 1765.8 C2778.1 1780.3 2783.2 1795.6 2785.7 1811.8 C2788.3 1827.9 2790.8 1845.8 2790.8 1862.8 C2790.8 1879.9 2787.4 1896.9 2785.7 1913.9 C2784.0 1930.9 2781.5 1956.5 2780.6 1965.0" fill="none" stroke="#505050" stroke-width="3.5" stroke-opacity="0.9"/><path d="M2852.1 1311.3 C2852.5 1322.3 2853.4 1358.1 2854.7 1377.7 C2855.9 1397.3 2860.2 1411.7 2859.8 1428.7 C2859.4 1445.8 2857.7 1463.6 2852.1 1479.8 C2846.6 1496.0 2832.5 1513.0 2826.6 1525.8 C2820.6 1538.5 2817.2 1542.8 2816.4 1556.4 C2815.5 1570.0 2819.8 1590.5 2821.5 1607.5 C2823.2 1624.5 2826.6 1643.2 2826.6 1658.6 C2826.6 1673.9 2821.5 1685.8 2821.5 1699.4 C2821.5 1713.0 2824.0 1725.0 2826.6 1740.3 C2829.1 1755.6 2834.2 1775.2 2836.8 1791.3 C2839.4 1807.5 2841.5 1821.1 2841.9 1837.3 C2842.3 1853.5 2839.4 1867.1 2839.4 1888.4 C2839.4 1909.7 2841.5 1952.2 2841.9 1965.0" fill="none" stroke="#505050" stroke-width="3.5" stroke-opacity="0.9"/><path d="M2904.1 1255.1 C2904.5 1262.8 2909.6 1284.9 2906.7 1301.1 C2903.7 1317.2 2890.9 1335.1 2886.2 1352.1 C2881.6 1369.2 2878.6 1386.2 2878.6 1403.2 C2878.6 1420.2 2884.1 1439.0 2886.2 1454.3 C2888.4 1469.6 2893.9 1481.5 2891.3 1495.1 C2888.8 1508.8 2874.8 1522.4 2870.9 1536.0 C2867.1 1549.6 2867.9 1563.2 2868.4 1576.8 C2868.8 1590.5 2871.8 1604.1 2873.5 1617.7 C2875.2 1631.3 2876.5 1639.0 2878.6 1658.6 C2880.7 1678.1 2883.3 1713.9 2886.2 1735.2 C2889.2 1756.4 2896.5 1770.9 2896.5 1786.2 C2896.5 1801.6 2891.3 1811.8 2886.2 1827.1 C2881.1 1842.4 2869.6 1856.0 2865.8 1878.2 C2862.0 1900.3 2863.7 1946.3 2863.3 1959.9" fill="none" stroke="#505050" stroke-width="3.5" stroke-opacity="0.9"/><path d="M2965.4 1265.3 C2965.4 1273.8 2970.9 1299.4 2965.4 1316.4 C2959.9 1333.4 2941.6 1350.4 2932.2 1367.5 C2922.8 1384.5 2913.5 1399.8 2909.2 1418.5 C2905.0 1437.3 2904.5 1460.2 2906.7 1479.8 C2908.8 1499.4 2916.9 1516.4 2922.0 1536.0 C2927.1 1555.6 2932.2 1576.8 2937.3 1597.3 C2942.4 1617.7 2948.8 1639.8 2952.6 1658.6 C2956.5 1677.3 2959.9 1692.6 2960.3 1709.6 C2960.7 1726.7 2959.0 1743.7 2955.2 1760.7 C2951.4 1777.7 2939.4 1794.7 2937.3 1811.8 C2935.2 1828.8 2939.0 1845.8 2942.4 1862.8 C2945.8 1879.9 2954.3 1897.7 2957.7 1913.9 C2961.1 1930.1 2962.0 1952.2 2962.8 1959.9" fill="none" stroke="#505050" stroke-width="3.5" stroke-opacity="0.9"/><path d="M3008.8 1275.5 C3005.4 1282.3 2993.5 1299.4 2988.4 1316.4 C2983.3 1333.4 2983.3 1358.9 2978.2 1377.7 C2973.1 1396.4 2962.4 1413.4 2957.7 1428.7 C2953.1 1444.1 2948.8 1455.1 2950.1 1469.6 C2951.4 1484.1 2958.6 1499.4 2965.4 1515.6 C2972.2 1531.7 2983.7 1549.6 2990.9 1566.6 C2998.2 1583.7 3004.1 1602.4 3008.8 1617.7 C3013.5 1633.0 3019.0 1643.2 3019.0 1658.6 C3019.0 1673.9 3011.4 1692.6 3008.8 1709.6 C3006.3 1726.7 3005.8 1743.7 3003.7 1760.7 C3001.6 1777.7 2996.0 1794.7 2996.0 1811.8 C2996.0 1828.8 2999.9 1845.8 3003.7 1862.8 C3007.5 1879.9 3015.6 1897.7 3019.0 1913.9 C3022.4 1930.1 3023.3 1952.2 3024.1 1959.9" fill="none" stroke="#505050" stroke-width="3.5" stroke-opacity="0.9"/><path d="M3047.1 1265.3 C3045.8 1275.5 3041.2 1303.6 3039.5 1326.6 C3037.7 1349.6 3039.0 1381.9 3036.9 1403.2 C3034.8 1424.5 3028.8 1439.8 3026.7 1454.3 C3024.6 1468.7 3022.0 1476.4 3024.1 1490.0 C3026.3 1503.6 3034.3 1520.7 3039.5 1536.0 C3044.6 1551.3 3050.5 1565.8 3054.8 1582.0 C3059.0 1598.1 3063.7 1617.7 3065.0 1633.0 C3066.3 1648.3 3063.3 1652.6 3062.4 1673.9 C3061.6 1695.2 3061.2 1737.7 3059.9 1760.7 C3058.6 1783.7 3054.8 1794.7 3054.8 1811.8 C3054.8 1828.8 3056.5 1845.8 3059.9 1862.8 C3063.3 1879.9 3071.8 1897.7 3075.2 1913.9 C3078.6 1930.1 3079.5 1952.2 3080.3 1959.9" fill="none" stroke="#505050" stroke-width="3.5" stroke-opacity="0.9"/><path d="M3095.6 1255.1 C3097.3 1264.5 3103.3 1290.9 3105.8 1311.3 C3108.4 1331.7 3111.8 1359.8 3110.9 1377.7 C3110.1 1395.5 3103.3 1404.1 3100.7 1418.5 C3098.2 1433.0 3097.8 1448.3 3095.6 1464.5 C3093.5 1480.7 3090.1 1496.8 3088.0 1515.6 C3085.8 1534.3 3084.1 1558.1 3082.9 1576.8 C3081.6 1595.6 3081.6 1610.0 3080.3 1627.9 C3079.0 1645.8 3076.5 1666.2 3075.2 1684.1 C3073.9 1702.0 3073.5 1718.1 3072.6 1735.2 C3071.8 1752.2 3069.8 1769.2 3070.1 1786.2 C3070.3 1803.3 3072.1 1820.3 3074.2 1837.3 C3076.3 1854.3 3079.3 1867.9 3082.9 1888.4 C3086.4 1908.8 3093.5 1948.0 3095.6 1959.9" fill="none" stroke="#505050" stroke-width="3.5" stroke-opacity="0.9"/><path d="M3133.9 1255.1 C3135.2 1262.8 3139.5 1284.9 3141.6 1301.1 C3143.7 1317.2 3148.4 1336.0 3146.7 1352.1 C3145.0 1368.3 3135.6 1381.1 3131.4 1398.1 C3127.1 1415.1 3123.3 1434.7 3121.2 1454.3 C3119.0 1473.9 3118.2 1496.8 3118.6 1515.6 C3119.0 1534.3 3120.3 1549.6 3123.7 1566.6 C3127.1 1583.7 3134.4 1600.7 3139.0 1617.7 C3143.7 1634.7 3149.3 1651.8 3151.8 1668.8 C3154.4 1685.8 3155.2 1702.8 3154.4 1719.8 C3153.5 1736.9 3150.1 1755.6 3146.7 1770.9 C3143.3 1786.2 3137.3 1798.2 3133.9 1811.8 C3130.5 1825.4 3126.3 1837.3 3126.3 1852.6 C3126.3 1867.9 3131.4 1885.8 3133.9 1903.7 C3136.5 1921.6 3140.3 1950.5 3141.6 1959.9" fill="none" stroke="#505050" stroke-width="3.5" stroke-opacity="0.9"/><path d="M3172.2 1255.1 C3173.9 1262.8 3179.9 1284.9 3182.4 1301.1 C3185.0 1317.2 3190.1 1336.0 3187.6 1352.1 C3185.0 1368.3 3171.8 1385.3 3167.1 1398.1 C3162.4 1410.9 3159.5 1416.8 3159.5 1428.7 C3159.5 1440.7 3163.3 1455.1 3167.1 1469.6 C3171.0 1484.1 3177.3 1499.4 3182.4 1515.6 C3187.6 1531.7 3192.7 1549.6 3197.8 1566.6 C3202.9 1583.7 3209.3 1602.4 3213.1 1617.7 C3216.9 1633.0 3220.8 1644.9 3220.8 1658.6 C3220.8 1672.2 3216.1 1685.8 3213.1 1699.4 C3210.1 1713.0 3205.9 1725.8 3202.9 1740.3 C3199.9 1754.7 3197.3 1770.1 3195.2 1786.2 C3193.1 1802.4 3190.5 1808.4 3190.1 1837.3 C3189.7 1866.2 3192.2 1939.4 3192.7 1959.9" fill="none" stroke="#505050" stroke-width="3.5" stroke-opacity="0.9"/></g><path d="M2993.8 1594.7 L3038.7 1587.1 L3039.8 1694.3 L3028.5 1684.1 L3013.2 1653.5 L3000.4 1617.7 Z" fill="#3a3a3a" filter="url(#blur2)"/><path d="M2781.3 1618.7 L2800.7 1615.2 L2809.4 1658.6 L2785.4 1678.0 Z" fill="#3a3a3a" filter="url(#blur2)"/><path d="M3083.7 1576.8 L3089.8 1576.8 L3088.3 1709.6 L3082.7 1709.6 Z" fill="#3a3a3a" filter="url(#blur2)"/><path d="M3090.7 1282.3 L3093.6 1282.3 L3098.0 1305.2 L3108.8 1339.0 L3112.5 1375.3 L3110.0 1411.5 L3104.0 1447.7 L3098.0 1484.0 L3096.0 1520.0 L3088.3 1520.0 L3089.5 1411.5 Z" fill="#3a3a3a" filter="url(#blur2)"/><path d="M3133.7 1267.8 L3134.7 1267.8 L3135.4 1278.7 L3143.8 1305.2 L3147.5 1327.0 L3146.3 1351.0 L3139.0 1375.3 L3133.7 1392.2 Z" fill="#3a3a3a" filter="url(#blur2)"/><path d="M3178.1 1276.3 L3182.5 1290.8 L3187.3 1314.9 L3186.1 1339.0 L3182.5 1360.8 L3178.1 1374.0 Z" fill="#3a3a3a" filter="url(#blur2)"/><g filter="url(#blur1)"><path d="M2615.5 1285.7 C2614.4 1290.0 2608.0 1300.2 2608.9 1311.3 C2609.7 1322.3 2615.3 1341.1 2620.6 1352.1 C2626.0 1363.2 2638.9 1369.2 2641.0 1377.7 C2643.2 1386.2 2638.5 1394.7 2633.4 1403.2 C2628.3 1411.7 2614.5 1418.5 2610.4 1428.7 C2606.3 1439.0 2606.3 1453.4 2608.9 1464.5 C2611.4 1475.6 2622.3 1483.2 2625.7 1495.1 C2629.1 1507.1 2630.6 1522.4 2629.3 1536.0 C2628.0 1549.6 2622.5 1564.9 2618.1 1576.8 C2613.6 1588.8 2611.3 1594.7 2602.7 1607.5 C2594.2 1620.3 2578.5 1640.7 2567.0 1653.5 C2555.5 1666.2 2540.4 1674.7 2533.8 1684.1 C2527.2 1693.5 2527.2 1700.3 2527.2 1709.6 C2527.2 1719.0 2529.7 1728.4 2533.8 1740.3 C2537.9 1752.2 2546.6 1768.4 2551.7 1781.1 C2556.8 1793.9 2561.9 1807.5 2564.4 1816.9 C2567.0 1826.2 2567.8 1829.6 2567.0 1837.3 C2566.1 1845.0 2561.0 1854.3 2559.3 1862.8 C2557.6 1871.4 2558.1 1877.3 2556.8 1888.4 C2555.5 1899.4 2554.7 1916.5 2551.7 1929.2 C2548.7 1942.0 2541.0 1959.0 2538.9 1965.0" fill="none" stroke="#dedede" stroke-width="4.5"/><path d="M2677.9 1293.4 C2679.6 1298.9 2684.7 1314.3 2688.1 1326.6 C2691.5 1338.9 2697.1 1355.5 2698.3 1367.5 C2699.6 1379.4 2698.8 1387.9 2695.8 1398.1 C2692.8 1408.3 2683.9 1419.4 2680.5 1428.7 C2677.1 1438.1 2674.1 1444.1 2675.4 1454.3 C2676.6 1464.5 2685.1 1478.1 2688.1 1490.0 C2691.1 1501.9 2694.5 1514.7 2693.2 1525.8 C2691.9 1536.8 2686.0 1546.2 2680.5 1556.4 C2674.9 1566.6 2666.8 1576.8 2660.0 1587.1 C2653.2 1597.3 2648.1 1607.5 2639.6 1617.7 C2631.1 1627.9 2615.3 1638.1 2609.0 1648.3 C2602.6 1658.6 2600.9 1667.1 2601.3 1679.0 C2601.7 1690.9 2607.7 1707.9 2611.5 1719.8 C2615.3 1731.8 2623.4 1740.3 2624.3 1750.5 C2625.1 1760.7 2618.7 1770.9 2616.6 1781.1 C2614.5 1791.3 2611.5 1799.9 2611.5 1811.8 C2611.5 1823.7 2612.8 1839.9 2616.6 1852.6 C2620.5 1865.4 2629.8 1876.5 2634.5 1888.4 C2639.2 1900.3 2642.6 1911.4 2644.7 1924.1 C2646.8 1936.9 2646.8 1958.2 2647.3 1965.0" fill="none" stroke="#dadada" stroke-width="4.5"/><path d="M2706.0 1372.6 C2705.1 1380.2 2699.2 1402.4 2700.9 1418.5 C2702.6 1434.7 2711.1 1453.4 2716.2 1469.6 C2721.3 1485.8 2729.8 1501.1 2731.5 1515.6 C2733.2 1530.0 2730.7 1542.8 2726.4 1556.4 C2722.2 1570.0 2712.8 1583.7 2706.0 1597.3 C2699.2 1610.9 2691.9 1623.7 2685.6 1638.1 C2679.2 1652.6 2671.1 1669.6 2667.7 1684.1 C2664.3 1698.6 2663.9 1711.3 2665.1 1725.0 C2666.4 1738.6 2671.5 1753.0 2675.4 1765.8 C2679.2 1778.6 2684.7 1788.8 2688.1 1801.6 C2691.5 1814.3 2693.7 1827.9 2695.8 1842.4 C2697.9 1856.9 2699.2 1867.9 2700.9 1888.4 C2702.6 1908.8 2705.1 1952.2 2706.0 1965.0" fill="none" stroke="#dadada" stroke-width="4.5"/><path d="M2746.8 1352.1 C2747.7 1360.7 2748.6 1386.2 2752.0 1403.2 C2755.4 1420.2 2762.2 1437.3 2767.3 1454.3 C2772.4 1471.3 2778.3 1488.3 2782.6 1505.3 C2786.9 1522.4 2790.3 1541.1 2792.8 1556.4 C2795.4 1571.7 2800.5 1583.7 2797.9 1597.3 C2795.4 1610.9 2788.6 1623.7 2777.5 1638.1 C2766.4 1652.6 2743.0 1669.6 2731.5 1684.1 C2720.0 1698.6 2711.1 1712.2 2708.5 1725.0 C2706.0 1737.7 2711.5 1747.9 2716.2 1760.7 C2720.9 1773.5 2729.8 1787.9 2736.6 1801.6 C2743.4 1815.2 2751.5 1827.9 2757.1 1842.4 C2762.6 1856.9 2767.3 1867.9 2769.8 1888.4 C2772.4 1908.8 2772.0 1952.2 2772.4 1965.0" fill="none" stroke="#dadada" stroke-width="4.5"/><path d="M2805.6 1377.7 C2806.9 1386.2 2810.3 1411.7 2813.2 1428.7 C2816.2 1445.8 2820.9 1465.3 2823.5 1479.8 C2826.0 1494.3 2828.6 1502.8 2828.6 1515.6 C2828.6 1528.3 2825.2 1542.8 2823.5 1556.4 C2821.8 1570.0 2818.3 1583.7 2818.3 1597.3 C2818.3 1610.9 2826.0 1623.7 2823.5 1638.1 C2820.9 1652.6 2809.0 1669.6 2803.0 1684.1 C2797.1 1698.6 2789.4 1711.3 2787.7 1725.0 C2786.0 1738.6 2790.3 1751.3 2792.8 1765.8 C2795.4 1780.3 2800.5 1795.6 2803.0 1811.8 C2805.6 1827.9 2808.1 1845.8 2808.1 1862.8 C2808.1 1879.9 2804.7 1896.9 2803.0 1913.9 C2801.3 1930.9 2798.8 1956.5 2797.9 1965.0" fill="none" stroke="#dadada" stroke-width="4.5"/><path d="M2869.4 1311.3 C2869.8 1322.3 2870.7 1358.1 2872.0 1377.7 C2873.2 1397.3 2877.5 1411.7 2877.1 1428.7 C2876.7 1445.8 2875.0 1463.6 2869.4 1479.8 C2863.9 1496.0 2849.8 1513.0 2843.9 1525.8 C2837.9 1538.5 2834.5 1542.8 2833.7 1556.4 C2832.8 1570.0 2837.1 1590.5 2838.8 1607.5 C2840.5 1624.5 2843.9 1643.2 2843.9 1658.6 C2843.9 1673.9 2838.8 1685.8 2838.8 1699.4 C2838.8 1713.0 2841.3 1725.0 2843.9 1740.3 C2846.4 1755.6 2851.5 1775.2 2854.1 1791.3 C2856.7 1807.5 2858.8 1821.1 2859.2 1837.3 C2859.6 1853.5 2856.7 1867.1 2856.7 1888.4 C2856.7 1909.7 2858.8 1952.2 2859.2 1965.0" fill="none" stroke="#dadada" stroke-width="4.5"/><path d="M2920.0 1255.1 C2920.4 1262.8 2925.5 1284.9 2922.6 1301.1 C2919.6 1317.2 2906.8 1335.1 2902.1 1352.1 C2897.5 1369.2 2894.5 1386.2 2894.5 1403.2 C2894.5 1420.2 2900.0 1439.0 2902.1 1454.3 C2904.3 1469.6 2909.8 1481.5 2907.2 1495.1 C2904.7 1508.8 2890.7 1522.4 2886.8 1536.0 C2883.0 1549.6 2883.8 1563.2 2884.3 1576.8 C2884.7 1590.5 2887.7 1604.1 2889.4 1617.7 C2891.1 1631.3 2892.4 1639.0 2894.5 1658.6 C2896.6 1678.1 2899.2 1713.9 2902.1 1735.2 C2905.1 1756.4 2912.4 1770.9 2912.4 1786.2 C2912.4 1801.6 2907.2 1811.8 2902.1 1827.1 C2897.0 1842.4 2885.5 1856.0 2881.7 1878.2 C2877.9 1900.3 2879.6 1946.3 2879.2 1959.9" fill="none" stroke="#dadada" stroke-width="4.5"/><path d="M2981.3 1265.3 C2981.3 1273.8 2986.8 1299.4 2981.3 1316.4 C2975.8 1333.4 2957.5 1350.4 2948.1 1367.5 C2938.7 1384.5 2929.4 1399.8 2925.1 1418.5 C2920.9 1437.3 2920.4 1460.2 2922.6 1479.8 C2924.7 1499.4 2932.8 1516.4 2937.9 1536.0 C2943.0 1555.6 2948.1 1576.8 2953.2 1597.3 C2958.3 1617.7 2964.7 1639.8 2968.5 1658.6 C2972.4 1677.3 2975.8 1692.6 2976.2 1709.6 C2976.6 1726.7 2974.9 1743.7 2971.1 1760.7 C2967.3 1777.7 2955.3 1794.7 2953.2 1811.8 C2951.1 1828.8 2954.9 1845.8 2958.3 1862.8 C2961.7 1879.9 2970.2 1897.7 2973.6 1913.9 C2977.0 1930.1 2977.9 1952.2 2978.7 1959.9" fill="none" stroke="#dadada" stroke-width="4.5"/><path d="M3024.7 1275.5 C3021.3 1282.3 3009.4 1299.4 3004.3 1316.4 C2999.2 1333.4 2999.2 1358.9 2994.1 1377.7 C2989.0 1396.4 2978.3 1413.4 2973.6 1428.7 C2969.0 1444.1 2964.7 1455.1 2966.0 1469.6 C2967.3 1484.1 2974.5 1499.4 2981.3 1515.6 C2988.1 1531.7 2999.6 1549.6 3006.8 1566.6 C3014.1 1583.7 3020.0 1602.4 3024.7 1617.7 C3029.4 1633.0 3034.9 1643.2 3034.9 1658.6 C3034.9 1673.9 3027.3 1692.6 3024.7 1709.6 C3022.2 1726.7 3021.7 1743.7 3019.6 1760.7 C3017.5 1777.7 3011.9 1794.7 3011.9 1811.8 C3011.9 1828.8 3015.8 1845.8 3019.6 1862.8 C3023.4 1879.9 3031.5 1897.7 3034.9 1913.9 C3038.3 1930.1 3039.2 1952.2 3040.0 1959.9" fill="none" stroke="#dadada" stroke-width="4.5"/><path d="M3063.0 1265.3 C3061.7 1275.5 3057.1 1303.6 3055.4 1326.6 C3053.6 1349.6 3054.9 1381.9 3052.8 1403.2 C3050.7 1424.5 3044.7 1439.8 3042.6 1454.3 C3040.5 1468.7 3037.9 1476.4 3040.0 1490.0 C3042.2 1503.6 3050.2 1520.7 3055.4 1536.0 C3060.5 1551.3 3066.4 1565.8 3070.7 1582.0 C3074.9 1598.1 3079.6 1617.7 3080.9 1633.0 C3082.2 1648.3 3079.2 1652.6 3078.3 1673.9 C3077.5 1695.2 3077.1 1737.7 3075.8 1760.7 C3074.5 1783.7 3070.7 1794.7 3070.7 1811.8 C3070.7 1828.8 3072.4 1845.8 3075.8 1862.8 C3079.2 1879.9 3087.7 1897.7 3091.1 1913.9 C3094.5 1930.1 3095.4 1952.2 3096.2 1959.9" fill="none" stroke="#dadada" stroke-width="4.5"/><path d="M3111.5 1255.1 C3113.2 1264.5 3119.2 1290.9 3121.7 1311.3 C3124.3 1331.7 3127.7 1359.8 3126.8 1377.7 C3126.0 1395.5 3119.2 1404.1 3116.6 1418.5 C3114.1 1433.0 3113.7 1448.3 3111.5 1464.5 C3109.4 1480.7 3106.0 1496.8 3103.9 1515.6 C3101.7 1534.3 3100.0 1558.1 3098.8 1576.8 C3097.5 1595.6 3097.5 1610.0 3096.2 1627.9 C3094.9 1645.8 3092.4 1666.2 3091.1 1684.1 C3089.8 1702.0 3089.4 1718.1 3088.5 1735.2 C3087.7 1752.2 3085.7 1769.2 3086.0 1786.2 C3086.2 1803.3 3088.0 1820.3 3090.1 1837.3 C3092.2 1854.3 3095.2 1867.9 3098.8 1888.4 C3102.3 1908.8 3109.4 1948.0 3111.5 1959.9" fill="none" stroke="#dadada" stroke-width="4.5"/><path d="M3149.8 1255.1 C3151.1 1262.8 3155.4 1284.9 3157.5 1301.1 C3159.6 1317.2 3164.3 1336.0 3162.6 1352.1 C3160.9 1368.3 3151.5 1381.1 3147.3 1398.1 C3143.0 1415.1 3139.2 1434.7 3137.1 1454.3 C3134.9 1473.9 3134.1 1496.8 3134.5 1515.6 C3134.9 1534.3 3136.2 1549.6 3139.6 1566.6 C3143.0 1583.7 3150.3 1600.7 3154.9 1617.7 C3159.6 1634.7 3165.2 1651.8 3167.7 1668.8 C3170.3 1685.8 3171.1 1702.8 3170.3 1719.8 C3169.4 1736.9 3166.0 1755.6 3162.6 1770.9 C3159.2 1786.2 3153.2 1798.2 3149.8 1811.8 C3146.4 1825.4 3142.2 1837.3 3142.2 1852.6 C3142.2 1867.9 3147.3 1885.8 3149.8 1903.7 C3152.4 1921.6 3156.2 1950.5 3157.5 1959.9" fill="none" stroke="#dadada" stroke-width="4.5"/><path d="M3188.1 1255.1 C3189.8 1262.8 3195.8 1284.9 3198.3 1301.1 C3200.9 1317.2 3206.0 1336.0 3203.5 1352.1 C3200.9 1368.3 3187.7 1385.3 3183.0 1398.1 C3178.3 1410.9 3175.4 1416.8 3175.4 1428.7 C3175.4 1440.7 3179.2 1455.1 3183.0 1469.6 C3186.9 1484.1 3193.2 1499.4 3198.3 1515.6 C3203.5 1531.7 3208.6 1549.6 3213.7 1566.6 C3218.8 1583.7 3225.2 1602.4 3229.0 1617.7 C3232.8 1633.0 3236.7 1644.9 3236.7 1658.6 C3236.7 1672.2 3232.0 1685.8 3229.0 1699.4 C3226.0 1713.0 3221.8 1725.8 3218.8 1740.3 C3215.8 1754.7 3213.2 1770.1 3211.1 1786.2 C3209.0 1802.4 3206.4 1808.4 3206.0 1837.3 C3205.6 1866.2 3208.1 1939.4 3208.6 1959.9" fill="none" stroke="#dadada" stroke-width="4.5"/></g><rect x="2500.0" y="1170.0" width="760.0" height="800.0" rx="0" fill="url(#v4diag)" /><rect x="2500.0" y="1944.0" width="760.0" height="24.0" rx="0" fill="url(#v4bot)" /></g><rect x="2521.0" y="1952.0" width="724.0" height="16.5" rx="0" fill="url(#v4bot)" /><g clip-path="url(#v4clip)"><path d="M2278 1535 L3840 1307" stroke="#595959" stroke-width="4" stroke-opacity="0.32"/><path d="M2278 1515 L2574.6 1618.8" stroke="#595959" stroke-width="4" stroke-opacity="0.23"/><path d="M2278 1632 L2512 1696" stroke="#595959" stroke-width="4" stroke-opacity="0.19"/><path d="M2278 1750 L2507 1720" stroke="#595959" stroke-width="4" stroke-opacity="0.15"/><path d="M2278 1716 L2512 1752" stroke="#595959" stroke-width="4" stroke-opacity="0.15"/><path d="M2278 1778 L2512 1766" stroke="#595959" stroke-width="4" stroke-opacity="0.13"/><path d="M2278 1764 L2512 1788" stroke="#595959" stroke-width="4" stroke-opacity="0.13"/><path d="M2278 1800 L2520 1800" stroke="#595959" stroke-width="4" stroke-opacity="0.11"/><path d="M2278 1806 L2530 1822" stroke="#595959" stroke-width="4" stroke-opacity="0.11"/><path d="M2278 1822 L2530 1816" stroke="#595959" stroke-width="4" stroke-opacity="0.10"/><path d="M2278 1834 L2540 1834" stroke="#595959" stroke-width="4" stroke-opacity="0.10"/><path d="M2278 1846 L2540 1846" stroke="#595959" stroke-width="4" stroke-opacity="0.08"/><path d="M2278 1856 L2540 1856" stroke="#595959" stroke-width="4" stroke-opacity="0.06"/><path d="M3232 1667.2 L3840 1617.4" stroke="#595959" stroke-width="4" stroke-opacity="0.29"/><path d="M3233 1723.2 L3840 1683" stroke="#595959" stroke-width="4" stroke-opacity="0.24"/><path d="M3234 1762 L3840 1733.6" stroke="#595959" stroke-width="4" stroke-opacity="0.20"/><path d="M3236 1790 L3840 1772" stroke="#595959" stroke-width="4" stroke-opacity="0.17"/><path d="M3237 1811 L3840 1797" stroke="#595959" stroke-width="4" stroke-opacity="0.14"/><path d="M3238 1828.6 L3840 1818" stroke="#595959" stroke-width="4" stroke-opacity="0.11"/><path d="M3239 1842.7 L3840 1835.7" stroke="#595959" stroke-width="4" stroke-opacity="0.09"/><path d="M3240 1853 L3840 1848" stroke="#595959" stroke-width="4" stroke-opacity="0.07"/><path d="M3743 1135 L3578 1868" stroke="#595959" stroke-width="4" stroke-opacity="0.30"/><path d="M2770 988 L3490 1878" stroke="#595959" stroke-width="4" stroke-opacity="0.21"/><path d="M3840 1745 L3700 1868" stroke="#595959" stroke-width="4" stroke-opacity="0.19"/><path d="M2278 1186 L3010 1003" stroke="#595959" stroke-width="4" stroke-opacity="0.13"/><path d="M2278 1322 L2835 1567" stroke="#6b9a27" stroke-width="6" stroke-opacity="0.6"/><path d="M2560 1640.5 L3228 1573" stroke="#ad3b4f" stroke-width="5" stroke-opacity="0.12"/></g><path d="M2992 1657 L3238 1793" stroke="#6b9a27" stroke-width="5.6" stroke-opacity="0.8"/><circle cx="2902.7" cy="1606.3" r="29.6" fill="none" stroke="#ffffff" stroke-width="1.9"/><circle cx="2902.7" cy="1606.3" r="29.6" fill="none" stroke="#ff1a1a" stroke-width="1.9" stroke-dasharray="11.62 11.62" transform="rotate(-12 2902.7 1606.3)"/><path d="M2904 1551 L2902 1588" stroke="#000" stroke-width="4.2"/><path d="M2901 1622 L2897 1663" stroke="#000" stroke-width="4.2"/><path d="M2850 1612 L2886 1606" stroke="#000" stroke-width="4.2"/><path d="M2915 1603 L2955 1600" stroke="#000" stroke-width="4.2"/><path d="M2871 1589 L2890 1600" stroke="#000" stroke-width="4.2"/><path d="M2909 1609 L2931 1621" stroke="#000" stroke-width="4.2"/><g transform="translate(1528 986.5)"><rect x="740.0" y="-10.0" width="1620.0" height="160.0" rx="0" fill="#2b2b2b" fill-opacity="0.55"/><rect x="773.0" y="10.6" width="92.4" height="56.7" rx="12" fill="#3e3e3e" /><rect x="776.0" y="13.6" width="86.4" height="50.7" rx="9" fill="#282828" /><circle cx="816.4" cy="28.4" r="9.8" fill="#e6e6e6"/><path d="M810.5 26 A6 6 0 0 1 817 21.5" fill="none" stroke="#282828" stroke-width="2.2" stroke-linecap="round"/><path d="M788.9 36.6 H805.7 M785.6 49.4 H826.3 M798.7 30.6 L792.6 58.5 M815.9 41.3 L819.2 58.5" fill="none" stroke="#dcdcdc" stroke-width="3.2"/><path d="M837.3 36.8 L846.8 46.4 L856.3 36.8" fill="none" stroke="#e6e6e6" stroke-width="3.3"/><rect x="882.0" y="10.6" width="326.0" height="56.7" rx="12" fill="#3e3e3e" /><rect x="885.0" y="13.6" width="320.0" height="50.7" rx="9" fill="#282828" /><path d="M894.9 29.2 V18.2 H905.9 M924.6999999999999 18.2 H935.6999999999999 V29.2 M935.6999999999999 48.0 V59.0 H924.6999999999999 M905.9 59.0 H894.9 V48.0" fill="none" stroke="#a8a8a8" stroke-width="3.2"/><rect x="903.8" y="27.1" width="23.0" height="23.0" rx="0" fill="#e6e6e6" /><text x="957.5" y="49.9" font-size="29.5" fill="#e6e6e6" stroke="#e6e6e6" stroke-width="0.5" text-anchor="start" font-weight="normal" textLength="188.0" lengthAdjust="spacing" >Object Mode</text><path d="M1179.7 37.2 L1189.2 46.8 L1198.7 37.2" fill="none" stroke="#e6e6e6" stroke-width="3.3"/><text x="1248.0" y="49.9" font-size="29.5" fill="#e6e6e6" stroke="#e6e6e6" stroke-width="0.5" text-anchor="start" font-weight="normal" textLength="68.0" lengthAdjust="spacing" >View</text><text x="1367.6" y="49.9" font-size="29.5" fill="#e6e6e6" stroke="#e6e6e6" stroke-width="0.5" text-anchor="start" font-weight="normal" textLength="90.0" lengthAdjust="spacing" >Select</text><text x="1507.7" y="49.9" font-size="29.5" fill="#e6e6e6" stroke="#e6e6e6" stroke-width="0.5" text-anchor="start" font-weight="normal" textLength="56.3" lengthAdjust="spacing" >Add</text><text x="1615.0" y="49.9" font-size="29.5" fill="#e6e6e6" stroke="#e6e6e6" stroke-width="0.5" text-anchor="start" font-weight="normal" textLength="95.0" lengthAdjust="spacing" >Object</text><rect x="1781.2" y="10.6" width="236.5" height="56.7" rx="12" fill="#3e3e3e" /><rect x="1784.2" y="13.6" width="230.5" height="50.7" rx="9" fill="#282828" /><path d="M1806.8 46.4 L1825 28.2 M1815.5 28.2 H1825 V37.7" fill="none" stroke="#8c8c8c" stroke-width="3"/><path d="M1801.3 45 V19.5 M1794.3 27 L1801.3 19.5 L1808.3 27" fill="none" stroke="#e6e6e6" stroke-width="3.2"/><path d="M1807.2 51.2 H1833 M1825.8 44 L1833.2 51.2 L1825.8 58.4" fill="none" stroke="#e6e6e6" stroke-width="3.2"/><circle cx="1802.1" cy="50.4" r="4.7" fill="none" stroke="#e6e6e6" stroke-width="3.2"/><text x="1856.3" y="49.9" font-size="29.5" fill="#e6e6e6" stroke="#e6e6e6" stroke-width="0.5" text-anchor="start" font-weight="normal" textLength="93.5" lengthAdjust="spacing" >Global</text><path d="M1990.0 37.3 L1999.5 46.9 L2009.0 37.3" fill="none" stroke="#e6e6e6" stroke-width="3.3"/><rect x="2035.0" y="10.6" width="92.0" height="56.7" rx="12" fill="#3e3e3e" /><rect x="2038.0" y="13.6" width="86.0" height="50.7" rx="9" fill="#282828" /><path d="M2064.5 25.5 A12 12 0 1 1 2078 43" fill="none" stroke="#e0e0e0" stroke-width="3"/><path d="M2058 33.7 A12 12 0 1 0 2072.2 46.5" fill="none" stroke="#e0e0e0" stroke-width="3"/><circle cx="2069" cy="36.8" r="4.2" fill="#e6e6e6"/><path d="M2098.9 37.3 L2108.4 46.9 L2117.9 37.3" fill="none" stroke="#e6e6e6" stroke-width="3.3"/><rect x="2144.0" y="10.6" width="152.5" height="56.7" rx="12" fill="#3e3e3e" /><path d="M2156 13.6 H2197.6 V64.3 H2156 a9 9 0 0 1 -9 -9 V22.6 a9 9 0 0 1 9 -9 Z" fill="#545454"/><path d="M2202.4 13.6 H2284.5 a9 9 0 0 1 9 9 V55.3 a9 9 0 0 1 -9 9 H2202.4 Z" fill="#282828"/><g transform="translate(2172.5 39) rotate(45)" fill="none" stroke="#9b9b9b" stroke-width="3" stroke-linejoin="round"><path d="M-16 14 V-2 A16 16 0 0 1 16 -2 V14 H7 V-2 A7 7 0 0 0 -7 -2 V14 Z"/></g><path d="M2211.4 35.8 V56.5 M2228.6 35.8 V56.5 M2246 35.8 V56.5 M2211.4 46.4 H2246" fill="none" stroke="#dcdcdc" stroke-width="3.2"/><path d="M2220.2 42 V51 M2237.4 42 V51" fill="none" stroke="#dcdcdc" stroke-width="2.6"/><rect x="2239.0" y="18.6" width="11.6" height="11.8" rx="0" fill="#e6e6e6" /><path d="M2267.0 37.3 L2276.5 46.9 L2286.0 37.3" fill="none" stroke="#e6e6e6" stroke-width="3.3"/><rect x="773.0" y="85.6" width="278.0" height="56.8" rx="12" fill="#3a3a3a" /><path d="M785.0 88.6 H826.7 V139.3 H785.0 a9 9 0 0 1 -9 -9 V97.6 a9 9 0 0 1 9 -9 Z" fill="#4772b3"/><rect x="831.4" y="88.6" width="50.7" height="50.7" rx="0" fill="#545454" /><rect x="886.8" y="88.6" width="50.7" height="50.7" rx="0" fill="#545454" /><rect x="942.3" y="88.6" width="50.7" height="50.7" rx="0" fill="#545454" /><path d="M997.6800000000001 88.6 H1039.38 a9 9 0 0 1 9 9 V130.3 a9 9 0 0 1 -9 9 H997.6800000000001 Z" fill="#545454"/><path d="M783.2 102.2 V95.2 H790.2 M813.8 95.2 H820.8 V102.2 M820.8 124.69999999999999 V131.7 H813.8 M790.2 131.7 H783.2 V124.69999999999999 M793.2 95.2 h7 M793.2 131.7 h7 M783.2 104.8 v7 M820.8 104.8 v7 M803.8 95.2 h7 M803.8 131.7 h7 M783.2 115.1 v7 M820.8 115.1 v7 " fill="none" stroke="#ffffff" stroke-width="3.4"/><rect x="849.3" y="93.5" width="28.3" height="28.2" rx="0" fill="#c9c9c9" /><rect x="837.3" y="105.7" width="28.0" height="27.7" rx="0" fill="#c9c9c9" /><path d="M905.3999999999999 93.5 H932.9 V121.7 H918.8 V108.5 H905.3999999999999 Z" fill="#c9c9c9"/><path d="M893.6 112.6 V107.6 H898.6 M893.6 117.3 v5 M893.6 127 V132 H898.6 M903.9 132 h5 M914.2 132 H919.2 V127" fill="none" stroke="#c9c9c9" stroke-width="3"/><rect x="959.9" y="93.5" width="28.3" height="28.2" rx="0" fill="#c9c9c9" /><rect x="947.9" y="105.7" width="28.0" height="27.7" rx="0" fill="#c9c9c9" /><rect x="959.9" y="105.7" width="16.0" height="16.0" rx="0" fill="#545454" /><path d="M1004.3 100.0 V95.0 H1009.3 M1037.2 95.0 H1042.2 V100.0 M1042.2 126.9 V131.9 H1037.2 M1009.3 131.9 H1004.3 V126.9 M1020.8 95.0 h5 M1020.8 131.9 h5 M1004.3 111.0 v5 M1042.2 111.0 v5 " fill="none" stroke="#c9c9c9" stroke-width="3"/><rect x="1014.8" y="105.7" width="16.5" height="16.0" rx="0" fill="#c9c9c9" /><path d="M1106.7 108.0 L1119.8 121.6 L1132.9 108.0" fill="none" stroke="#e6e6e6" stroke-width="3.4"/><polygon points="1166.6,91.3 1185.4,102.2 1185.4,124.0 1166.6,134.9 1147.8,124.0 1147.8,102.2" fill="url(#hexg)"/><rect x="1208.3" y="85.6" width="277.3" height="56.8" rx="12" fill="#3a3a3a" /><path d="M1220.3 88.6 H1262.0 V139.3 H1220.3 a9 9 0 0 1 -9 -9 V97.6 a9 9 0 0 1 9 -9 Z" fill="#4772b3"/><rect x="1266.6" y="88.6" width="50.7" height="50.7" rx="0" fill="#545454" /><rect x="1321.9" y="88.6" width="50.7" height="50.7" rx="0" fill="#545454" /><rect x="1377.1" y="88.6" width="50.7" height="50.7" rx="0" fill="#545454" /><path d="M1432.42 88.6 H1474.1200000000001 a9 9 0 0 1 9 9 V130.3 a9 9 0 0 1 -9 9 H1432.42 Z" fill="#545454"/><path d="M1216.4 104.3 V93.3 H1227.4 M1245.7 93.3 H1256.7 V104.3 M1256.7 122.6 V133.6 H1245.7 M1227.4 133.6 H1216.4 V122.6" fill="none" stroke="#c3d0e8" stroke-width="3.2"/><rect x="1224.9" y="101.7" width="23.4" height="23.4" rx="0" fill="#ffffff" /><circle cx="1292" cy="113.7" r="18.6" fill="#545454" stroke="#cfcfcf" stroke-width="3"/><path d="M1292 113.7 V95.1 A18.6 18.6 0 0 0 1273.4 113.7 Q1284 122.7 1292 122.7 Z" fill="#cfcfcf"/><path d="M1292 122.7 Q1302 121.7 1310.6 113.7 A18.6 18.6 0 0 1 1292 132.3 Z" fill="#cfcfcf"/><path d="M1340.5 94 L1328 126 Q1336 131 1345 129 L1352 112 Z" fill="#cfcfcf"/><circle cx="1360.5" cy="122" r="9.5" fill="#545454" stroke="#cfcfcf" stroke-width="3"/><path d="M1356 120.5 A5 5 0 0 1 1360.5 116.5" fill="none" stroke="#cfcfcf" stroke-width="2"/><circle cx="1361.5" cy="98.8" r="5.6" fill="#cfcfcf"/><circle cx="1402.6" cy="113.7" r="18.2" fill="none" stroke="#cfcfcf" stroke-width="3"/><path d="M1397.6 98.7 q8 -3 13 1 l3 6 l-6 5 l-7 -2 l-3 5 l-6 -3 l1 -7 Z" fill="#cfcfcf"/><path d="M1399.6 114.7 l8 -3 l9 4 l2 6 l-5 8 l-8 2 l-4 -6 l-5 -5 Z" fill="#cfcfcf"/><path d="M1385.6 108.7 l4 3 l-1 7 l-4 1 Z" fill="#cfcfcf"/><path d="M1381.6 134.7 L1390.6 125.7 M1414.6 101.7 L1423.6 92.7" stroke="#cfcfcf" stroke-width="3"/><path d="M1454.0 93.5 a3.5 3.5 0 0 1 7 0 V109 H1471.5 V131 H1449.5 l-2 -6 l-4 6 H1437.5 V124 H1443.5 V109 H1454.0 Z M1443.5 116 H1471.5" fill="none" stroke="#cfcfcf" stroke-width="3" stroke-linejoin="round"/><rect x="1489.4" y="85.7" width="594.8" height="56.1" rx="12" fill="#3a3a3a" /><rect x="1492.4" y="88.7" width="588.8" height="50.1" rx="9" fill="#1d1d1d" /><circle cx="1520.4" cy="109.5" r="9.8" fill="none" stroke="#e0e0e0" stroke-width="3"/><path d="M1513.4 117.0 L1502.4 129.5" stroke="#e0e0e0" stroke-width="3.4"/><rect x="2088.0" y="85.7" width="300.0" height="56.7" rx="12" fill="#3a3a3a" /><path d="M2100.0 88.7 H2142.0 V139.3 H2100.0 a9 9 0 0 1 -9 -9 V97.7 a9 9 0 0 1 9 -9 Z" fill="#545454"/><rect x="2146.5" y="88.7" width="55.0" height="50.6" rx="0" fill="#545454" /><rect x="2206.5" y="88.7" width="91.0" height="50.6" rx="0" fill="#282828" /><rect x="2302.1" y="88.7" width="60.0" height="50.6" rx="0" fill="#282828" /><path d="M2099.5 111 Q2116.5 137 2133.5 111" fill="none" stroke="#b4b4b4" stroke-width="2.6"/><path d="M2160.0 93.4 H2186.2 V134.2 L2173.1 123.5 L2160.0 134.2 Z" fill="#e6e6e6"/><path d="M2215.5 96.5 V126.5 H2235.5 M2215.5 105 H2235.5" fill="none" stroke="#ffffff" stroke-width="4.6"/><path d="M2235.2 97.5 h9 l2.5 2 h9 v12.6 h-20.5 Z" fill="#ffffff"/><path d="M2235.2 119.6 h9 l2.5 2 h9 v12.6 h-20.5 Z" fill="#ffffff"/><path d="M2271.8 111.5 L2281.7 121.4 L2291.6 111.5" fill="none" stroke="#e6e6e6" stroke-width="3.3"/><path d="M2306.0 90.5 H2338.5 L2326.0 106 V136 H2321.5 V108 Z" fill="#d4d4d4"/><rect x="771.8" y="175.0" width="113.5" height="205.5" rx="11" fill="#3b3b3b" fill-opacity="0.9"/><path d="M774.8 273.5 V186 a8 8 0 0 1 8 -8 H874.3 a8 8 0 0 1 8 8 V273.5 Z" fill="#4772b3"/><path d="M774.8 277.5 H882.3 V369.5 a8 8 0 0 1 -8 8 H782.8 a8 8 0 0 1 -8 -8 Z" fill="#2a2a2a"/><rect x="796.6" y="196.3" width="60.2" height="58.2" rx="3" fill="none" stroke="#f4a81d" stroke-width="4.2" stroke-dasharray="9.2 5"/><polygon points="817.7,210.4 817.7,242.0 840.8,232.0" fill="#dedede"/><polygon points="877.4,258.0 877.4,269.5 865.6,269.5" fill="#8fa3c7"/><circle cx="827" cy="326" r="31.5" fill="none" stroke="#ffffff" stroke-width="4.6"/><circle cx="827" cy="326" r="31.5" fill="none" stroke="#b84a4a" stroke-width="4.6" stroke-dasharray="12.37 12.37" transform="rotate(-101 827 326)"/><path d="M827 306 V319 M827 333 V346 M806 326 H820 M834 326 H848" stroke="#dcdcdc" stroke-width="3"/><rect x="771.8" y="397.5" width="113.5" height="413.9" rx="11" fill="#3b3b3b" fill-opacity="0.9"/><path d="M774.8 495.5 V408.5 a8 8 0 0 1 8 -8 H874.3 a8 8 0 0 1 8 8 V495.5 Z" fill="#2a2a2a"/><rect x="774.8" y="501.0" width="107.5" height="98.7" rx="0" fill="#2a2a2a" /><rect x="774.8" y="605.4" width="107.5" height="98.9" rx="0" fill="#2a2a2a" /><path d="M774.8 710 H882.3 V800.4 a8 8 0 0 1 -8 8 H782.8 a8 8 0 0 1 -8 -8 Z" fill="#2a2a2a"/><g transform="rotate(0 826.4 448.2)"><polygon points="826.4,414.59999999999997 835.1999999999999,427.2 817.6,427.2" fill="#e2e2e2"/><rect x="823.4" y="430.7" width="6" height="7.5" fill="#e2e2e2"/></g><g transform="rotate(90 826.4 448.2)"><polygon points="826.4,414.59999999999997 835.1999999999999,427.2 817.6,427.2" fill="#e2e2e2"/><rect x="823.4" y="430.7" width="6" height="7.5" fill="#e2e2e2"/></g><g transform="rotate(180 826.4 448.2)"><polygon points="826.4,414.59999999999997 835.1999999999999,427.2 817.6,427.2" fill="#e2e2e2"/><rect x="823.4" y="430.7" width="6" height="7.5" fill="#e2e2e2"/></g><g transform="rotate(270 826.4 448.2)"><polygon points="826.4,414.59999999999997 835.1999999999999,427.2 817.6,427.2" fill="#e2e2e2"/><rect x="823.4" y="430.7" width="6" height="7.5" fill="#e2e2e2"/></g><polygon points="826.4,539.8 836.9,550.3 826.4,560.8 815.9,550.3" fill="#b9b9b9"/><path d="M801.9 538.8 A27 27 0 0 1 845.9 531.8" fill="none" stroke="#e2e2e2" stroke-width="3.2"/><path d="M850.9 561.8 A27 27 0 0 1 806.9 568.8" fill="none" stroke="#e2e2e2" stroke-width="3.2"/><polygon points="792.9,545.8 808.9,545.8 800.9,560.3" fill="#e2e2e2"/><polygon points="843.9,551.8 859.9,551.8 851.9,537.8" fill="#e2e2e2"/><path d="M803.3 652 V631.5 H849.6 V677.5 H829" fill="none" stroke="#a9a9a9" stroke-width="3"/><rect x="800.4" y="653.9" width="26.6" height="26.2" rx="0" fill="#e6e6e6" /><path d="M829.6 651.2 L841 639.8" stroke="#e6e6e6" stroke-width="3.4"/><polygon points="835.2,637.2 844.8,636.2 843.8,645.6" fill="#e6e6e6"/><polygon points="877.4,688.8 877.4,700.3 865.6,700.3" fill="#8c8c8c"/><rect x="815.0" y="747.3" width="22.8" height="22.8" rx="0" fill="#e6e6e6" /><g transform="rotate(0 826.4 758.7)"><polygon points="826.4,727.3000000000001 834.0,739.2 818.8,739.2" fill="#e6e6e6"/><path d="M837.4 732.3 A28.6 28.6 0 0 1 852.8 747.7" fill="none" stroke="#e6e6e6" stroke-width="3"/></g><g transform="rotate(90 826.4 758.7)"><polygon points="826.4,727.3000000000001 834.0,739.2 818.8,739.2" fill="#e6e6e6"/><path d="M837.4 732.3 A28.6 28.6 0 0 1 852.8 747.7" fill="none" stroke="#e6e6e6" stroke-width="3"/></g><g transform="rotate(180 826.4 758.7)"><polygon points="826.4,727.3000000000001 834.0,739.2 818.8,739.2" fill="#e6e6e6"/><path d="M837.4 732.3 A28.6 28.6 0 0 1 852.8 747.7" fill="none" stroke="#e6e6e6" stroke-width="3"/></g><g transform="rotate(270 826.4 758.7)"><polygon points="826.4,727.3000000000001 834.0,739.2 818.8,739.2" fill="#e6e6e6"/><path d="M837.4 732.3 A28.6 28.6 0 0 1 852.8 747.7" fill="none" stroke="#e6e6e6" stroke-width="3"/></g><rect x="771.8" y="830.0" width="113.5" height="206.0" rx="11" fill="#3b3b3b" fill-opacity="0.9"/><path d="M774.8 928.5 V841 a8 8 0 0 1 8 -8 H874.3 a8 8 0 0 1 8 8 V928.5 Z" fill="#2a2a2a"/><path d="M774.8 933.5 H882.3 V1025 a8 8 0 0 1 -8 8 H782.8 a8 8 0 0 1 -8 -8 Z" fill="#2a2a2a"/><g transform="translate(792.4 898.2) rotate(-43)"><polygon points="0,0 11,-6.2 11,6.2" fill="#e6e6e6"/><rect x="13.5" y="-6.2" width="35.5" height="12.4" fill="#e6e6e6"/><rect x="51.5" y="-6.2" width="9" height="12.4" rx="1.5" fill="#e6e6e6"/></g><path d="M796 902.4 C806 912 822 912 832 899 C842 886 855 884 863 902.4" fill="none" stroke="#8fdcae" stroke-width="3.4"/><polygon points="877.4,913.0 877.4,924.5 865.6,924.5" fill="#8c8c8c"/><path d="M817.5 1006.2 V978.4 A27.8 27.8 0 0 1 845.3 1006.2 Z" fill="#8fdcae"/><path d="M817.5 972.2 A34 34 0 0 1 851.5 1006.2" fill="none" stroke="#8fdcae" stroke-width="3"/><rect x="801.0" y="950.6" width="16.0" height="67.4" rx="0" fill="#e6e6e6" /><rect x="801.0" y="1007.3" width="59.3" height="10.7" rx="0" fill="#e6e6e6" /><path d="M809 956 V1004" stroke="#2b2b2b" stroke-width="8" stroke-dasharray="1.6 2.4" transform="translate(4.6 0)"/><path d="M820 1009.5 H858" stroke="#2b2b2b" stroke-width="5" stroke-dasharray="1.6 2.6"/><rect x="771.8" y="1054.6" width="113.5" height="108.4" rx="11" fill="#3b3b3b" fill-opacity="0.9"/><path d="M774.8 1160 V1065.6 a8 8 0 0 1 8 -8 H874.3 a8 8 0 0 1 8 8 V1160 Z" fill="#2a2a2a"/><path d="M801 1069 V1090.5 M790.3 1079.7 H811.7" stroke="#8fdcae" stroke-width="5.4"/><path d="M806.5 1130 V1095.5 L821 1083.5 H859.5 V1118 M806.5 1095.5 H845.5 V1130 M845.5 1095.5 L859.5 1083.5" fill="none" stroke="#8fdcae" stroke-width="3"/><g style="filter:drop-shadow(0px 0px 2.5px rgba(0,0,0,0.9))"><text x="935.8" y="208.3" font-size="29.5" fill="#ffffff" stroke="#ffffff" stroke-width="0.5" text-anchor="start" font-weight="normal" textLength="252.0" lengthAdjust="spacing" >User Perspective</text><text x="936.4" y="260.0" font-size="29.5" fill="#ffffff" stroke="#ffffff" stroke-width="0.5" text-anchor="start" font-weight="normal" textLength="503.6" lengthAdjust="spacing" >(194) 几何节点来做array效果 | 平面</text></g></g><circle cx="3758.5" cy="1289.5" r="19.4" fill="#703a44" stroke="#d6384f" stroke-width="5.2"/><circle cx="3816" cy="1250.5" r="21.4" fill="#51662e" stroke="#8bd41e" stroke-width="5.2"/><circle cx="3846" cy="1195" r="22" fill="#2f80d8"/><circle cx="3846" cy="1366" r="19.4" fill="#2f4a6c" stroke="#2f80d8" stroke-width="5.2"/></svg></div><div style="position:absolute;left:0;top:2103px;width:3108px;height:55px;overflow:hidden"><svg width="3108" height="55" viewBox="728 2105 3108 55" font-family='"Liberation Sans", "Noto Sans CJK SC", sans-serif' style="display:block"><rect x="728.0" y="2119.5" width="3112.0" height="50.0" rx="0" fill="#1e1e1e" /><rect x="700.0" y="2127.8" width="180.6" height="50.0" rx="12" fill="#3e3e3e" /><rect x="700.0" y="2131.3" width="177.2" height="50.0" rx="9" fill="#282828" /><text x="728.4" y="2168.5" font-size="29.5" fill="#e6e6e6" stroke="#e6e6e6" stroke-width="0.5" text-anchor="start" font-weight="normal" textLength="71.5" lengthAdjust="spacing" >difier</text><path d="M851.8 2153.8 L861.3 2163.4 L870.8 2153.8" fill="none" stroke="#e6e6e6" stroke-width="3.3"/><text x="920.5" y="2168.5" font-size="29.5" fill="#e6e6e6" stroke="#e6e6e6" stroke-width="0.5" text-anchor="start" font-weight="normal" textLength="68.5" lengthAdjust="spacing" >View</text><text x="1040.0" y="2168.5" font-size="29.5" fill="#e6e6e6" stroke="#e6e6e6" stroke-width="0.5" text-anchor="start" font-weight="normal" textLength="89.0" lengthAdjust="spacing" >Select</text><text x="1180.5" y="2168.5" font-size="29.5" fill="#e6e6e6" stroke="#e6e6e6" stroke-width="0.5" text-anchor="start" font-weight="normal" textLength="54.5" lengthAdjust="spacing" >Add</text><text x="1288.4" y="2168.5" font-size="29.5" fill="#e6e6e6" stroke="#e6e6e6" stroke-width="0.5" text-anchor="start" font-weight="normal" textLength="75.6" lengthAdjust="spacing" >Node</text><rect x="1960.4" y="2127.8" width="453.6" height="50.0" rx="12" fill="#3e3e3e" /><path d="M1973.5 2131.3 H2050 V2170 H1964.5 V2140.3 a9 9 0 0 1 9 -9 Z" fill="#282828"/><path d="M2054.7 2131.3 H2401 a9 9 0 0 1 9 9 V2170 H2054.7 Z" fill="#545454"/><rect x="1979.4" y="2136.2" width="24.0" height="17.4" rx="4.5" fill="#e6e6e6" /><rect x="1982.5" y="2145.6" width="17.8" height="3.0" rx="0" fill="#282828" /><rect x="1979.4" y="2157.5" width="24.0" height="10.0" rx="4.5" fill="#e6e6e6" /><path d="M2004.5 2139 H2008 a4.5 4.5 0 0 1 4.5 4.5 V2165" fill="none" stroke="#e6e6e6" stroke-width="3"/><path d="M2024.8 2153.8 L2034.3 2163.4 L2043.8 2153.8" fill="none" stroke="#e6e6e6" stroke-width="3.3"/><path d="M2086 2143 V2170 M2073 2156.2 H2099" stroke="#e6e6e6" stroke-width="3"/><text x="2224.0" y="2168.5" font-size="29.5" fill="#e6e6e6" stroke="#e6e6e6" stroke-width="0.5" text-anchor="start" font-weight="normal" textLength="63.8" lengthAdjust="spacing" >New</text><g transform="translate(2462 2152) rotate(38)"><path d="M-8 -19 H8 L6 -13 V-2 L12 5 H-12 L-6 -2 V-13 Z M0 5 V20" fill="none" stroke="#a0a0a0" stroke-width="3" stroke-linejoin="round"/></g><rect x="3603.5" y="2127.8" width="58.0" height="50.0" rx="12" fill="#3a3a3a" /><rect x="3607.0" y="2131.3" width="50.6" height="50.0" rx="9" fill="#353535" /><path d="M3628.7 2137.5 V2170 M3616.2 2150 L3628.7 2137.5 L3641.2 2150" fill="none" stroke="#7a7a7a" stroke-width="3"/><rect x="3677.0" y="2127.8" width="153.6" height="50.0" rx="12" fill="#3e3e3e" /><path d="M3689.7 2131.3 H3731.2 V2170 H3680.7 V2140.3 a9 9 0 0 1 9 -9 Z" fill="#545454"/><path d="M3735.8 2131.3 H3817.7 a9 9 0 0 1 9 9 V2170 H3735.8 Z" fill="#282828"/><g transform="translate(3706.5 2157.5) rotate(45)" fill="none" stroke="#9b9b9b" stroke-width="3" stroke-linejoin="round"><path d="M-16 14 V-2 A16 16 0 0 1 16 -2 V14 H7 V-2 A7 7 0 0 0 -7 -2 V14 Z"/></g><rect x="3748.3" y="2139.4" width="14.0" height="14.0" rx="0" fill="#e6e6e6" /><path d="M3775.4 2136.6 V2170 M3766 2146 H3785.5 M3755.3 2156 V2170" stroke="#c8c8c8" stroke-width="3"/><path d="M3801.7 2154.4 L3811.2 2164.0 L3820.7 2154.4" fill="none" stroke="#e6e6e6" stroke-width="3.3"/></svg></div></div></body></html>
